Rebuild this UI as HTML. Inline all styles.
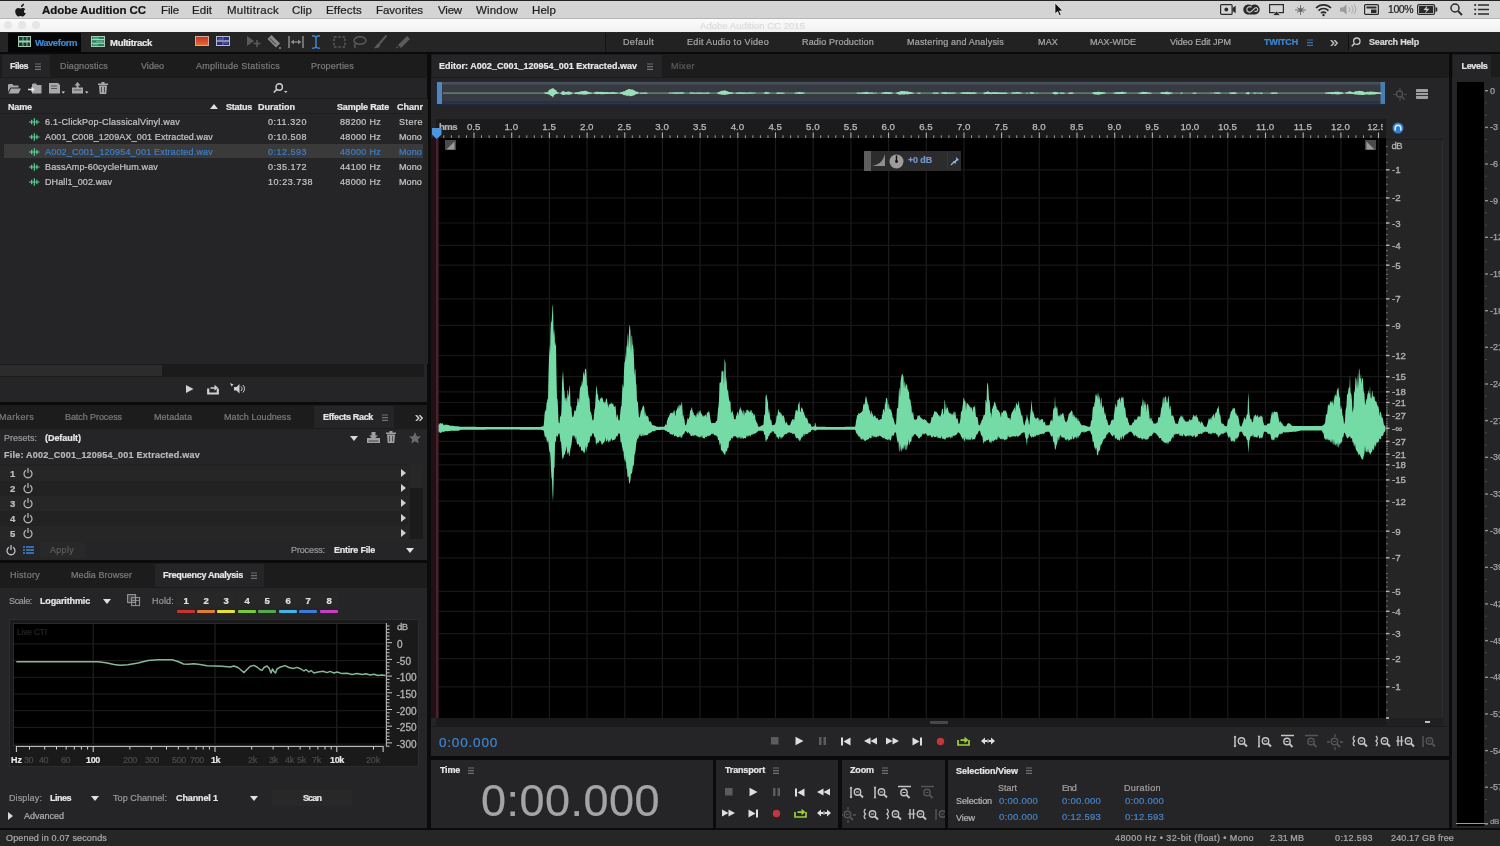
<!DOCTYPE html>
<html><head><meta charset="utf-8"><title>Adobe Audition CC</title>
<style>
html,body{margin:0;padding:0;background:#000;}
body{width:1500px;height:846px;position:relative;overflow:hidden;font-family:"Liberation Sans",sans-serif;}
#app{position:absolute;left:0;top:0;width:1500px;height:846px;overflow:hidden;background:#0b0b0b;filter:blur(.35px);}
#app div,#app span,#app svg{position:absolute;white-space:nowrap;}
#app svg{overflow:visible}
#app span{-webkit-text-stroke:.22px}
</style></head><body><div id="app">
<div style="left:0px;top:0px;width:1500px;height:19px;background:#d4d4d4;border-top:1px solid #222;box-sizing:border-box;"></div>
<div style="left:0px;top:18px;width:1500px;height:1px;background:#b5b5b5;"></div>
<svg style="left:15px;top:3px;" width="12" height="14" viewBox="0 0 12 14"><path d="M8.2 3.1c.6-.7.9-1.6.8-2.5-.8.1-1.7.6-2.2 1.2-.5.6-.9 1.5-.8 2.3.9.1 1.7-.4 2.2-1zM10.9 10c-.4 1-1 1.900-1.600 2.600-.5.6-1.100 1-1.800 1-.8 0-1-.5-2-.5s-1.300.5-2 .5c-.7 0-1.200-.5-1.700-1.100C.5 11 -.3 8.600.5 6.800c.5-1.100 1.600-1.900 2.700-1.900.9 0 1.500.5 2.300.5.700 0 1.200-.5 2.300-.5.900 0 1.900.5 2.500 1.300-2 1.200-1.700 4 .6 3.800z" fill="#1a1a1a"/></svg>
<span style="left:42px;top:1.5px;font-size:11.5px;line-height:16px;color:#141414;font-weight:bold;letter-spacing:-0.058px;">Adobe Audition CC</span>
<span style="left:161px;top:1.5px;font-size:11.5px;line-height:16px;color:#1e1e1e;letter-spacing:-0.133px;">File</span>
<span style="left:192px;top:1.5px;font-size:11.5px;line-height:16px;color:#1e1e1e;letter-spacing:0.046px;">Edit</span>
<span style="left:227px;top:1.5px;font-size:11.5px;line-height:16px;color:#1e1e1e;letter-spacing:0.280px;">Multitrack</span>
<span style="left:292px;top:1.5px;font-size:11.5px;line-height:16px;color:#1e1e1e;letter-spacing:0.047px;">Clip</span>
<span style="left:326px;top:1.5px;font-size:11.5px;line-height:16px;color:#1e1e1e;letter-spacing:0.151px;">Effects</span>
<span style="left:376px;top:1.5px;font-size:11.5px;line-height:16px;color:#1e1e1e;letter-spacing:-0.033px;">Favorites</span>
<span style="left:438px;top:1.5px;font-size:11.5px;line-height:16px;color:#1e1e1e;letter-spacing:-0.180px;">View</span>
<span style="left:476px;top:1.5px;font-size:11.5px;line-height:16px;color:#1e1e1e;letter-spacing:0.183px;">Window</span>
<span style="left:532px;top:1.5px;font-size:11.5px;line-height:16px;color:#1e1e1e;letter-spacing:0.087px;">Help</span>
<svg style="left:1220px;top:4px;" width="16" height="11" viewBox="0 0 16 11"><rect x=".6" y=".6" width="11.500" height="9.800" rx="1" fill="none" stroke="#2a2a2a" stroke-width="1.200"/><circle cx="6.300" cy="5.500" r="1.900" fill="#2a2a2a"/><path d="M12.500 4l3.200-2.300v7.600L12.500 7z" fill="#2a2a2a"/></svg>
<svg style="left:1243px;top:3px;" width="17" height="13" viewBox="0 0 17 13"><path d="M5.500 1.500C2.500 1.500 .3 3.800 .3 6.500s2.200 5 5.200 5h6c3 0 5.200-2.300 5.200-5s-2.200-5-5.200-5c-1.200 0-2.200.3-3 .9-.8-.6-1.800-.9-3-.9z" fill="#2a2a2a"/><path d="M8.500 4.300c-1.700-1.300-4.700-.4-4.700 2.200 0 2.700 3.200 3.400 4.700 1.800l3-3c1.300-1.200 3.200-.400 3.200 1.200 0 1.800-2 2.500-3.300 1.400" fill="none" stroke="#d2d2d2" stroke-width="1.100"/></svg>
<svg style="left:1269px;top:4px;" width="15" height="12" viewBox="0 0 15 12"><rect x=".6" y=".6" width="13.800" height="8" fill="none" stroke="#2a2a2a" stroke-width="1.200"/><path d="M3.500 11.500l4-4.500 4 4.500z" fill="#2a2a2a" stroke="#d4d4d4" stroke-width=".8"/></svg>
<svg style="left:1295px;top:5px;" width="11" height="10" viewBox="0 0 11 10"><path d="M5.500 0v10M0 5h11M2 2.500l7 5M9 2.500l-7 5" stroke="#777" stroke-width="1" fill="none"/><circle cx="5.500" cy="5" r="2" fill="#666"/></svg>
<svg style="left:1315px;top:3px;" width="17" height="13" viewBox="0 0 17 13"><path d="M1 5a10.500 10.500 0 0 1 15 0M3.500 7.600a7 7 0 0 1 10 0M6 10.100a3.500 3.500 0 0 1 5 0" fill="none" stroke="#2a2a2a" stroke-width="1.700"/><circle cx="8.500" cy="12" r="1.200" fill="#2a2a2a"/></svg>
<svg style="left:1340px;top:4px;" width="16" height="11" viewBox="0 0 16 11"><path d="M0 3.500h3l3.500-3v10l-3.500-3h-3z" fill="#9a9a9a"/><path d="M9 3a4 4 0 0 1 0 5M11.500 1.500a6.500 6.500 0 0 1 0 8M14 .5a8.500 8.500 0 0 1 0 10" fill="none" stroke="#aaa" stroke-width="1"/></svg>
<svg style="left:1364px;top:4px;" width="15" height="11" viewBox="0 0 15 11"><rect x=".6" y=".6" width="13.800" height="9.800" rx="1" fill="none" stroke="#2a2a2a" stroke-width="1.200"/><rect x="2.500" y="2.500" width="10" height="2" fill="#2a2a2a"/><rect x="7" y="5.500" width="5.500" height="3.500" fill="#2a2a2a"/></svg>
<span style="left:1388px;top:2.0px;font-size:10.5px;line-height:15px;color:#222;letter-spacing:-0.464px;">100%</span>
<svg style="left:1417px;top:4px;" width="21" height="11" viewBox="0 0 21 11"><rect x=".6" y=".6" width="17" height="9.800" rx="1.500" fill="none" stroke="#2a2a2a" stroke-width="1.200"/><rect x="2" y="2" width="14.200" height="7" fill="#2a2a2a"/><rect x="18.500" y="3.500" width="1.800" height="4" fill="#2a2a2a"/><path d="M10.500 1.500l-4 4.500h3l-1.500 3.500 4.500-4.800h-3z" fill="#d4d4d4"/></svg>
<svg style="left:1450px;top:3px;" width="13" height="13" viewBox="0 0 13 13"><circle cx="5" cy="5" r="4" fill="none" stroke="#2a2a2a" stroke-width="1.500"/><path d="M8 8l4 4" stroke="#2a2a2a" stroke-width="1.800"/></svg>
<svg style="left:1474px;top:4px;" width="15" height="11" viewBox="0 0 15 11"><path d="M4 1h11M4 5.500h11M4 10h11" stroke="#2a2a2a" stroke-width="1.600"/><circle cx="1.200" cy="1" r="1.100" fill="#2a2a2a"/><circle cx="1.200" cy="5.500" r="1.100" fill="#2a2a2a"/><circle cx="1.200" cy="10" r="1.100" fill="#2a2a2a"/></svg>
<svg style="left:1054px;top:3px;" width="9" height="14" viewBox="0 0 9 14"><path d="M1 0v11l2.600-2.400 1.800 4 1.800-.8-1.800-3.900h3.400z" fill="#111" stroke="#eee" stroke-width=".7"/></svg>
<div style="left:0px;top:19px;width:1500px;height:13px;background:linear-gradient(#fbfbfb,#f1f1f1);"></div>
<div style="left:4px;top:21px;width:8px;height:8px;background:#e6e6e6;border-radius:50%;"></div>
<div style="left:18px;top:21px;width:8px;height:8px;background:#e6e6e6;border-radius:50%;"></div>
<div style="left:32px;top:21px;width:8px;height:8px;background:#e6e6e6;border-radius:50%;"></div>
<span style="left:700px;top:19.0px;font-size:9.5px;line-height:13px;color:#dcdcdc;letter-spacing:0.043px;">Adobe Audition CC 2015</span>
<div style="left:0px;top:32px;width:1500px;height:20px;background:#252525;"></div>
<div style="left:0px;top:52px;width:1500px;height:2px;background:#0a0a0a;"></div>
<div style="left:0px;top:54px;width:427px;height:348px;background:#252426;"></div>
<div style="left:0px;top:54px;width:427px;height:23px;background:#1c1c1c;"></div>
<div style="left:2px;top:55px;width:48px;height:22px;background:#252426;"></div>
<div style="left:0px;top:405px;width:427px;height:155px;background:#252426;"></div>
<div style="left:0px;top:405px;width:427px;height:23px;background:#1c1c1c;"></div>
<div style="left:314px;top:406px;width:80px;height:22px;background:#252426;"></div>
<div style="left:0px;top:563px;width:427px;height:265px;background:#252426;"></div>
<div style="left:0px;top:563px;width:427px;height:24px;background:#1c1c1c;"></div>
<div style="left:155px;top:564px;width:109px;height:23px;background:#252426;"></div>
<div style="left:431px;top:54px;width:1017.5px;height:702px;background:#252426;"></div>
<div style="left:431px;top:54px;width:1017.5px;height:23px;background:#1c1c1c;"></div>
<div style="left:432px;top:55px;width:230px;height:22px;background:#252426;"></div>
<div style="left:431px;top:759.5px;width:281.5px;height:68.5px;background:#252426;"></div>
<div style="left:716px;top:759.5px;width:122px;height:68.5px;background:#252426;"></div>
<div style="left:841.5px;top:759.5px;width:103.5px;height:68.5px;background:#252426;"></div>
<div style="left:948px;top:759.5px;width:500.5px;height:68.5px;background:#252426;"></div>
<div style="left:1452px;top:54px;width:48px;height:774px;background:#252426;"></div>
<div style="left:1452px;top:54px;width:48px;height:23px;background:#1c1c1c;"></div>
<div style="left:1453px;top:55px;width:40px;height:22px;background:#252426;"></div>
<div style="left:0px;top:830px;width:1500px;height:16px;background:#262626;"></div>
<div style="left:8px;top:33px;width:73px;height:19px;background:#050505;"></div>
<svg style="left:18px;top:36px;" width="13" height="11" viewBox="0 0 13 11"><rect x=".5" y=".5" width="12" height="10" fill="#1d3a30" stroke="#a8c8b8" stroke-width="1"/><path d="M1 5.500h11" stroke="#7fe0b0" stroke-width="2"/><path d="M5 1v9M9 1v9" stroke="#a8c8b8" stroke-width=".8"/></svg>
<span style="left:35px;top:35.5px;font-size:9.5px;line-height:13px;color:#3b8ad8;font-weight:bold;letter-spacing:-0.447px;">Waveform</span>
<svg style="left:91px;top:36px;" width="14" height="11" viewBox="0 0 14 11"><rect x=".5" y=".5" width="13" height="10" fill="#2f7a5c" stroke="#a8c8b8" stroke-width="1"/><path d="M1 3.700h12M1 7.200h12" stroke="#bfe8d4" stroke-width="1"/><path d="M2 2.200h6M5 5.500h7M2 8.800h5" stroke="#46b586" stroke-width="1.400"/></svg>
<span style="left:110px;top:35.5px;font-size:9.5px;line-height:13px;color:#e8e8e8;font-weight:bold;letter-spacing:-0.287px;">Multitrack</span>
<svg style="left:195px;top:36px;" width="14" height="10" viewBox="0 0 14 10"><defs><linearGradient id="sg" x1="0" y1="0" x2="0" y2="1"><stop offset="0" stop-color="#c8302c"/><stop offset="1" stop-color="#e0702c"/></linearGradient></defs><rect x=".5" y=".5" width="13" height="9" fill="url(#sg)" stroke="#d8a8a0" stroke-width="1"/></svg>
<svg style="left:216px;top:36px;" width="14" height="10" viewBox="0 0 14 10"><rect x=".5" y=".5" width="13" height="9" fill="#2a2f78" stroke="#b8b8d8" stroke-width="1"/><path d="M1 5h12" stroke="#c8c8e8" stroke-width="1.200"/><path d="M7 1v8" stroke="#8888c0" stroke-width=".8"/><path d="M2 3h4M8 7h4" stroke="#6a6ab0" stroke-width="1"/></svg>
<svg style="left:246px;top:36px;" width="15" height="12" viewBox="0 0 15 12"><path d="M1 0l7 5-7 5z" fill="#5a5a5a"/><path d="M11 4v7M7.500 7.500h7" stroke="#5a5a5a" stroke-width="1.600"/></svg>
<svg style="left:267px;top:35px;" width="15" height="14" viewBox="0 0 15 14"><path d="M4.500 0l8.500 8.500-4 4L.5 4z" fill="#8a8a8a"/><path d="M3 3.500l6 6" stroke="#333" stroke-width="1"/><rect x="12" y="12" width="2" height="2" fill="#777"/></svg>
<svg style="left:288px;top:36px;" width="16" height="12" viewBox="0 0 16 12"><path d="M1 0v12M15 0v12" stroke="#8a8a8a" stroke-width="1.500"/><path d="M3 6h10" stroke="#8a8a8a" stroke-width="1.300"/><path d="M6 3.500L3 6l3 2.500zM10 3.500L13 6l-3 2.500z" fill="#8a8a8a"/></svg>
<svg style="left:312px;top:35px;" width="8" height="14" viewBox="0 0 8 14"><path d="M0 .7c2 0 4 .5 4 2.300v8c0 1.800-2 2.300-4 2.300M8 .7c-2 0-4 .5-4 2.300M8 13.300c-2 0-4-.5-4-2.300" fill="none" stroke="#3f86cf" stroke-width="1.500"/></svg>
<svg style="left:333px;top:36px;" width="13" height="12" viewBox="0 0 13 12"><rect x="1" y="1" width="11" height="10" fill="none" stroke="#5a5a5a" stroke-width="1.500" stroke-dasharray="2.500 1.700"/></svg>
<svg style="left:352px;top:36px;" width="15" height="13" viewBox="0 0 15 13"><ellipse cx="8" cy="4.500" rx="6" ry="3.700" fill="none" stroke="#5a5a5a" stroke-width="1.500"/><path d="M3.500 7.500q-2 2 0 4.500" fill="none" stroke="#5a5a5a" stroke-width="1.400"/></svg>
<svg style="left:373px;top:35px;" width="15" height="14" viewBox="0 0 15 14"><path d="M13.500 .5L6 9" stroke="#5a5a5a" stroke-width="2"/><path d="M6 8.500c-3 0-2.500 3.500-5.500 4.500 3 .8 7-.5 6.800-3.500z" fill="#5a5a5a"/></svg>
<svg style="left:395px;top:35px;" width="16" height="14" viewBox="0 0 16 14"><path d="M12 1l3 3-9 9-3-3z" fill="#5a5a5a"/><path d="M2 11l1.500 1.500L1 13.500z" fill="#5a5a5a"/></svg>
<div style="left:606px;top:33px;width:742px;height:19px;background:#222;"></div>
<div style="left:605px;top:33px;width:1px;height:19px;background:#141414;"></div>
<span style="left:623px;top:35.5px;font-size:9px;line-height:13px;color:#a6a6a6;letter-spacing:0.355px;">Default</span>
<span style="left:687px;top:35.5px;font-size:9px;line-height:13px;color:#a6a6a6;letter-spacing:0.321px;">Edit Audio to Video</span>
<span style="left:802px;top:35.5px;font-size:9px;line-height:13px;color:#a6a6a6;letter-spacing:0.184px;">Radio Production</span>
<span style="left:907px;top:35.5px;font-size:9px;line-height:13px;color:#a6a6a6;letter-spacing:0.202px;">Mastering and Analysis</span>
<span style="left:1038px;top:35.5px;font-size:9px;line-height:13px;color:#a6a6a6;letter-spacing:0.165px;">MAX</span>
<span style="left:1090px;top:35.5px;font-size:9px;line-height:13px;color:#a6a6a6;letter-spacing:-0.000px;">MAX-WIDE</span>
<span style="left:1170px;top:35.5px;font-size:9px;line-height:13px;color:#a6a6a6;letter-spacing:-0.027px;">Video Edit JPM</span>
<span style="left:1264px;top:35.5px;font-size:9px;line-height:13px;color:#3f86cf;font-weight:bold;letter-spacing:-0.165px;">TWITCH</span>
<svg style="left:1307px;top:38.5px;" width="6" height="8" viewBox="0 0 6 8"><path d="M0 1h6M0 3.700h6M0 6.400h6" stroke="#3f6ea8" stroke-width="1.200"/></svg>
<span style="left:1330px;top:30.5px;font-size:15px;line-height:21px;color:#c8c8c8;">»</span>
<div style="left:1348px;top:34px;width:1px;height:17px;background:#111;"></div>
<svg style="left:1351px;top:37px;" width="10" height="10" viewBox="0 0 10 10"><circle cx="5.800" cy="4.200" r="3.200" fill="none" stroke="#c8c8c8" stroke-width="1.300"/><path d="M3.500 6.500L.7 9.300" stroke="#c8c8c8" stroke-width="1.500"/></svg>
<span style="left:1369px;top:35.5px;font-size:9px;line-height:13px;color:#d8d8d8;font-weight:bold;letter-spacing:-0.184px;">Search Help</span>
<span style="left:10px;top:59.5px;font-size:9px;line-height:13px;color:#e6e6e6;font-weight:bold;letter-spacing:-0.502px;">Files</span>
<svg style="left:35px;top:62.5px;" width="6" height="8" viewBox="0 0 6 8"><path d="M0 1h6M0 3.700h6M0 6.400h6" stroke="#707070" stroke-width="1.200"/></svg>
<span style="left:60px;top:59.5px;font-size:9px;line-height:13px;color:#7a7a7a;letter-spacing:0.134px;">Diagnostics</span>
<span style="left:141px;top:59.5px;font-size:9px;line-height:13px;color:#7a7a7a;letter-spacing:0.028px;">Video</span>
<span style="left:196px;top:59.5px;font-size:9px;line-height:13px;color:#7a7a7a;letter-spacing:0.273px;">Amplitude Statistics</span>
<span style="left:311px;top:59.5px;font-size:9px;line-height:13px;color:#7a7a7a;letter-spacing:0.198px;">Properties</span>
<div style="left:0px;top:77px;width:428px;height:1px;background:#1a1a1a;"></div>
<svg style="left:8px;top:82.8px;" width="13" height="11" viewBox="0 0 13 11"><path d="M0 2.500c0-1 .5-1.500 1.500-1.500h3l1 1.500h5v2H2.500L0 9z" fill="#a8a8a8"/><path d="M3 5.500h10l-2.500 5H.5z" fill="#a8a8a8"/></svg>
<svg style="left:28px;top:82.8px;" width="14" height="11" viewBox="0 0 14 11"><path d="M4 2c0-1 .5-1.500 1.500-1.500h2.500l1 1.500h4.500v8.500H4z" fill="#a8a8a8"/><path d="M0 6.500h5M3.500 4.500l2.200 2-2.200 2" stroke="#e8e8e8" stroke-width="1.400" fill="none"/></svg>
<svg style="left:49px;top:82.8px;" width="16" height="11" viewBox="0 0 16 11"><path d="M0 0h9l2 2v8.500H0z" fill="#a8a8a8"/><path d="M2 3h6M2 5.500h6" stroke="#555" stroke-width="1"/><path d="M12.500 8.500h3.500l-1.750 2z" fill="#d8d8d8"/></svg>
<svg style="left:72px;top:81.8px;" width="18" height="12" viewBox="0 0 18 12"><path d="M0 5.500h11v6H0z" fill="#a8a8a8"/><path d="M5.500 0l3 3.500h-2v2.500h-2V3.500h-2z" fill="#a8a8a8"/><path d="M1.500 8h8" stroke="#555" stroke-width="1"/><path d="M13 9.500h3.500l-1.750 2z" fill="#d8d8d8"/></svg>
<svg style="left:98px;top:81.8px;" width="10" height="12" viewBox="0 0 10 12"><path d="M0 2.200h10M3.500 .700h3" stroke="#a8a8a8" stroke-width="1.400"/><path d="M1 3.500h8l-.7 8.500H1.700z" fill="#a8a8a8"/><path d="M3.500 5v5.500M6.500 5v5.500" stroke="#444" stroke-width=".9"/></svg>
<svg style="left:273px;top:82.8px;" width="16" height="11" viewBox="0 0 16 11"><circle cx="6.200" cy="4" r="3.200" fill="none" stroke="#d0d0d0" stroke-width="1.400"/><path d="M3.800 6.200L.8 9.500" stroke="#d0d0d0" stroke-width="1.600"/><path d="M11 8h3.500l-1.750 2z" fill="#d0d0d0"/></svg>
<div style="left:0px;top:98px;width:428px;height:1px;background:#1a1a1a;"></div>
<span style="left:8px;top:100.8px;font-size:9px;line-height:13px;color:#e6e6e6;font-weight:bold;letter-spacing:-0.128px;">Name</span>
<svg style="left:210px;top:104px;" width="8" height="5" viewBox="0 0 8 5"><path d="M0 5h8L4 0z" fill="#e0e0e0"/></svg>
<span style="left:226px;top:100.8px;font-size:9px;line-height:13px;color:#e6e6e6;font-weight:bold;letter-spacing:-0.252px;">Status</span>
<span style="left:258px;top:100.8px;font-size:9px;line-height:13px;color:#e6e6e6;font-weight:bold;letter-spacing:0.000px;">Duration</span>
<span style="left:337px;top:100.8px;font-size:9px;line-height:13px;color:#e6e6e6;font-weight:bold;letter-spacing:-0.184px;">Sample Rate</span>
<span style="left:397px;top:100.8px;font-size:9px;line-height:13px;color:#e6e6e6;font-weight:bold;letter-spacing:-0.001px;">Chanr</span>
<div style="left:0px;top:113px;width:428px;height:1px;background:#1d1d1d;"></div>
<svg style="left:28.5px;top:118px;" width="11" height="8" viewBox="0 0 11 8"><path d="M0 4h10.500" stroke="#4fc08a" stroke-width="1.100"/><path d="M2.700 1.800v4.400M5.300 .3v7.400M7.900 1.800v4.400" stroke="#62d49e" stroke-width="1.150"/></svg>
<span style="left:45px;top:115.5px;font-size:9px;line-height:13px;color:#c4c4c4;letter-spacing:0.229px;">6.1-ClickPop-ClassicalVinyl.wav</span>
<span style="left:268px;top:115.5px;font-size:9px;line-height:13px;color:#c4c4c4;letter-spacing:0.579px;">0:11.320</span>
<span style="left:340px;top:115.5px;font-size:9px;line-height:13px;color:#c4c4c4;letter-spacing:0.309px;">88200 Hz</span>
<span style="left:399px;top:115.5px;font-size:9px;line-height:13px;color:#c4c4c4;letter-spacing:0.497px;">Stere</span>
<svg style="left:28.5px;top:133px;" width="11" height="8" viewBox="0 0 11 8"><path d="M0 4h10.500" stroke="#4fc08a" stroke-width="1.100"/><path d="M2.700 1.800v4.400M5.300 .3v7.400M7.900 1.800v4.400" stroke="#62d49e" stroke-width="1.150"/></svg>
<span style="left:45px;top:130.5px;font-size:9px;line-height:13px;color:#c4c4c4;letter-spacing:0.129px;">A001_C008_1209AX_001 Extracted.wav</span>
<span style="left:268px;top:130.5px;font-size:9px;line-height:13px;color:#c4c4c4;letter-spacing:0.496px;">0:10.508</span>
<span style="left:340px;top:130.5px;font-size:9px;line-height:13px;color:#c4c4c4;letter-spacing:0.309px;">48000 Hz</span>
<span style="left:399px;top:130.5px;font-size:9px;line-height:13px;color:#c4c4c4;letter-spacing:0.121px;">Mono</span>
<div style="left:4px;top:144px;width:420px;height:14px;background:#3a3a3a;"></div>
<svg style="left:28.5px;top:148px;" width="11" height="8" viewBox="0 0 11 8"><path d="M0 4h10.500" stroke="#4fc08a" stroke-width="1.100"/><path d="M2.700 1.800v4.400M5.300 .3v7.400M7.900 1.800v4.400" stroke="#62d49e" stroke-width="1.150"/></svg>
<span style="left:45px;top:145.5px;font-size:9px;line-height:13px;color:#3d7ec6;letter-spacing:0.187px;">A002_C001_120954_001 Extracted.wav</span>
<span style="left:268px;top:145.5px;font-size:9px;line-height:13px;color:#3d7ec6;letter-spacing:0.496px;">0:12.593</span>
<span style="left:340px;top:145.5px;font-size:9px;line-height:13px;color:#3d7ec6;letter-spacing:0.309px;">48000 Hz</span>
<span style="left:399px;top:145.5px;font-size:9px;line-height:13px;color:#3d7ec6;letter-spacing:0.121px;">Mono</span>
<svg style="left:28.5px;top:163px;" width="11" height="8" viewBox="0 0 11 8"><path d="M0 4h10.500" stroke="#4fc08a" stroke-width="1.100"/><path d="M2.700 1.800v4.400M5.300 .3v7.400M7.900 1.800v4.400" stroke="#62d49e" stroke-width="1.150"/></svg>
<span style="left:45px;top:160.5px;font-size:9px;line-height:13px;color:#c4c4c4;letter-spacing:0.157px;">BassAmp-60cycleHum.wav</span>
<span style="left:268px;top:160.5px;font-size:9px;line-height:13px;color:#c4c4c4;letter-spacing:0.496px;">0:35.172</span>
<span style="left:340px;top:160.5px;font-size:9px;line-height:13px;color:#c4c4c4;letter-spacing:0.309px;">44100 Hz</span>
<span style="left:399px;top:160.5px;font-size:9px;line-height:13px;color:#c4c4c4;letter-spacing:0.121px;">Mono</span>
<svg style="left:28.5px;top:178px;" width="11" height="8" viewBox="0 0 11 8"><path d="M0 4h10.500" stroke="#4fc08a" stroke-width="1.100"/><path d="M2.700 1.800v4.400M5.300 .3v7.400M7.900 1.800v4.400" stroke="#62d49e" stroke-width="1.150"/></svg>
<span style="left:45px;top:175.5px;font-size:9px;line-height:13px;color:#c4c4c4;letter-spacing:0.104px;">DHall1_002.wav</span>
<span style="left:268px;top:175.5px;font-size:9px;line-height:13px;color:#c4c4c4;letter-spacing:0.551px;">10:23.738</span>
<span style="left:340px;top:175.5px;font-size:9px;line-height:13px;color:#c4c4c4;letter-spacing:0.309px;">48000 Hz</span>
<span style="left:399px;top:175.5px;font-size:9px;line-height:13px;color:#c4c4c4;letter-spacing:0.121px;">Mono</span>
<div style="left:423px;top:99px;width:5px;height:265px;background:#242424;"></div>
<div style="left:0px;top:364px;width:424px;height:13px;background:#1b1b1b;"></div>
<div style="left:0px;top:365px;width:162px;height:11px;background:#2c2c2c;"></div>
<svg style="left:186px;top:385px;" width="8" height="8" viewBox="0 0 8 8"><path d="M0 0l7.500 4-7.500 4z" fill="#d0d0d0"/></svg>
<svg style="left:207px;top:383.5px;" width="13" height="11" viewBox="0 0 13 11"><path d="M1.200 4.500v5h9.600v-5" fill="none" stroke="#d0d0d0" stroke-width="2.200"/><path d="M3.500 3.200h4V.8l3.500 3-3.500 3V4.800h-4z" fill="#d0d0d0"/></svg>
<svg style="left:230px;top:383px;" width="15" height="11" viewBox="0 0 15 11"><path d="M4 4h2.500l3-3v9.500l-3-3H4z" fill="#d0d0d0"/><path d="M11 3.500a3 3 0 0 1 0 4.500M12.800 2a5 5 0 0 1 0 7.500" stroke="#d0d0d0" fill="none" stroke-width="1"/><path d="M0 0l3.500 1.500L1.500 3.500z" fill="#d0d0d0"/></svg>
<span style="left:-1px;top:410.5px;font-size:9px;line-height:13px;color:#7a7a7a;letter-spacing:0.356px;">Markers</span>
<span style="left:65px;top:410.5px;font-size:9px;line-height:13px;color:#7a7a7a;letter-spacing:-0.079px;">Batch Process</span>
<span style="left:154px;top:410.5px;font-size:9px;line-height:13px;color:#7a7a7a;letter-spacing:0.059px;">Metadata</span>
<span style="left:224px;top:410.5px;font-size:9px;line-height:13px;color:#7a7a7a;letter-spacing:0.068px;">Match Loudness</span>
<span style="left:323px;top:410.5px;font-size:9px;line-height:13px;color:#e6e6e6;font-weight:bold;letter-spacing:-0.336px;">Effects Rack</span>
<svg style="left:382px;top:413.5px;" width="6" height="8" viewBox="0 0 6 8"><path d="M0 1h6M0 3.700h6M0 6.400h6" stroke="#707070" stroke-width="1.200"/></svg>
<span style="left:415px;top:405.5px;font-size:15px;line-height:21px;color:#d8d8d8;">»</span>
<div style="left:0px;top:428px;width:428px;height:1px;background:#1a1a1a;"></div>
<span style="left:4px;top:432.0px;font-size:9px;line-height:13px;color:#9a9a9a;letter-spacing:-0.002px;">Presets:</span>
<span style="left:45px;top:432.0px;font-size:9px;line-height:13px;color:#e6e6e6;font-weight:bold;letter-spacing:-0.056px;">(Default)</span>
<svg style="left:350px;top:435.5px;" width="8" height="5" viewBox="0 0 8 5"><path d="M0 0h8l-4.0 5z" fill="#d8d8d8"/></svg>
<svg style="left:367px;top:432px;" width="13" height="11" viewBox="0 0 13 11"><path d="M0 6h13v5H0z" fill="#a0a0a0"/><path d="M4.500 0h4v3.500h2.500l-4.500 4-4.500-4h2.500z" fill="#a0a0a0"/><path d="M1.500 9h10" stroke="#444" stroke-width="1"/></svg>
<svg style="left:386px;top:431px;" width="10" height="12" viewBox="0 0 10 12"><path d="M0 2.200h10M3.500 .700h3" stroke="#a0a0a0" stroke-width="1.400"/><path d="M1 3.500h8l-.7 8.500H1.700z" fill="#a0a0a0"/><path d="M3.500 5v5.500M6.500 5v5.500" stroke="#444" stroke-width=".9"/></svg>
<svg style="left:409px;top:432px;" width="12" height="12" viewBox="0 0 12 12"><path d="M6 0l1.800 4.200 4.200.3-3.200 2.800 1 4.300L6 9.200 2.200 11.600l1-4.300L0 4.500l4.200-.3z" fill="#6a6a6a"/></svg>
<span style="left:4px;top:449.0px;font-size:9px;line-height:13px;color:#b8b8b8;font-weight:bold;letter-spacing:0.230px;">File: A002_C001_120954_001 Extracted.wav</span>
<div style="left:0px;top:464px;width:408px;height:77px;background:#222;"></div>
<div style="left:0px;top:465.5px;width:408px;height:15px;background:#262626;"></div>
<span style="left:10px;top:466.5px;font-size:9.5px;line-height:13px;color:#c0c0c0;font-weight:bold;">1</span>
<svg style="left:23px;top:467.5px;" width="10" height="11" viewBox="0 0 10 11"><path d="M3 2.300a4 4 0 1 0 4 0" fill="none" stroke="#b0b0b0" stroke-width="1.300"/><path d="M5 0v5" stroke="#b0b0b0" stroke-width="1.300"/></svg>
<svg style="left:401px;top:469px;" width="5" height="8" viewBox="0 0 5 8"><path d="M0 0l5 4-5 4z" fill="#d0d0d0"/></svg>
<span style="left:10px;top:481.5px;font-size:9.5px;line-height:13px;color:#c0c0c0;font-weight:bold;">2</span>
<svg style="left:23px;top:482.5px;" width="10" height="11" viewBox="0 0 10 11"><path d="M3 2.300a4 4 0 1 0 4 0" fill="none" stroke="#b0b0b0" stroke-width="1.300"/><path d="M5 0v5" stroke="#b0b0b0" stroke-width="1.300"/></svg>
<svg style="left:401px;top:484px;" width="5" height="8" viewBox="0 0 5 8"><path d="M0 0l5 4-5 4z" fill="#d0d0d0"/></svg>
<div style="left:0px;top:495.5px;width:408px;height:15px;background:#262626;"></div>
<span style="left:10px;top:496.5px;font-size:9.5px;line-height:13px;color:#c0c0c0;font-weight:bold;">3</span>
<svg style="left:23px;top:497.5px;" width="10" height="11" viewBox="0 0 10 11"><path d="M3 2.300a4 4 0 1 0 4 0" fill="none" stroke="#b0b0b0" stroke-width="1.300"/><path d="M5 0v5" stroke="#b0b0b0" stroke-width="1.300"/></svg>
<svg style="left:401px;top:499px;" width="5" height="8" viewBox="0 0 5 8"><path d="M0 0l5 4-5 4z" fill="#d0d0d0"/></svg>
<span style="left:10px;top:511.5px;font-size:9.5px;line-height:13px;color:#c0c0c0;font-weight:bold;">4</span>
<svg style="left:23px;top:512.5px;" width="10" height="11" viewBox="0 0 10 11"><path d="M3 2.300a4 4 0 1 0 4 0" fill="none" stroke="#b0b0b0" stroke-width="1.300"/><path d="M5 0v5" stroke="#b0b0b0" stroke-width="1.300"/></svg>
<svg style="left:401px;top:514px;" width="5" height="8" viewBox="0 0 5 8"><path d="M0 0l5 4-5 4z" fill="#d0d0d0"/></svg>
<div style="left:0px;top:525.5px;width:408px;height:15px;background:#262626;"></div>
<span style="left:10px;top:526.5px;font-size:9.5px;line-height:13px;color:#c0c0c0;font-weight:bold;">5</span>
<svg style="left:23px;top:527.5px;" width="10" height="11" viewBox="0 0 10 11"><path d="M3 2.300a4 4 0 1 0 4 0" fill="none" stroke="#b0b0b0" stroke-width="1.300"/><path d="M5 0v5" stroke="#b0b0b0" stroke-width="1.300"/></svg>
<svg style="left:401px;top:529px;" width="5" height="8" viewBox="0 0 5 8"><path d="M0 0l5 4-5 4z" fill="#d0d0d0"/></svg>
<div style="left:410px;top:465px;width:13px;height:74px;background:#1b1b1b;"></div>
<div style="left:410px;top:465px;width:13px;height:23px;background:#272727;"></div>
<svg style="left:6px;top:544.5px;" width="10" height="11" viewBox="0 0 10 11"><path d="M3 2.300a4 4 0 1 0 4 0" fill="none" stroke="#c0c0c0" stroke-width="1.300"/><path d="M5 0v5" stroke="#c0c0c0" stroke-width="1.300"/></svg>
<svg style="left:23px;top:546px;" width="11" height="8" viewBox="0 0 11 8"><path d="M3 1h8M3 4h8M3 7h8" stroke="#3f86cf" stroke-width="1.500"/><path d="M0 1h2M0 4h2M0 7h2" stroke="#3f86cf" stroke-width="1.500"/></svg>
<div style="left:40px;top:542px;width:46px;height:16px;background:#282828;"></div>
<span style="left:50px;top:543.5px;font-size:9px;line-height:13px;color:#5c5c5c;letter-spacing:0.297px;">Apply</span>
<span style="left:291px;top:543.5px;font-size:9px;line-height:13px;color:#9a9a9a;letter-spacing:-0.127px;">Process:</span>
<span style="left:334px;top:543.5px;font-size:9px;line-height:13px;color:#e6e6e6;font-weight:bold;letter-spacing:-0.228px;">Entire File</span>
<svg style="left:406px;top:547.5px;" width="8" height="5" viewBox="0 0 8 5"><path d="M0 0h8l-4.0 5z" fill="#e0e0e0"/></svg>
<span style="left:10px;top:569.0px;font-size:9px;line-height:13px;color:#7a7a7a;letter-spacing:0.285px;">History</span>
<span style="left:71px;top:569.0px;font-size:9px;line-height:13px;color:#7a7a7a;letter-spacing:0.075px;">Media Browser</span>
<span style="left:163px;top:569.0px;font-size:9px;line-height:13px;color:#e6e6e6;font-weight:bold;letter-spacing:-0.261px;">Frequency Analysis</span>
<svg style="left:251px;top:572.0px;" width="6" height="8" viewBox="0 0 6 8"><path d="M0 1h6M0 3.700h6M0 6.400h6" stroke="#707070" stroke-width="1.200"/></svg>
<div style="left:0px;top:587px;width:428px;height:1px;background:#1a1a1a;"></div>
<span style="left:9px;top:594.8px;font-size:9px;line-height:13px;color:#9a9a9a;letter-spacing:-0.336px;">Scale:</span>
<span style="left:40px;top:594.8px;font-size:9px;line-height:13px;color:#e6e6e6;font-weight:bold;letter-spacing:-0.137px;">Logarithmic</span>
<svg style="left:103px;top:598.5px;" width="8" height="5" viewBox="0 0 8 5"><path d="M0 0h8l-4.0 5z" fill="#e0e0e0"/></svg>
<svg style="left:127px;top:594px;" width="13" height="12" viewBox="0 0 13 12"><rect x=".6" y=".6" width="8" height="8" fill="#444" stroke="#9a9a9a" stroke-width="1"/><rect x="4.600" y="3.600" width="8" height="8" fill="none" stroke="#9a9a9a" stroke-width="1"/><path d="M4.600 6.500h8M8.600 3.600v8" stroke="#9a9a9a" stroke-width=".8"/></svg>
<span style="left:152px;top:594.8px;font-size:9px;line-height:13px;color:#9a9a9a;letter-spacing:0.198px;">Hold:</span>
<div style="left:176px;top:592px;width:20px;height:15px;background:#272727;"></div>
<span style="left:183.5px;top:594.3px;font-size:9.5px;line-height:13px;color:#e0e0e0;font-weight:bold;">1</span>
<div style="left:177px;top:609.7px;width:18px;height:3px;background:#c8342c;border-radius:1px;"></div>
<div style="left:196px;top:592px;width:20px;height:15px;background:#272727;"></div>
<span style="left:203.5px;top:594.3px;font-size:9.5px;line-height:13px;color:#e0e0e0;font-weight:bold;">2</span>
<div style="left:197px;top:609.7px;width:18px;height:3px;background:#e07c34;border-radius:1px;"></div>
<div style="left:216px;top:592px;width:20px;height:15px;background:#272727;"></div>
<span style="left:223.5px;top:594.3px;font-size:9.5px;line-height:13px;color:#e0e0e0;font-weight:bold;">3</span>
<div style="left:217px;top:609.7px;width:18px;height:3px;background:#e6e03c;border-radius:1px;"></div>
<div style="left:237px;top:592px;width:20px;height:15px;background:#272727;"></div>
<span style="left:244.5px;top:594.3px;font-size:9.5px;line-height:13px;color:#e0e0e0;font-weight:bold;">4</span>
<div style="left:238px;top:609.7px;width:18px;height:3px;background:#7cc83c;border-radius:1px;"></div>
<div style="left:257px;top:592px;width:20px;height:15px;background:#272727;"></div>
<span style="left:264.5px;top:594.3px;font-size:9.5px;line-height:13px;color:#e0e0e0;font-weight:bold;">5</span>
<div style="left:258px;top:609.7px;width:18px;height:3px;background:#52a84c;border-radius:1px;"></div>
<div style="left:278px;top:592px;width:20px;height:15px;background:#272727;"></div>
<span style="left:285.5px;top:594.3px;font-size:9.5px;line-height:13px;color:#e0e0e0;font-weight:bold;">6</span>
<div style="left:279px;top:609.7px;width:18px;height:3px;background:#44b4e0;border-radius:1px;"></div>
<div style="left:298px;top:592px;width:20px;height:15px;background:#272727;"></div>
<span style="left:305.5px;top:594.3px;font-size:9.5px;line-height:13px;color:#e0e0e0;font-weight:bold;">7</span>
<div style="left:299px;top:609.7px;width:18px;height:3px;background:#3c7cd8;border-radius:1px;"></div>
<div style="left:319px;top:592px;width:20px;height:15px;background:#272727;"></div>
<span style="left:326.5px;top:594.3px;font-size:9.5px;line-height:13px;color:#e0e0e0;font-weight:bold;">8</span>
<div style="left:320px;top:609.7px;width:18px;height:3px;background:#c83cc8;border-radius:1px;"></div>
<div style="left:9px;top:619px;width:410px;height:148px;background:#1a1a1a;border:1px solid #2c2c2c;box-sizing:border-box;"></div>
<svg style="left:13px;top:623px;" width="373" height="123" viewBox="0 0 373 123"><rect x="0" y="0" width="373" height="123" fill="#000"/><path d="M80.2 0V123" stroke="#272727" stroke-width="1"/><path d="M202.0 0V123" stroke="#272727" stroke-width="1"/><path d="M323.8 0V123" stroke="#272727" stroke-width="1"/><path d="M0 20.9H373" stroke="#1f1f1f" stroke-width="1"/><path d="M0 37.6H373" stroke="#1f1f1f" stroke-width="1"/><path d="M0 54.3H373" stroke="#1f1f1f" stroke-width="1"/><path d="M0 71.0H373" stroke="#1f1f1f" stroke-width="1"/><path d="M0 87.7H373" stroke="#1f1f1f" stroke-width="1"/><path d="M0 104.4H373" stroke="#1f1f1f" stroke-width="1"/><path d="M0 121.1H373" stroke="#1f1f1f" stroke-width="1"/><rect x=".5" y=".5" width="372" height="122" fill="none" stroke="#2a2a2a"/><path d="M3.3 38.7 L47.0 38.7 L85.0 38.7 L93.0 39.8 L101.0 41.5 L107.0 42.2 L115.0 41.8 L125.0 40.0 L135.0 37.6 L145.0 36.7 L159.0 36.8 L165.0 38.5 L170.5 41.0 L175.0 41.2 L181.0 40.8 L187.0 41.6 L194.0 42.8 L202.0 43.0 L209.0 43.2 L217.0 44.0 L221.0 43.0 L225.0 44.5 L228.0 47.0 L231.0 49.6 L234.0 46.5 L237.0 43.5 L240.7 42.4 L244.0 44.0 L247.0 46.5 L249.0 47.4 L251.0 44.5 L254.0 43.0 L256.0 45.0 L258.0 50.0 L259.5 46.0 L261.0 48.5 L262.5 50.0 L264.0 46.0 L267.0 44.2 L272.0 42.6 L276.0 44.5 L280.0 45.5 L284.0 44.4 L288.0 46.0 L291.0 48.0 L293.0 46.5 L296.0 49.0 L298.0 47.5 L301.0 50.0 L305.0 49.0 L310.0 48.3 L314.0 49.6 L317.0 48.4 L321.0 50.0 L324.0 49.0 L329.0 50.6 L334.0 50.2 L339.0 51.4 L344.0 50.5 L349.0 51.6 L353.0 50.8 L357.0 52.0 L361.0 51.2 L365.0 52.5 L369.0 52.0 L372.5 52.6" fill="none" stroke="#86b898" stroke-width="1.500" stroke-linejoin="round"/></svg>
<span style="left:17px;top:625.5px;font-size:8.5px;line-height:12px;color:#262626;letter-spacing:-0.206px;">Live CTI</span>
<svg style="left:0px;top:746px;" width="420" height="8" viewBox="0 0 420 8"><path d="M16.4 0v6" stroke="#d8d8d8" stroke-width="1"/><path d="M29.5 0v3.5" stroke="#d8d8d8" stroke-width="1"/><path d="M44.7 0v3.5" stroke="#d8d8d8" stroke-width="1"/><path d="M56.5 0v3.5" stroke="#d8d8d8" stroke-width="1"/><path d="M66.2 0v3.5" stroke="#d8d8d8" stroke-width="1"/><path d="M74.3 0v3.5" stroke="#d8d8d8" stroke-width="1"/><path d="M81.4 0v3.5" stroke="#d8d8d8" stroke-width="1"/><path d="M87.6 0v3.5" stroke="#d8d8d8" stroke-width="1"/><path d="M93.2 0v6" stroke="#d8d8d8" stroke-width="1"/><path d="M129.9 0v3.5" stroke="#d8d8d8" stroke-width="1"/><path d="M151.3 0v3.5" stroke="#d8d8d8" stroke-width="1"/><path d="M166.5 0v3.5" stroke="#d8d8d8" stroke-width="1"/><path d="M178.3 0v3.5" stroke="#d8d8d8" stroke-width="1"/><path d="M188.0 0v3.5" stroke="#d8d8d8" stroke-width="1"/><path d="M196.1 0v3.5" stroke="#d8d8d8" stroke-width="1"/><path d="M203.2 0v3.5" stroke="#d8d8d8" stroke-width="1"/><path d="M209.4 0v3.5" stroke="#d8d8d8" stroke-width="1"/><path d="M215.0 0v6" stroke="#d8d8d8" stroke-width="1"/><path d="M251.7 0v3.5" stroke="#d8d8d8" stroke-width="1"/><path d="M273.1 0v3.5" stroke="#d8d8d8" stroke-width="1"/><path d="M288.3 0v3.5" stroke="#d8d8d8" stroke-width="1"/><path d="M300.1 0v3.5" stroke="#d8d8d8" stroke-width="1"/><path d="M309.8 0v3.5" stroke="#d8d8d8" stroke-width="1"/><path d="M317.9 0v3.5" stroke="#d8d8d8" stroke-width="1"/><path d="M325.0 0v3.5" stroke="#d8d8d8" stroke-width="1"/><path d="M331.2 0v3.5" stroke="#d8d8d8" stroke-width="1"/><path d="M336.8 0v6" stroke="#d8d8d8" stroke-width="1"/><path d="M373.5 0v3.5" stroke="#d8d8d8" stroke-width="1"/><path d="M383.1 0v6" stroke="#d8d8d8" stroke-width="1"/><path d="M16.4 .5H383.1" stroke="#bbb" stroke-width="1"/></svg>
<span style="left:11px;top:753.5px;font-size:9px;line-height:13px;color:#e6e6e6;font-weight:bold;letter-spacing:0.000px;">Hz</span>
<span style="left:24px;top:753.5px;font-size:9px;line-height:13px;color:#4a4a4a;letter-spacing:-0.506px;">30</span>
<span style="left:39px;top:753.5px;font-size:9px;line-height:13px;color:#4a4a4a;letter-spacing:-0.506px;">40</span>
<span style="left:61px;top:753.5px;font-size:9px;line-height:13px;color:#4a4a4a;letter-spacing:-0.506px;">60</span>
<span style="left:86px;top:753.5px;font-size:9px;line-height:13px;color:#e6e6e6;font-weight:bold;letter-spacing:-0.339px;">100</span>
<span style="left:123px;top:753.5px;font-size:9px;line-height:13px;color:#4a4a4a;letter-spacing:-0.339px;">200</span>
<span style="left:145px;top:753.5px;font-size:9px;line-height:13px;color:#4a4a4a;letter-spacing:-0.339px;">300</span>
<span style="left:172px;top:753.5px;font-size:9px;line-height:13px;color:#4a4a4a;letter-spacing:-0.339px;">500</span>
<span style="left:190px;top:753.5px;font-size:9px;line-height:13px;color:#4a4a4a;letter-spacing:-0.339px;">700</span>
<span style="left:211px;top:753.5px;font-size:9px;line-height:13px;color:#e6e6e6;font-weight:bold;letter-spacing:-0.506px;">1k</span>
<span style="left:248px;top:753.5px;font-size:9px;line-height:13px;color:#4a4a4a;letter-spacing:-0.253px;">2k</span>
<span style="left:269px;top:753.5px;font-size:9px;line-height:13px;color:#4a4a4a;letter-spacing:-0.253px;">3k</span>
<span style="left:285px;top:753.5px;font-size:9px;line-height:13px;color:#4a4a4a;letter-spacing:-0.253px;">4k</span>
<span style="left:297px;top:753.5px;font-size:9px;line-height:13px;color:#4a4a4a;letter-spacing:-0.253px;">5k</span>
<span style="left:312px;top:753.5px;font-size:9px;line-height:13px;color:#4a4a4a;letter-spacing:-0.253px;">7k</span>
<span style="left:330px;top:753.5px;font-size:9px;line-height:13px;color:#e6e6e6;font-weight:bold;letter-spacing:-0.339px;">10k</span>
<span style="left:366px;top:753.5px;font-size:9px;line-height:13px;color:#4a4a4a;letter-spacing:-0.171px;">20k</span>
<svg style="left:386px;top:623px;" width="8" height="126" viewBox="0 0 8 126"><path d="M0 3.0h3.5" stroke="#c8c8c8" stroke-width="1"/><path d="M0 6.3h3.5" stroke="#c8c8c8" stroke-width="1"/><path d="M0 9.7h3.5" stroke="#c8c8c8" stroke-width="1"/><path d="M0 13.0h3.5" stroke="#c8c8c8" stroke-width="1"/><path d="M0 16.4h3.5" stroke="#c8c8c8" stroke-width="1"/><path d="M0 19.7h6" stroke="#c8c8c8" stroke-width="1"/><path d="M0 23.0h3.5" stroke="#c8c8c8" stroke-width="1"/><path d="M0 26.4h3.5" stroke="#c8c8c8" stroke-width="1"/><path d="M0 29.7h3.5" stroke="#c8c8c8" stroke-width="1"/><path d="M0 33.1h3.5" stroke="#c8c8c8" stroke-width="1"/><path d="M0 36.4h6" stroke="#c8c8c8" stroke-width="1"/><path d="M0 39.7h3.5" stroke="#c8c8c8" stroke-width="1"/><path d="M0 43.1h3.5" stroke="#c8c8c8" stroke-width="1"/><path d="M0 46.4h3.5" stroke="#c8c8c8" stroke-width="1"/><path d="M0 49.8h3.5" stroke="#c8c8c8" stroke-width="1"/><path d="M0 53.1h6" stroke="#c8c8c8" stroke-width="1"/><path d="M0 56.4h3.5" stroke="#c8c8c8" stroke-width="1"/><path d="M0 59.8h3.5" stroke="#c8c8c8" stroke-width="1"/><path d="M0 63.1h3.5" stroke="#c8c8c8" stroke-width="1"/><path d="M0 66.5h3.5" stroke="#c8c8c8" stroke-width="1"/><path d="M0 69.8h6" stroke="#c8c8c8" stroke-width="1"/><path d="M0 73.1h3.5" stroke="#c8c8c8" stroke-width="1"/><path d="M0 76.5h3.5" stroke="#c8c8c8" stroke-width="1"/><path d="M0 79.8h3.5" stroke="#c8c8c8" stroke-width="1"/><path d="M0 83.2h3.5" stroke="#c8c8c8" stroke-width="1"/><path d="M0 86.5h6" stroke="#c8c8c8" stroke-width="1"/><path d="M0 89.8h3.5" stroke="#c8c8c8" stroke-width="1"/><path d="M0 93.2h3.5" stroke="#c8c8c8" stroke-width="1"/><path d="M0 96.5h3.5" stroke="#c8c8c8" stroke-width="1"/><path d="M0 99.9h3.5" stroke="#c8c8c8" stroke-width="1"/><path d="M0 103.2h6" stroke="#c8c8c8" stroke-width="1"/><path d="M0 106.5h3.5" stroke="#c8c8c8" stroke-width="1"/><path d="M0 109.9h3.5" stroke="#c8c8c8" stroke-width="1"/><path d="M0 113.2h3.5" stroke="#c8c8c8" stroke-width="1"/><path d="M0 116.6h3.5" stroke="#c8c8c8" stroke-width="1"/><path d="M0 119.9h6" stroke="#c8c8c8" stroke-width="1"/><path d="M0 123.2h3.5" stroke="#c8c8c8" stroke-width="1"/><path d="M.5 0V123" stroke="#aaa" stroke-width="1"/></svg>
<span style="left:397px;top:620.0px;font-size:9.5px;line-height:13px;color:#b4b4b4;letter-spacing:-0.560px;-webkit-text-stroke:.3px #b4b4b4;">dB</span>
<span style="left:397px;top:637.8px;font-size:10px;line-height:14px;color:#b4b4b4;-webkit-text-stroke:.3px #b4b4b4;">0</span>
<span style="left:396.5px;top:654.5px;font-size:10px;line-height:14px;color:#b4b4b4;-webkit-text-stroke:.3px #b4b4b4;">-50</span>
<span style="left:396.5px;top:671.2px;font-size:10px;line-height:14px;color:#b4b4b4;-webkit-text-stroke:.3px #b4b4b4;">-100</span>
<span style="left:396.5px;top:687.8px;font-size:10px;line-height:14px;color:#b4b4b4;-webkit-text-stroke:.3px #b4b4b4;">-150</span>
<span style="left:396.5px;top:704.5px;font-size:10px;line-height:14px;color:#b4b4b4;-webkit-text-stroke:.3px #b4b4b4;">-200</span>
<span style="left:396.5px;top:721.2px;font-size:10px;line-height:14px;color:#b4b4b4;-webkit-text-stroke:.3px #b4b4b4;">-250</span>
<span style="left:396.5px;top:737.9px;font-size:10px;line-height:14px;color:#b4b4b4;-webkit-text-stroke:.3px #b4b4b4;">-300</span>
<span style="left:9px;top:791.5px;font-size:9px;line-height:13px;color:#9a9a9a;letter-spacing:0.124px;">Display:</span>
<span style="left:50px;top:791.5px;font-size:9px;line-height:13px;color:#e6e6e6;font-weight:bold;letter-spacing:-0.502px;">Lines</span>
<svg style="left:91px;top:795.5px;" width="8" height="5" viewBox="0 0 8 5"><path d="M0 0h8l-4.0 5z" fill="#e0e0e0"/></svg>
<span style="left:113px;top:791.5px;font-size:9px;line-height:13px;color:#9a9a9a;letter-spacing:0.080px;">Top Channel:</span>
<span style="left:176px;top:791.5px;font-size:9px;line-height:13px;color:#e6e6e6;font-weight:bold;letter-spacing:-0.112px;">Channel 1</span>
<svg style="left:250px;top:795.5px;" width="8" height="5" viewBox="0 0 8 5"><path d="M0 0h8l-4.0 5z" fill="#e0e0e0"/></svg>
<div style="left:272px;top:790px;width:80px;height:16px;background:#282828;"></div>
<span style="left:303px;top:791.5px;font-size:9px;line-height:13px;color:#e6e6e6;font-weight:bold;letter-spacing:-0.878px;">Scan</span>
<svg style="left:8px;top:812px;" width="5" height="8" viewBox="0 0 5 8"><path d="M0 0l5 4-5 4z" fill="#d8d8d8"/></svg>
<span style="left:24px;top:809.5px;font-size:9px;line-height:13px;color:#b0b0b0;letter-spacing:-0.004px;">Advanced</span>
<span style="left:6px;top:831.5px;font-size:9px;line-height:13px;color:#a8a8a8;letter-spacing:0.156px;">Opened in 0.07 seconds</span>
<span style="left:439px;top:59.5px;font-size:9px;line-height:13px;color:#e6e6e6;font-weight:bold;letter-spacing:0.017px;">Editor: A002_C001_120954_001 Extracted.wav</span>
<svg style="left:647px;top:62.5px;" width="6" height="8" viewBox="0 0 6 8"><path d="M0 1h6M0 3.700h6M0 6.400h6" stroke="#707070" stroke-width="1.200"/></svg>
<span style="left:671px;top:59.5px;font-size:9px;line-height:13px;color:#5c5c5c;letter-spacing:0.400px;">Mixer</span>
<div style="left:431px;top:77px;width:1016px;height:1px;background:#1a1a1a;"></div>
<svg style="left:436px;top:81px;" width="950" height="24" viewBox="0 0 950 24"><rect x=".5" y=".5" width="949" height="23" fill="#373a41" stroke="#1b2a44" stroke-width="1"/><rect x="1" y="1" width="948" height="2.500" fill="#46505c"/><rect x="1" y="20" width="948" height="2.500" fill="#2c3140"/><rect x="1" y="1" width="5" height="22" fill="#5286ba"/><rect x="944.5" y="1" width="4.500" height="22" fill="#4a7cae"/><rect x="7" y="11.400" width="936" height="1.400" fill="#64897a"/><path d="M0.0 12.10 L1.0 12.10 L2.0 12.10 L3.0 12.10 L4.0 12.10 L5.0 12.10 L6.0 12.10 L7.0 12.10 L8.0 12.10 L9.0 12.10 L10.0 12.10 L11.0 12.10 L12.0 12.10 L13.0 12.10 L14.0 12.10 L15.0 12.10 L16.0 12.10 L17.0 12.10 L18.0 12.10 L19.0 12.10 L20.0 12.10 L21.0 12.10 L22.0 12.10 L23.0 12.10 L24.0 12.10 L25.0 12.10 L26.0 12.10 L27.0 12.10 L28.0 12.10 L29.0 12.10 L30.0 12.10 L31.0 12.10 L32.0 12.10 L33.0 12.10 L34.0 12.10 L35.0 12.10 L36.0 12.10 L37.0 12.10 L38.0 12.10 L39.0 12.10 L40.0 12.10 L41.0 12.10 L42.0 12.10 L43.0 12.10 L44.0 12.10 L45.0 12.10 L46.0 12.10 L47.0 12.10 L48.0 12.10 L49.0 12.10 L50.0 12.10 L51.0 12.10 L52.0 12.10 L53.0 12.10 L54.0 12.10 L55.0 12.10 L56.0 12.10 L57.0 12.10 L58.0 12.10 L59.0 12.10 L60.0 12.10 L61.0 12.10 L62.0 12.10 L63.0 12.10 L64.0 12.10 L65.0 12.10 L66.0 12.10 L67.0 12.10 L68.0 12.10 L69.0 12.10 L70.0 12.10 L71.0 12.10 L72.0 12.10 L73.0 12.10 L74.0 12.10 L75.0 12.10 L76.0 12.10 L77.0 12.10 L78.0 12.10 L79.0 12.10 L80.0 12.10 L81.0 12.10 L82.0 12.10 L83.0 12.10 L84.0 12.10 L85.0 12.10 L86.0 12.10 L87.0 12.10 L88.0 12.10 L89.0 12.10 L90.0 12.10 L91.0 12.10 L92.0 12.10 L93.0 12.10 L94.0 12.10 L95.0 12.10 L96.0 12.10 L97.0 12.10 L98.0 12.10 L99.0 12.10 L100.0 12.10 L101.0 12.10 L102.0 12.10 L103.0 12.10 L104.0 12.10 L105.0 12.10 L106.0 12.10 L107.0 12.10 L108.0 12.10 L109.0 11.34 L110.0 11.50 L111.0 10.94 L112.0 11.06 L113.0 8.71 L114.0 8.81 L115.0 7.82 L116.0 7.66 L117.0 7.05 L118.0 7.83 L119.0 9.07 L120.0 8.85 L121.0 10.94 L122.0 11.20 L123.0 12.10 L124.0 12.10 L125.0 11.68 L126.0 10.43 L127.0 9.76 L128.0 10.51 L129.0 10.69 L130.0 10.92 L131.0 10.72 L132.0 10.59 L133.0 10.41 L134.0 10.71 L135.0 11.25 L136.0 11.58 L137.0 12.10 L138.0 12.10 L139.0 11.41 L140.0 11.44 L141.0 11.18 L142.0 10.92 L143.0 10.92 L144.0 10.50 L145.0 10.27 L146.0 10.13 L147.0 10.06 L148.0 9.88 L149.0 9.85 L150.0 9.68 L151.0 10.35 L152.0 10.65 L153.0 10.92 L154.0 11.38 L155.0 11.49 L156.0 11.64 L157.0 12.10 L158.0 11.51 L159.0 11.33 L160.0 10.66 L161.0 10.70 L162.0 10.75 L163.0 10.88 L164.0 10.92 L165.0 10.83 L166.0 10.88 L167.0 10.99 L168.0 11.04 L169.0 11.01 L170.0 11.18 L171.0 11.01 L172.0 11.02 L173.0 11.38 L174.0 11.16 L175.0 11.15 L176.0 11.12 L177.0 11.11 L178.0 11.20 L179.0 11.25 L180.0 11.39 L181.0 11.58 L182.0 11.68 L183.0 12.10 L184.0 11.61 L185.0 11.25 L186.0 10.88 L187.0 10.38 L188.0 10.14 L189.0 10.18 L190.0 9.05 L191.0 9.07 L192.0 8.19 L193.0 8.07 L194.0 7.90 L195.0 8.74 L196.0 8.33 L197.0 8.83 L198.0 9.17 L199.0 9.68 L200.0 10.78 L201.0 10.45 L202.0 11.12 L203.0 12.10 L204.0 11.65 L205.0 11.41 L206.0 11.67 L207.0 11.38 L208.0 11.40 L209.0 11.43 L210.0 11.49 L211.0 11.68 L212.0 12.10 L213.0 12.10 L214.0 12.10 L215.0 12.10 L216.0 12.10 L217.0 12.10 L218.0 12.10 L219.0 12.10 L220.0 12.10 L221.0 12.10 L222.0 12.10 L223.0 12.10 L224.0 12.10 L225.0 12.10 L226.0 12.10 L227.0 12.10 L228.0 12.10 L229.0 12.10 L230.0 12.10 L231.0 12.10 L232.0 12.10 L233.0 11.68 L234.0 11.55 L235.0 11.54 L236.0 11.52 L237.0 11.50 L238.0 11.35 L239.0 11.46 L240.0 11.30 L241.0 11.32 L242.0 11.25 L243.0 11.42 L244.0 11.29 L245.0 11.14 L246.0 11.05 L247.0 11.56 L248.0 11.55 L249.0 12.10 L250.0 12.10 L251.0 12.10 L252.0 12.10 L253.0 12.10 L254.0 11.45 L255.0 11.41 L256.0 11.35 L257.0 11.37 L258.0 11.59 L259.0 11.63 L260.0 11.64 L261.0 11.58 L262.0 11.44 L263.0 11.41 L264.0 11.39 L265.0 11.47 L266.0 11.58 L267.0 11.64 L268.0 11.65 L269.0 11.65 L270.0 11.56 L271.0 11.45 L272.0 11.56 L273.0 11.43 L274.0 12.10 L275.0 12.10 L276.0 12.10 L277.0 12.10 L278.0 12.10 L279.0 12.10 L280.0 12.10 L281.0 12.10 L282.0 11.22 L283.0 11.01 L284.0 10.61 L285.0 9.88 L286.0 9.76 L287.0 9.66 L288.0 9.45 L289.0 9.37 L290.0 9.90 L291.0 10.10 L292.0 10.54 L293.0 10.96 L294.0 11.04 L295.0 11.23 L296.0 11.41 L297.0 11.51 L298.0 12.10 L299.0 12.10 L300.0 11.65 L301.0 11.52 L302.0 11.48 L303.0 11.36 L304.0 11.29 L305.0 11.59 L306.0 11.30 L307.0 11.47 L308.0 11.46 L309.0 11.41 L310.0 11.50 L311.0 11.66 L312.0 11.41 L313.0 11.51 L314.0 11.37 L315.0 11.47 L316.0 11.44 L317.0 11.60 L318.0 11.67 L319.0 11.56 L320.0 12.10 L321.0 12.10 L322.0 12.10 L323.0 12.10 L324.0 12.10 L325.0 12.10 L326.0 12.10 L327.0 12.10 L328.0 11.66 L329.0 11.43 L330.0 10.77 L331.0 10.90 L332.0 11.48 L333.0 11.33 L334.0 12.10 L335.0 12.10 L336.0 12.10 L337.0 12.10 L338.0 12.10 L339.0 12.10 L340.0 12.10 L341.0 11.62 L342.0 11.40 L343.0 11.38 L344.0 11.60 L345.0 11.61 L346.0 11.60 L347.0 11.63 L348.0 11.69 L349.0 12.10 L350.0 12.10 L351.0 12.10 L352.0 12.10 L353.0 12.10 L354.0 12.10 L355.0 12.10 L356.0 12.10 L357.0 12.10 L358.0 12.10 L359.0 11.63 L360.0 11.43 L361.0 11.44 L362.0 11.27 L363.0 11.09 L364.0 10.96 L365.0 11.32 L366.0 11.31 L367.0 11.47 L368.0 11.48 L369.0 12.10 L370.0 12.10 L371.0 12.10 L372.0 12.10 L373.0 12.10 L374.0 12.10 L375.0 12.10 L376.0 12.10 L377.0 12.10 L378.0 12.10 L379.0 12.10 L380.0 12.10 L381.0 12.10 L382.0 12.10 L383.0 12.10 L384.0 12.10 L385.0 12.10 L386.0 12.10 L387.0 12.10 L388.0 12.10 L389.0 12.10 L390.0 12.10 L391.0 12.10 L392.0 12.10 L393.0 12.10 L394.0 12.10 L395.0 12.10 L396.0 12.10 L397.0 12.10 L398.0 12.10 L399.0 12.10 L400.0 12.10 L401.0 12.10 L402.0 12.10 L403.0 12.10 L404.0 12.10 L405.0 12.10 L406.0 12.10 L407.0 12.10 L408.0 12.10 L409.0 12.10 L410.0 12.10 L411.0 12.10 L412.0 12.10 L413.0 12.10 L414.0 12.10 L415.0 12.10 L416.0 12.10 L417.0 12.10 L418.0 12.10 L419.0 12.10 L420.0 12.10 L421.0 11.63 L422.0 11.55 L423.0 11.54 L424.0 11.64 L425.0 11.47 L426.0 11.57 L427.0 11.28 L428.0 11.16 L429.0 11.23 L430.0 10.81 L431.0 10.89 L432.0 11.16 L433.0 11.44 L434.0 11.41 L435.0 11.41 L436.0 11.57 L437.0 11.67 L438.0 11.69 L439.0 12.10 L440.0 11.61 L441.0 12.10 L442.0 12.10 L443.0 12.10 L444.0 12.10 L445.0 12.10 L446.0 11.55 L447.0 11.39 L448.0 11.34 L449.0 10.99 L450.0 10.89 L451.0 11.11 L452.0 11.07 L453.0 11.26 L454.0 11.32 L455.0 11.33 L456.0 11.59 L457.0 12.10 L458.0 12.10 L459.0 12.10 L460.0 12.10 L461.0 11.29 L462.0 11.31 L463.0 10.73 L464.0 10.60 L465.0 10.09 L466.0 10.09 L467.0 10.35 L468.0 10.11 L469.0 10.21 L470.0 10.38 L471.0 10.31 L472.0 10.58 L473.0 10.67 L474.0 11.00 L475.0 11.07 L476.0 11.57 L477.0 11.54 L478.0 12.10 L479.0 12.10 L480.0 12.10 L481.0 12.10 L482.0 11.64 L483.0 11.63 L484.0 11.62 L485.0 12.10 L486.0 12.10 L487.0 12.10 L488.0 12.10 L489.0 12.10 L490.0 12.10 L491.0 12.10 L492.0 12.10 L493.0 12.10 L494.0 12.10 L495.0 12.10 L496.0 12.10 L497.0 11.69 L498.0 11.42 L499.0 11.57 L500.0 11.51 L501.0 11.50 L502.0 11.56 L503.0 12.10 L504.0 12.10 L505.0 12.10 L506.0 11.35 L507.0 11.33 L508.0 11.26 L509.0 11.01 L510.0 11.05 L511.0 11.41 L512.0 11.56 L513.0 11.41 L514.0 11.49 L515.0 11.47 L516.0 11.50 L517.0 11.43 L518.0 11.45 L519.0 11.59 L520.0 12.10 L521.0 12.10 L522.0 12.10 L523.0 12.10 L524.0 12.10 L525.0 11.46 L526.0 11.55 L527.0 11.21 L528.0 10.89 L529.0 11.13 L530.0 11.45 L531.0 11.12 L532.0 11.17 L533.0 11.27 L534.0 11.36 L535.0 11.21 L536.0 11.42 L537.0 11.31 L538.0 11.28 L539.0 11.40 L540.0 11.62 L541.0 12.10 L542.0 12.10 L543.0 12.10 L544.0 12.10 L545.0 12.10 L546.0 12.10 L547.0 12.10 L548.0 11.63 L549.0 11.31 L550.0 11.00 L551.0 10.65 L552.0 10.24 L553.0 10.96 L554.0 11.24 L555.0 11.48 L556.0 11.31 L557.0 11.25 L558.0 11.21 L559.0 11.08 L560.0 11.13 L561.0 11.37 L562.0 11.37 L563.0 11.60 L564.0 11.51 L565.0 11.56 L566.0 11.46 L567.0 11.60 L568.0 11.41 L569.0 11.42 L570.0 11.49 L571.0 11.64 L572.0 12.10 L573.0 12.10 L574.0 12.10 L575.0 12.10 L576.0 11.47 L577.0 11.35 L578.0 11.33 L579.0 11.40 L580.0 11.12 L581.0 11.05 L582.0 11.04 L583.0 11.20 L584.0 11.33 L585.0 11.61 L586.0 11.63 L587.0 12.10 L588.0 12.10 L589.0 12.10 L590.0 12.10 L591.0 11.56 L592.0 12.10 L593.0 12.10 L594.0 11.61 L595.0 11.19 L596.0 11.02 L597.0 11.41 L598.0 11.62 L599.0 12.10 L600.0 12.10 L601.0 11.69 L602.0 12.10 L603.0 12.10 L604.0 12.10 L605.0 12.10 L606.0 12.10 L607.0 12.10 L608.0 12.10 L609.0 12.10 L610.0 12.10 L611.0 12.10 L612.0 12.10 L613.0 12.10 L614.0 12.10 L615.0 12.10 L616.0 12.10 L617.0 11.52 L618.0 11.36 L619.0 10.77 L620.0 11.07 L621.0 11.25 L622.0 11.58 L623.0 12.10 L624.0 11.58 L625.0 11.62 L626.0 11.58 L627.0 11.62 L628.0 11.65 L629.0 12.10 L630.0 12.10 L631.0 12.10 L632.0 12.10 L633.0 11.63 L634.0 11.50 L635.0 11.44 L636.0 11.54 L637.0 11.51 L638.0 12.10 L639.0 12.10 L640.0 12.10 L641.0 12.10 L642.0 12.10 L643.0 12.10 L644.0 12.10 L645.0 12.10 L646.0 12.10 L647.0 12.10 L648.0 12.10 L649.0 12.10 L650.0 12.10 L651.0 12.10 L652.0 12.10 L653.0 12.10 L654.0 12.10 L655.0 12.10 L656.0 12.10 L657.0 11.25 L658.0 11.15 L659.0 10.97 L660.0 10.92 L661.0 10.91 L662.0 10.66 L663.0 10.81 L664.0 11.04 L665.0 10.93 L666.0 11.08 L667.0 11.21 L668.0 11.35 L669.0 11.48 L670.0 12.10 L671.0 12.10 L672.0 12.10 L673.0 12.10 L674.0 12.10 L675.0 12.10 L676.0 12.10 L677.0 12.10 L678.0 11.67 L679.0 11.42 L680.0 11.16 L681.0 11.12 L682.0 11.00 L683.0 11.13 L684.0 10.89 L685.0 11.08 L686.0 10.82 L687.0 10.85 L688.0 11.21 L689.0 11.29 L690.0 11.62 L691.0 12.10 L692.0 12.10 L693.0 12.10 L694.0 12.10 L695.0 12.10 L696.0 12.10 L697.0 12.10 L698.0 12.10 L699.0 12.10 L700.0 12.10 L701.0 12.10 L702.0 12.10 L703.0 11.64 L704.0 11.63 L705.0 11.33 L706.0 11.08 L707.0 10.82 L708.0 11.09 L709.0 11.00 L710.0 11.09 L711.0 11.15 L712.0 11.13 L713.0 11.54 L714.0 11.70 L715.0 11.70 L716.0 12.10 L717.0 12.10 L718.0 12.10 L719.0 12.10 L720.0 12.10 L721.0 12.10 L722.0 12.10 L723.0 12.10 L724.0 12.10 L725.0 11.34 L726.0 11.34 L727.0 11.03 L728.0 11.26 L729.0 10.89 L730.0 10.85 L731.0 10.85 L732.0 10.85 L733.0 11.22 L734.0 11.25 L735.0 11.45 L736.0 11.63 L737.0 12.10 L738.0 12.10 L739.0 12.10 L740.0 12.10 L741.0 12.10 L742.0 12.10 L743.0 12.10 L744.0 12.10 L745.0 11.68 L746.0 11.62 L747.0 12.10 L748.0 12.10 L749.0 12.10 L750.0 12.10 L751.0 12.10 L752.0 12.10 L753.0 12.10 L754.0 12.10 L755.0 12.10 L756.0 12.10 L757.0 11.66 L758.0 11.64 L759.0 11.59 L760.0 11.68 L761.0 12.10 L762.0 12.10 L763.0 12.10 L764.0 12.10 L765.0 12.10 L766.0 12.10 L767.0 12.10 L768.0 12.10 L769.0 12.10 L770.0 12.10 L771.0 12.10 L772.0 12.10 L773.0 12.10 L774.0 12.10 L775.0 11.70 L776.0 12.10 L777.0 12.10 L778.0 11.58 L779.0 11.56 L780.0 11.46 L781.0 11.37 L782.0 11.21 L783.0 11.59 L784.0 11.58 L785.0 12.10 L786.0 12.10 L787.0 12.10 L788.0 12.10 L789.0 12.10 L790.0 12.10 L791.0 12.10 L792.0 12.10 L793.0 12.10 L794.0 11.61 L795.0 11.44 L796.0 11.58 L797.0 11.37 L798.0 11.33 L799.0 11.41 L800.0 11.58 L801.0 12.10 L802.0 12.10 L803.0 12.10 L804.0 12.10 L805.0 12.10 L806.0 12.10 L807.0 12.10 L808.0 12.10 L809.0 12.10 L810.0 11.70 L811.0 11.55 L812.0 10.96 L813.0 11.27 L814.0 12.10 L815.0 12.10 L816.0 12.10 L817.0 12.10 L818.0 11.62 L819.0 11.63 L820.0 11.60 L821.0 12.10 L822.0 11.59 L823.0 12.10 L824.0 11.68 L825.0 11.62 L826.0 11.64 L827.0 12.10 L828.0 12.10 L829.0 12.10 L830.0 12.10 L831.0 12.10 L832.0 12.10 L833.0 12.10 L834.0 12.10 L835.0 11.67 L836.0 11.54 L837.0 11.47 L838.0 11.49 L839.0 11.45 L840.0 11.49 L841.0 11.53 L842.0 12.10 L843.0 12.10 L844.0 12.10 L845.0 12.10 L846.0 12.10 L847.0 12.10 L848.0 12.10 L849.0 12.10 L850.0 12.10 L851.0 12.10 L852.0 12.10 L853.0 12.10 L854.0 12.10 L855.0 12.10 L856.0 12.10 L857.0 12.10 L858.0 12.10 L859.0 12.10 L860.0 12.10 L861.0 12.10 L862.0 12.10 L863.0 12.10 L864.0 12.10 L865.0 12.10 L866.0 12.10 L867.0 12.10 L868.0 12.10 L869.0 12.10 L870.0 12.10 L871.0 12.10 L872.0 12.10 L873.0 12.10 L874.0 12.10 L875.0 12.10 L876.0 12.10 L877.0 12.10 L878.0 12.10 L879.0 12.10 L880.0 12.10 L881.0 12.10 L882.0 12.10 L883.0 12.10 L884.0 12.10 L885.0 12.10 L886.0 12.10 L887.0 12.10 L888.0 12.10 L889.0 12.10 L890.0 11.61 L891.0 11.54 L892.0 11.25 L893.0 11.23 L894.0 11.05 L895.0 11.18 L896.0 11.06 L897.0 10.93 L898.0 10.90 L899.0 10.76 L900.0 10.85 L901.0 10.63 L902.0 10.63 L903.0 10.70 L904.0 10.92 L905.0 11.16 L906.0 11.36 L907.0 11.66 L908.0 12.10 L909.0 12.10 L910.0 11.33 L911.0 11.17 L912.0 10.76 L913.0 10.44 L914.0 9.93 L915.0 10.71 L916.0 10.97 L917.0 11.41 L918.0 10.97 L919.0 10.55 L920.0 10.07 L921.0 10.27 L922.0 9.98 L923.0 9.68 L924.0 10.08 L925.0 9.88 L926.0 10.07 L927.0 10.47 L928.0 10.67 L929.0 11.23 L930.0 11.14 L931.0 10.66 L932.0 10.77 L933.0 10.93 L934.0 10.38 L935.0 10.51 L936.0 10.63 L937.0 10.83 L938.0 10.85 L939.0 10.99 L940.0 11.04 L941.0 11.12 L942.0 11.40 L943.0 11.20 L944.0 11.59 L945.0 11.61 L946.0 12.10 L947.0 12.10 L948.0 12.10 L949.0 12.10 L949.0 12.10 L948.0 12.10 L947.0 12.10 L946.0 12.10 L945.0 12.86 L944.0 12.91 L943.0 13.12 L942.0 13.09 L941.0 13.08 L940.0 13.35 L939.0 13.40 L938.0 13.55 L937.0 13.42 L936.0 13.71 L935.0 13.61 L934.0 13.83 L933.0 13.64 L932.0 13.42 L931.0 13.53 L930.0 13.39 L929.0 13.62 L928.0 13.89 L927.0 14.01 L926.0 14.05 L925.0 14.01 L924.0 13.64 L923.0 13.89 L922.0 13.63 L921.0 13.59 L920.0 13.55 L919.0 13.44 L918.0 13.31 L917.0 13.09 L916.0 12.99 L915.0 12.92 L914.0 12.74 L913.0 12.79 L912.0 12.86 L911.0 12.85 L910.0 12.74 L909.0 12.10 L908.0 12.10 L907.0 12.80 L906.0 13.05 L905.0 13.12 L904.0 13.29 L903.0 13.20 L902.0 13.45 L901.0 13.38 L900.0 13.22 L899.0 13.16 L898.0 13.09 L897.0 13.26 L896.0 13.14 L895.0 13.08 L894.0 13.04 L893.0 12.88 L892.0 12.85 L891.0 12.86 L890.0 12.94 L889.0 12.10 L888.0 12.10 L887.0 12.10 L886.0 12.10 L885.0 12.10 L884.0 12.10 L883.0 12.10 L882.0 12.10 L881.0 12.10 L880.0 12.10 L879.0 12.10 L878.0 12.10 L877.0 12.10 L876.0 12.10 L875.0 12.10 L874.0 12.10 L873.0 12.10 L872.0 12.10 L871.0 12.10 L870.0 12.10 L869.0 12.10 L868.0 12.10 L867.0 12.10 L866.0 12.10 L865.0 12.10 L864.0 12.10 L863.0 12.10 L862.0 12.10 L861.0 12.10 L860.0 12.10 L859.0 12.10 L858.0 12.10 L857.0 12.10 L856.0 12.10 L855.0 12.10 L854.0 12.10 L853.0 12.10 L852.0 12.10 L851.0 12.10 L850.0 12.10 L849.0 12.10 L848.0 12.10 L847.0 12.10 L846.0 12.10 L845.0 12.10 L844.0 12.10 L843.0 12.10 L842.0 12.10 L841.0 12.89 L840.0 12.84 L839.0 12.79 L838.0 12.96 L837.0 12.99 L836.0 12.98 L835.0 12.82 L834.0 12.10 L833.0 12.10 L832.0 12.10 L831.0 12.10 L830.0 12.10 L829.0 12.10 L828.0 12.10 L827.0 12.10 L826.0 12.89 L825.0 12.77 L824.0 12.79 L823.0 12.10 L822.0 12.84 L821.0 12.10 L820.0 12.62 L819.0 12.78 L818.0 12.75 L817.0 12.10 L816.0 12.10 L815.0 12.10 L814.0 12.10 L813.0 13.11 L812.0 13.43 L811.0 12.94 L810.0 12.80 L809.0 12.10 L808.0 12.10 L807.0 12.10 L806.0 12.10 L805.0 12.10 L804.0 12.10 L803.0 12.10 L802.0 12.10 L801.0 12.10 L800.0 12.91 L799.0 13.05 L798.0 13.09 L797.0 13.05 L796.0 13.03 L795.0 13.04 L794.0 12.83 L793.0 12.10 L792.0 12.10 L791.0 12.10 L790.0 12.10 L789.0 12.10 L788.0 12.10 L787.0 12.10 L786.0 12.10 L785.0 12.10 L784.0 12.68 L783.0 12.75 L782.0 12.72 L781.0 12.68 L780.0 12.63 L779.0 12.56 L778.0 12.57 L777.0 12.10 L776.0 12.10 L775.0 12.58 L774.0 12.10 L773.0 12.10 L772.0 12.10 L771.0 12.10 L770.0 12.10 L769.0 12.10 L768.0 12.10 L767.0 12.10 L766.0 12.10 L765.0 12.10 L764.0 12.10 L763.0 12.10 L762.0 12.10 L761.0 12.10 L760.0 12.81 L759.0 12.80 L758.0 12.82 L757.0 12.73 L756.0 12.10 L755.0 12.10 L754.0 12.10 L753.0 12.10 L752.0 12.10 L751.0 12.10 L750.0 12.10 L749.0 12.10 L748.0 12.10 L747.0 12.10 L746.0 12.72 L745.0 12.71 L744.0 12.10 L743.0 12.10 L742.0 12.10 L741.0 12.10 L740.0 12.10 L739.0 12.10 L738.0 12.10 L737.0 12.10 L736.0 12.86 L735.0 12.68 L734.0 13.04 L733.0 13.17 L732.0 13.26 L731.0 13.21 L730.0 13.17 L729.0 13.05 L728.0 13.05 L727.0 13.10 L726.0 12.99 L725.0 12.72 L724.0 12.10 L723.0 12.10 L722.0 12.10 L721.0 12.10 L720.0 12.10 L719.0 12.10 L718.0 12.10 L717.0 12.10 L716.0 12.10 L715.0 12.65 L714.0 12.67 L713.0 12.81 L712.0 12.81 L711.0 12.86 L710.0 12.94 L709.0 12.95 L708.0 12.94 L707.0 12.95 L706.0 12.97 L705.0 12.74 L704.0 12.86 L703.0 12.83 L702.0 12.10 L701.0 12.10 L700.0 12.10 L699.0 12.10 L698.0 12.10 L697.0 12.10 L696.0 12.10 L695.0 12.10 L694.0 12.10 L693.0 12.10 L692.0 12.10 L691.0 12.10 L690.0 12.59 L689.0 12.74 L688.0 12.80 L687.0 12.92 L686.0 12.91 L685.0 12.99 L684.0 12.98 L683.0 12.96 L682.0 12.95 L681.0 12.83 L680.0 12.92 L679.0 12.87 L678.0 12.80 L677.0 12.10 L676.0 12.10 L675.0 12.10 L674.0 12.10 L673.0 12.10 L672.0 12.10 L671.0 12.10 L670.0 12.10 L669.0 12.86 L668.0 12.86 L667.0 13.04 L666.0 13.03 L665.0 13.32 L664.0 13.51 L663.0 13.38 L662.0 13.89 L661.0 13.60 L660.0 13.52 L659.0 13.54 L658.0 13.24 L657.0 13.09 L656.0 12.10 L655.0 12.10 L654.0 12.10 L653.0 12.10 L652.0 12.10 L651.0 12.10 L650.0 12.10 L649.0 12.10 L648.0 12.10 L647.0 12.10 L646.0 12.10 L645.0 12.10 L644.0 12.10 L643.0 12.10 L642.0 12.10 L641.0 12.10 L640.0 12.10 L639.0 12.10 L638.0 12.10 L637.0 12.85 L636.0 13.00 L635.0 12.98 L634.0 12.89 L633.0 12.95 L632.0 12.10 L631.0 12.10 L630.0 12.10 L629.0 12.10 L628.0 12.91 L627.0 12.75 L626.0 12.77 L625.0 12.79 L624.0 12.79 L623.0 12.10 L622.0 13.02 L621.0 13.23 L620.0 13.25 L619.0 13.55 L618.0 13.08 L617.0 13.00 L616.0 12.10 L615.0 12.10 L614.0 12.10 L613.0 12.10 L612.0 12.10 L611.0 12.10 L610.0 12.10 L609.0 12.10 L608.0 12.10 L607.0 12.10 L606.0 12.10 L605.0 12.10 L604.0 12.10 L603.0 12.10 L602.0 12.10 L601.0 12.72 L600.0 12.10 L599.0 12.10 L598.0 12.75 L597.0 12.80 L596.0 12.83 L595.0 12.79 L594.0 12.69 L593.0 12.10 L592.0 12.10 L591.0 13.32 L590.0 12.10 L589.0 12.10 L588.0 12.10 L587.0 12.10 L586.0 12.56 L585.0 12.58 L584.0 12.68 L583.0 12.71 L582.0 12.83 L581.0 12.73 L580.0 12.77 L579.0 12.77 L578.0 12.74 L577.0 12.74 L576.0 12.75 L575.0 12.10 L574.0 12.10 L573.0 12.10 L572.0 12.10 L571.0 12.87 L570.0 12.87 L569.0 12.90 L568.0 12.91 L567.0 12.96 L566.0 12.93 L565.0 12.93 L564.0 12.92 L563.0 12.93 L562.0 12.95 L561.0 12.95 L560.0 12.89 L559.0 12.98 L558.0 13.01 L557.0 13.04 L556.0 13.07 L555.0 13.21 L554.0 13.12 L553.0 13.11 L552.0 12.95 L551.0 12.91 L550.0 13.04 L549.0 13.10 L548.0 13.15 L547.0 12.10 L546.0 12.10 L545.0 12.10 L544.0 12.10 L543.0 12.10 L542.0 12.10 L541.0 12.10 L540.0 12.68 L539.0 12.74 L538.0 12.92 L537.0 12.88 L536.0 12.94 L535.0 13.00 L534.0 12.97 L533.0 12.94 L532.0 13.00 L531.0 12.98 L530.0 13.03 L529.0 13.08 L528.0 13.09 L527.0 12.83 L526.0 12.82 L525.0 12.82 L524.0 12.10 L523.0 12.10 L522.0 12.10 L521.0 12.10 L520.0 12.10 L519.0 12.73 L518.0 12.55 L517.0 12.68 L516.0 12.81 L515.0 12.86 L514.0 12.86 L513.0 12.88 L512.0 12.74 L511.0 12.84 L510.0 12.88 L509.0 12.92 L508.0 12.81 L507.0 12.86 L506.0 12.85 L505.0 12.10 L504.0 12.10 L503.0 12.10 L502.0 12.85 L501.0 12.84 L500.0 12.77 L499.0 12.82 L498.0 12.77 L497.0 12.83 L496.0 12.10 L495.0 12.10 L494.0 12.10 L493.0 12.10 L492.0 12.10 L491.0 12.10 L490.0 12.10 L489.0 12.10 L488.0 12.10 L487.0 12.10 L486.0 12.10 L485.0 12.10 L484.0 12.74 L483.0 12.86 L482.0 12.83 L481.0 12.10 L480.0 12.10 L479.0 12.10 L478.0 12.10 L477.0 12.78 L476.0 12.82 L475.0 13.11 L474.0 13.08 L473.0 13.29 L472.0 13.32 L471.0 13.53 L470.0 13.12 L469.0 13.59 L468.0 13.52 L467.0 13.62 L466.0 13.15 L465.0 13.65 L464.0 13.40 L463.0 13.71 L462.0 13.07 L461.0 13.08 L460.0 12.10 L459.0 12.10 L458.0 12.10 L457.0 12.10 L456.0 12.87 L455.0 12.98 L454.0 12.90 L453.0 12.98 L452.0 12.98 L451.0 12.82 L450.0 12.92 L449.0 12.91 L448.0 12.86 L447.0 12.74 L446.0 12.82 L445.0 12.10 L444.0 12.10 L443.0 12.10 L442.0 12.10 L441.0 12.10 L440.0 12.78 L439.0 12.10 L438.0 12.78 L437.0 12.79 L436.0 12.86 L435.0 12.82 L434.0 12.86 L433.0 12.81 L432.0 12.92 L431.0 12.99 L430.0 12.98 L429.0 12.92 L428.0 12.98 L427.0 12.86 L426.0 12.86 L425.0 12.78 L424.0 12.83 L423.0 12.80 L422.0 12.70 L421.0 12.62 L420.0 12.10 L419.0 12.10 L418.0 12.10 L417.0 12.10 L416.0 12.10 L415.0 12.10 L414.0 12.10 L413.0 12.10 L412.0 12.10 L411.0 12.10 L410.0 12.10 L409.0 12.10 L408.0 12.10 L407.0 12.10 L406.0 12.10 L405.0 12.10 L404.0 12.10 L403.0 12.10 L402.0 12.10 L401.0 12.10 L400.0 12.10 L399.0 12.10 L398.0 12.10 L397.0 12.10 L396.0 12.10 L395.0 12.10 L394.0 12.10 L393.0 12.10 L392.0 12.10 L391.0 12.10 L390.0 12.10 L389.0 12.10 L388.0 12.10 L387.0 12.10 L386.0 12.10 L385.0 12.10 L384.0 12.10 L383.0 12.10 L382.0 12.10 L381.0 12.10 L380.0 12.10 L379.0 12.10 L378.0 12.10 L377.0 12.10 L376.0 12.10 L375.0 12.10 L374.0 12.10 L373.0 12.10 L372.0 12.10 L371.0 12.10 L370.0 12.10 L369.0 12.10 L368.0 12.74 L367.0 12.70 L366.0 12.86 L365.0 12.87 L364.0 12.95 L363.0 13.05 L362.0 12.75 L361.0 12.77 L360.0 12.75 L359.0 12.76 L358.0 12.10 L357.0 12.10 L356.0 12.10 L355.0 12.10 L354.0 12.10 L353.0 12.10 L352.0 12.10 L351.0 12.10 L350.0 12.10 L349.0 12.10 L348.0 12.79 L347.0 12.80 L346.0 12.80 L345.0 12.87 L344.0 12.86 L343.0 12.91 L342.0 12.94 L341.0 12.80 L340.0 12.10 L339.0 12.10 L338.0 12.10 L337.0 12.10 L336.0 12.10 L335.0 12.10 L334.0 12.10 L333.0 12.74 L332.0 12.76 L331.0 12.92 L330.0 13.09 L329.0 12.66 L328.0 12.58 L327.0 12.10 L326.0 12.10 L325.0 12.10 L324.0 12.10 L323.0 12.10 L322.0 12.10 L321.0 12.10 L320.0 12.10 L319.0 12.55 L318.0 12.61 L317.0 12.59 L316.0 12.68 L315.0 12.55 L314.0 12.74 L313.0 12.56 L312.0 12.69 L311.0 12.81 L310.0 12.85 L309.0 12.86 L308.0 12.85 L307.0 12.88 L306.0 12.92 L305.0 12.84 L304.0 12.79 L303.0 12.89 L302.0 12.85 L301.0 12.87 L300.0 12.75 L299.0 12.10 L298.0 12.10 L297.0 12.84 L296.0 12.86 L295.0 12.99 L294.0 13.04 L293.0 12.97 L292.0 13.44 L291.0 13.61 L290.0 13.38 L289.0 13.89 L288.0 13.87 L287.0 13.77 L286.0 13.65 L285.0 13.51 L284.0 13.27 L283.0 13.16 L282.0 12.96 L281.0 12.10 L280.0 12.10 L279.0 12.10 L278.0 12.10 L277.0 12.10 L276.0 12.10 L275.0 12.10 L274.0 12.10 L273.0 12.74 L272.0 12.64 L271.0 12.75 L270.0 12.75 L269.0 12.83 L268.0 12.87 L267.0 12.87 L266.0 12.83 L265.0 12.78 L264.0 12.75 L263.0 12.80 L262.0 12.80 L261.0 12.74 L260.0 12.72 L259.0 12.74 L258.0 12.69 L257.0 12.59 L256.0 12.67 L255.0 12.72 L254.0 12.64 L253.0 12.10 L252.0 12.10 L251.0 12.10 L250.0 12.10 L249.0 12.10 L248.0 12.61 L247.0 12.62 L246.0 12.84 L245.0 12.84 L244.0 12.77 L243.0 12.80 L242.0 12.80 L241.0 12.78 L240.0 12.71 L239.0 12.66 L238.0 12.66 L237.0 12.69 L236.0 12.61 L235.0 12.62 L234.0 12.60 L233.0 12.51 L232.0 12.10 L231.0 12.10 L230.0 12.10 L229.0 12.10 L228.0 12.10 L227.0 12.10 L226.0 12.10 L225.0 12.10 L224.0 12.10 L223.0 12.10 L222.0 12.10 L221.0 12.10 L220.0 12.10 L219.0 12.10 L218.0 12.10 L217.0 12.10 L216.0 12.10 L215.0 12.10 L214.0 12.10 L213.0 12.10 L212.0 12.10 L211.0 12.70 L210.0 12.68 L209.0 12.68 L208.0 12.70 L207.0 12.73 L206.0 12.72 L205.0 12.69 L204.0 12.75 L203.0 12.10 L202.0 12.86 L201.0 13.11 L200.0 13.31 L199.0 13.77 L198.0 14.40 L197.0 14.60 L196.0 14.99 L195.0 15.05 L194.0 15.53 L193.0 14.27 L192.0 15.16 L191.0 14.57 L190.0 14.70 L189.0 13.95 L188.0 14.18 L187.0 13.71 L186.0 12.98 L185.0 13.11 L184.0 12.83 L183.0 12.10 L182.0 12.52 L181.0 12.74 L180.0 12.80 L179.0 12.92 L178.0 12.88 L177.0 12.85 L176.0 12.98 L175.0 12.96 L174.0 13.05 L173.0 12.97 L172.0 13.08 L171.0 13.06 L170.0 13.03 L169.0 13.00 L168.0 13.17 L167.0 13.23 L166.0 13.23 L165.0 13.21 L164.0 13.11 L163.0 12.99 L162.0 13.17 L161.0 13.08 L160.0 13.20 L159.0 12.80 L158.0 12.70 L157.0 12.10 L156.0 12.59 L155.0 12.74 L154.0 12.90 L153.0 13.11 L152.0 13.33 L151.0 13.37 L150.0 13.71 L149.0 13.49 L148.0 13.71 L147.0 13.46 L146.0 13.59 L145.0 13.29 L144.0 13.41 L143.0 13.27 L142.0 13.23 L141.0 13.07 L140.0 12.96 L139.0 12.92 L138.0 12.10 L137.0 12.10 L136.0 12.94 L135.0 13.35 L134.0 13.46 L133.0 13.84 L132.0 13.77 L131.0 13.46 L130.0 13.59 L129.0 13.79 L128.0 13.89 L127.0 14.07 L126.0 13.76 L125.0 12.95 L124.0 12.10 L123.0 12.10 L122.0 12.64 L121.0 12.83 L120.0 13.01 L119.0 13.61 L118.0 14.19 L117.0 16.67 L116.0 14.89 L115.0 15.16 L114.0 13.78 L113.0 13.74 L112.0 13.14 L111.0 13.10 L110.0 12.83 L109.0 12.81 L108.0 12.10 L107.0 12.10 L106.0 12.10 L105.0 12.10 L104.0 12.10 L103.0 12.10 L102.0 12.10 L101.0 12.10 L100.0 12.10 L99.0 12.10 L98.0 12.10 L97.0 12.10 L96.0 12.10 L95.0 12.10 L94.0 12.10 L93.0 12.10 L92.0 12.10 L91.0 12.10 L90.0 12.10 L89.0 12.10 L88.0 12.10 L87.0 12.10 L86.0 12.10 L85.0 12.10 L84.0 12.10 L83.0 12.10 L82.0 12.10 L81.0 12.10 L80.0 12.10 L79.0 12.10 L78.0 12.10 L77.0 12.10 L76.0 12.10 L75.0 12.10 L74.0 12.10 L73.0 12.10 L72.0 12.10 L71.0 12.10 L70.0 12.10 L69.0 12.10 L68.0 12.10 L67.0 12.10 L66.0 12.10 L65.0 12.10 L64.0 12.10 L63.0 12.10 L62.0 12.10 L61.0 12.10 L60.0 12.10 L59.0 12.10 L58.0 12.10 L57.0 12.10 L56.0 12.10 L55.0 12.10 L54.0 12.10 L53.0 12.10 L52.0 12.10 L51.0 12.10 L50.0 12.10 L49.0 12.10 L48.0 12.10 L47.0 12.10 L46.0 12.10 L45.0 12.10 L44.0 12.10 L43.0 12.10 L42.0 12.10 L41.0 12.10 L40.0 12.10 L39.0 12.10 L38.0 12.10 L37.0 12.10 L36.0 12.10 L35.0 12.10 L34.0 12.10 L33.0 12.10 L32.0 12.10 L31.0 12.10 L30.0 12.10 L29.0 12.10 L28.0 12.10 L27.0 12.10 L26.0 12.10 L25.0 12.10 L24.0 12.10 L23.0 12.10 L22.0 12.10 L21.0 12.10 L20.0 12.10 L19.0 12.10 L18.0 12.10 L17.0 12.10 L16.0 12.10 L15.0 12.10 L14.0 12.10 L13.0 12.10 L12.0 12.10 L11.0 12.10 L10.0 12.10 L9.0 12.10 L8.0 12.10 L7.0 12.10 L6.0 12.10 L5.0 12.10 L4.0 12.10 L3.0 12.10 L2.0 12.10 L1.0 12.10 L0.0 12.10Z" fill="#9adfba"/></svg>
<svg style="left:1393px;top:88px;" width="14" height="13" viewBox="0 0 14 13"><path d="M7 0v3M7 10v3M0 6.500h3M11 6.500h3" stroke="#4a4a4a" stroke-width="1.200"/><circle cx="6.500" cy="6" r="3" fill="none" stroke="#505050" stroke-width="1.300"/><path d="M8.500 8.500l3 3" stroke="#505050" stroke-width="1.600"/></svg>
<svg style="left:1416px;top:89px;" width="12" height="10" viewBox="0 0 12 10"><rect width="12" height="10" rx="1" fill="#a0a0a0"/><path d="M0 3.500h12M0 6.500h12" stroke="#333" stroke-width="1"/></svg>
<div style="left:436px;top:119px;width:950px;height:20px;background:#1b1b1b;"></div>
<span style="left:439px;top:120.3px;font-size:9.5px;line-height:13px;color:#b0b0b0;font-weight:bold;letter-spacing:-0.511px;">hms</span>
<span style="left:466.9px;top:119.8px;font-size:9.7px;line-height:14px;color:#bcbcbc;-webkit-text-stroke:.25px #bcbcbc;">0.5</span>
<span style="left:504.6px;top:119.8px;font-size:9.7px;line-height:14px;color:#bcbcbc;-webkit-text-stroke:.25px #bcbcbc;">1.0</span>
<span style="left:542.3px;top:119.8px;font-size:9.7px;line-height:14px;color:#bcbcbc;-webkit-text-stroke:.25px #bcbcbc;">1.5</span>
<span style="left:580.0px;top:119.8px;font-size:9.7px;line-height:14px;color:#bcbcbc;-webkit-text-stroke:.25px #bcbcbc;">2.0</span>
<span style="left:617.6px;top:119.8px;font-size:9.7px;line-height:14px;color:#bcbcbc;-webkit-text-stroke:.25px #bcbcbc;">2.5</span>
<span style="left:655.3px;top:119.8px;font-size:9.7px;line-height:14px;color:#bcbcbc;-webkit-text-stroke:.25px #bcbcbc;">3.0</span>
<span style="left:693.0px;top:119.8px;font-size:9.7px;line-height:14px;color:#bcbcbc;-webkit-text-stroke:.25px #bcbcbc;">3.5</span>
<span style="left:730.7px;top:119.8px;font-size:9.7px;line-height:14px;color:#bcbcbc;-webkit-text-stroke:.25px #bcbcbc;">4.0</span>
<span style="left:768.4px;top:119.8px;font-size:9.7px;line-height:14px;color:#bcbcbc;-webkit-text-stroke:.25px #bcbcbc;">4.5</span>
<span style="left:806.1px;top:119.8px;font-size:9.7px;line-height:14px;color:#bcbcbc;-webkit-text-stroke:.25px #bcbcbc;">5.0</span>
<span style="left:843.8px;top:119.8px;font-size:9.7px;line-height:14px;color:#bcbcbc;-webkit-text-stroke:.25px #bcbcbc;">5.5</span>
<span style="left:881.5px;top:119.8px;font-size:9.7px;line-height:14px;color:#bcbcbc;-webkit-text-stroke:.25px #bcbcbc;">6.0</span>
<span style="left:919.2px;top:119.8px;font-size:9.7px;line-height:14px;color:#bcbcbc;-webkit-text-stroke:.25px #bcbcbc;">6.5</span>
<span style="left:956.9px;top:119.8px;font-size:9.7px;line-height:14px;color:#bcbcbc;-webkit-text-stroke:.25px #bcbcbc;">7.0</span>
<span style="left:994.5px;top:119.8px;font-size:9.7px;line-height:14px;color:#bcbcbc;-webkit-text-stroke:.25px #bcbcbc;">7.5</span>
<span style="left:1032.2px;top:119.8px;font-size:9.7px;line-height:14px;color:#bcbcbc;-webkit-text-stroke:.25px #bcbcbc;">8.0</span>
<span style="left:1069.9px;top:119.8px;font-size:9.7px;line-height:14px;color:#bcbcbc;-webkit-text-stroke:.25px #bcbcbc;">8.5</span>
<span style="left:1107.6px;top:119.8px;font-size:9.7px;line-height:14px;color:#bcbcbc;-webkit-text-stroke:.25px #bcbcbc;">9.0</span>
<span style="left:1145.3px;top:119.8px;font-size:9.7px;line-height:14px;color:#bcbcbc;-webkit-text-stroke:.25px #bcbcbc;">9.5</span>
<span style="left:1180.4px;top:119.8px;font-size:9.7px;line-height:14px;color:#bcbcbc;-webkit-text-stroke:.25px #bcbcbc;">10.0</span>
<span style="left:1218.0px;top:119.8px;font-size:9.7px;line-height:14px;color:#bcbcbc;-webkit-text-stroke:.25px #bcbcbc;">10.5</span>
<span style="left:1256.1px;top:119.8px;font-size:9.7px;line-height:14px;color:#bcbcbc;-webkit-text-stroke:.25px #bcbcbc;">11.0</span>
<span style="left:1293.8px;top:119.8px;font-size:9.7px;line-height:14px;color:#bcbcbc;-webkit-text-stroke:.25px #bcbcbc;">11.5</span>
<span style="left:1331.1px;top:119.8px;font-size:9.7px;line-height:14px;color:#bcbcbc;-webkit-text-stroke:.25px #bcbcbc;">12.0</span>
<div style="left:1367.3px;top:119.300px;width:16.2px;height:14px;overflow:hidden"><span style="left:0;top:0.5px;-webkit-text-stroke:.25px #bcbcbc;font-size:9.500px;line-height:13px;color:#b4b4b4">12.5</span></div>
<svg style="left:436px;top:131px;" width="950" height="8" viewBox="0 0 950 8"><path d="M0.3 1.500v6.500" stroke="#b0b0b0" stroke-width="1.100"/><path d="M7.8 4.300v3.700" stroke="#9a9a9a" stroke-width="1"/><path d="M15.4 4.300v3.700" stroke="#9a9a9a" stroke-width="1"/><path d="M22.9 4.300v3.700" stroke="#9a9a9a" stroke-width="1"/><path d="M30.5 4.300v3.700" stroke="#9a9a9a" stroke-width="1"/><path d="M38.0 1.500v6.500" stroke="#b0b0b0" stroke-width="1.100"/><path d="M45.5 4.300v3.700" stroke="#9a9a9a" stroke-width="1"/><path d="M53.1 4.300v3.700" stroke="#9a9a9a" stroke-width="1"/><path d="M60.6 4.300v3.700" stroke="#9a9a9a" stroke-width="1"/><path d="M68.1 4.300v3.700" stroke="#9a9a9a" stroke-width="1"/><path d="M75.7 1.500v6.500" stroke="#b0b0b0" stroke-width="1.100"/><path d="M83.2 4.300v3.700" stroke="#9a9a9a" stroke-width="1"/><path d="M90.8 4.300v3.700" stroke="#9a9a9a" stroke-width="1"/><path d="M98.3 4.300v3.700" stroke="#9a9a9a" stroke-width="1"/><path d="M105.8 4.300v3.700" stroke="#9a9a9a" stroke-width="1"/><path d="M113.4 1.500v6.500" stroke="#b0b0b0" stroke-width="1.100"/><path d="M120.9 4.300v3.700" stroke="#9a9a9a" stroke-width="1"/><path d="M128.4 4.300v3.700" stroke="#9a9a9a" stroke-width="1"/><path d="M136.0 4.300v3.700" stroke="#9a9a9a" stroke-width="1"/><path d="M143.5 4.300v3.700" stroke="#9a9a9a" stroke-width="1"/><path d="M151.1 1.500v6.500" stroke="#b0b0b0" stroke-width="1.100"/><path d="M158.6 4.300v3.700" stroke="#9a9a9a" stroke-width="1"/><path d="M166.1 4.300v3.700" stroke="#9a9a9a" stroke-width="1"/><path d="M173.7 4.300v3.700" stroke="#9a9a9a" stroke-width="1"/><path d="M181.2 4.300v3.700" stroke="#9a9a9a" stroke-width="1"/><path d="M188.8 1.500v6.500" stroke="#b0b0b0" stroke-width="1.100"/><path d="M196.3 4.300v3.700" stroke="#9a9a9a" stroke-width="1"/><path d="M203.8 4.300v3.700" stroke="#9a9a9a" stroke-width="1"/><path d="M211.4 4.300v3.700" stroke="#9a9a9a" stroke-width="1"/><path d="M218.9 4.300v3.700" stroke="#9a9a9a" stroke-width="1"/><path d="M226.4 1.500v6.500" stroke="#b0b0b0" stroke-width="1.100"/><path d="M234.0 4.300v3.700" stroke="#9a9a9a" stroke-width="1"/><path d="M241.5 4.300v3.700" stroke="#9a9a9a" stroke-width="1"/><path d="M249.1 4.300v3.700" stroke="#9a9a9a" stroke-width="1"/><path d="M256.6 4.300v3.700" stroke="#9a9a9a" stroke-width="1"/><path d="M264.1 1.500v6.500" stroke="#b0b0b0" stroke-width="1.100"/><path d="M271.7 4.300v3.700" stroke="#9a9a9a" stroke-width="1"/><path d="M279.2 4.300v3.700" stroke="#9a9a9a" stroke-width="1"/><path d="M286.7 4.300v3.700" stroke="#9a9a9a" stroke-width="1"/><path d="M294.3 4.300v3.700" stroke="#9a9a9a" stroke-width="1"/><path d="M301.8 1.500v6.500" stroke="#b0b0b0" stroke-width="1.100"/><path d="M309.4 4.300v3.700" stroke="#9a9a9a" stroke-width="1"/><path d="M316.9 4.300v3.700" stroke="#9a9a9a" stroke-width="1"/><path d="M324.4 4.300v3.700" stroke="#9a9a9a" stroke-width="1"/><path d="M332.0 4.300v3.700" stroke="#9a9a9a" stroke-width="1"/><path d="M339.5 1.500v6.500" stroke="#b0b0b0" stroke-width="1.100"/><path d="M347.0 4.300v3.700" stroke="#9a9a9a" stroke-width="1"/><path d="M354.6 4.300v3.700" stroke="#9a9a9a" stroke-width="1"/><path d="M362.1 4.300v3.700" stroke="#9a9a9a" stroke-width="1"/><path d="M369.7 4.300v3.700" stroke="#9a9a9a" stroke-width="1"/><path d="M377.2 1.500v6.500" stroke="#b0b0b0" stroke-width="1.100"/><path d="M384.7 4.300v3.700" stroke="#9a9a9a" stroke-width="1"/><path d="M392.3 4.300v3.700" stroke="#9a9a9a" stroke-width="1"/><path d="M399.8 4.300v3.700" stroke="#9a9a9a" stroke-width="1"/><path d="M407.4 4.300v3.700" stroke="#9a9a9a" stroke-width="1"/><path d="M414.9 1.500v6.500" stroke="#b0b0b0" stroke-width="1.100"/><path d="M422.4 4.300v3.700" stroke="#9a9a9a" stroke-width="1"/><path d="M430.0 4.300v3.700" stroke="#9a9a9a" stroke-width="1"/><path d="M437.5 4.300v3.700" stroke="#9a9a9a" stroke-width="1"/><path d="M445.0 4.300v3.700" stroke="#9a9a9a" stroke-width="1"/><path d="M452.6 1.500v6.500" stroke="#b0b0b0" stroke-width="1.100"/><path d="M460.1 4.300v3.700" stroke="#9a9a9a" stroke-width="1"/><path d="M467.7 4.300v3.700" stroke="#9a9a9a" stroke-width="1"/><path d="M475.2 4.300v3.700" stroke="#9a9a9a" stroke-width="1"/><path d="M482.7 4.300v3.700" stroke="#9a9a9a" stroke-width="1"/><path d="M490.3 1.500v6.500" stroke="#b0b0b0" stroke-width="1.100"/><path d="M497.8 4.300v3.700" stroke="#9a9a9a" stroke-width="1"/><path d="M505.3 4.300v3.700" stroke="#9a9a9a" stroke-width="1"/><path d="M512.9 4.300v3.700" stroke="#9a9a9a" stroke-width="1"/><path d="M520.4 4.300v3.700" stroke="#9a9a9a" stroke-width="1"/><path d="M528.0 1.500v6.500" stroke="#b0b0b0" stroke-width="1.100"/><path d="M535.5 4.300v3.700" stroke="#9a9a9a" stroke-width="1"/><path d="M543.0 4.300v3.700" stroke="#9a9a9a" stroke-width="1"/><path d="M550.6 4.300v3.700" stroke="#9a9a9a" stroke-width="1"/><path d="M558.1 4.300v3.700" stroke="#9a9a9a" stroke-width="1"/><path d="M565.6 1.500v6.500" stroke="#b0b0b0" stroke-width="1.100"/><path d="M573.2 4.300v3.700" stroke="#9a9a9a" stroke-width="1"/><path d="M580.7 4.300v3.700" stroke="#9a9a9a" stroke-width="1"/><path d="M588.3 4.300v3.700" stroke="#9a9a9a" stroke-width="1"/><path d="M595.8 4.300v3.700" stroke="#9a9a9a" stroke-width="1"/><path d="M603.3 1.500v6.500" stroke="#b0b0b0" stroke-width="1.100"/><path d="M610.9 4.300v3.700" stroke="#9a9a9a" stroke-width="1"/><path d="M618.4 4.300v3.700" stroke="#9a9a9a" stroke-width="1"/><path d="M626.0 4.300v3.700" stroke="#9a9a9a" stroke-width="1"/><path d="M633.5 4.300v3.700" stroke="#9a9a9a" stroke-width="1"/><path d="M641.0 1.500v6.500" stroke="#b0b0b0" stroke-width="1.100"/><path d="M648.6 4.300v3.700" stroke="#9a9a9a" stroke-width="1"/><path d="M656.1 4.300v3.700" stroke="#9a9a9a" stroke-width="1"/><path d="M663.6 4.300v3.700" stroke="#9a9a9a" stroke-width="1"/><path d="M671.2 4.300v3.700" stroke="#9a9a9a" stroke-width="1"/><path d="M678.7 1.500v6.500" stroke="#b0b0b0" stroke-width="1.100"/><path d="M686.3 4.300v3.700" stroke="#9a9a9a" stroke-width="1"/><path d="M693.8 4.300v3.700" stroke="#9a9a9a" stroke-width="1"/><path d="M701.3 4.300v3.700" stroke="#9a9a9a" stroke-width="1"/><path d="M708.9 4.300v3.700" stroke="#9a9a9a" stroke-width="1"/><path d="M716.4 1.500v6.500" stroke="#b0b0b0" stroke-width="1.100"/><path d="M723.9 4.300v3.700" stroke="#9a9a9a" stroke-width="1"/><path d="M731.5 4.300v3.700" stroke="#9a9a9a" stroke-width="1"/><path d="M739.0 4.300v3.700" stroke="#9a9a9a" stroke-width="1"/><path d="M746.6 4.300v3.700" stroke="#9a9a9a" stroke-width="1"/><path d="M754.1 1.500v6.500" stroke="#b0b0b0" stroke-width="1.100"/><path d="M761.6 4.300v3.700" stroke="#9a9a9a" stroke-width="1"/><path d="M769.2 4.300v3.700" stroke="#9a9a9a" stroke-width="1"/><path d="M776.7 4.300v3.700" stroke="#9a9a9a" stroke-width="1"/><path d="M784.3 4.300v3.700" stroke="#9a9a9a" stroke-width="1"/><path d="M791.8 1.500v6.500" stroke="#b0b0b0" stroke-width="1.100"/><path d="M799.3 4.300v3.700" stroke="#9a9a9a" stroke-width="1"/><path d="M806.9 4.300v3.700" stroke="#9a9a9a" stroke-width="1"/><path d="M814.4 4.300v3.700" stroke="#9a9a9a" stroke-width="1"/><path d="M821.9 4.300v3.700" stroke="#9a9a9a" stroke-width="1"/><path d="M829.5 1.500v6.500" stroke="#b0b0b0" stroke-width="1.100"/><path d="M837.0 4.300v3.700" stroke="#9a9a9a" stroke-width="1"/><path d="M844.6 4.300v3.700" stroke="#9a9a9a" stroke-width="1"/><path d="M852.1 4.300v3.700" stroke="#9a9a9a" stroke-width="1"/><path d="M859.6 4.300v3.700" stroke="#9a9a9a" stroke-width="1"/><path d="M867.2 1.500v6.500" stroke="#b0b0b0" stroke-width="1.100"/><path d="M874.7 4.300v3.700" stroke="#9a9a9a" stroke-width="1"/><path d="M882.2 4.300v3.700" stroke="#9a9a9a" stroke-width="1"/><path d="M889.8 4.300v3.700" stroke="#9a9a9a" stroke-width="1"/><path d="M897.3 4.300v3.700" stroke="#9a9a9a" stroke-width="1"/><path d="M904.9 1.500v6.500" stroke="#b0b0b0" stroke-width="1.100"/><path d="M912.4 4.300v3.700" stroke="#9a9a9a" stroke-width="1"/><path d="M919.9 4.300v3.700" stroke="#9a9a9a" stroke-width="1"/><path d="M927.5 4.300v3.700" stroke="#9a9a9a" stroke-width="1"/><path d="M935.0 4.300v3.700" stroke="#9a9a9a" stroke-width="1"/><path d="M942.5 1.500v6.500" stroke="#b0b0b0" stroke-width="1.100"/></svg>
<svg style="left:1392px;top:122px;" width="12" height="12" viewBox="0 0 12 12"><circle cx="6" cy="6" r="5.500" fill="#2f7fd0"/><path d="M3.200 8.500V6a2.800 2.800 0 0 1 5.600 0v2.500" fill="none" stroke="#e8f0ff" stroke-width="1.500"/></svg>
<div style="left:431px;top:138px;width:5px;height:580px;background:#1f1015;"></div>
<svg style="left:436px;top:138px;" width="950" height="580" viewBox="0 0 950 580"><rect width="950" height="580" fill="#000"/><path d="M38.0 0V580" stroke="#1b1b1b" stroke-width="1.200"/><path d="M75.7 0V580" stroke="#1b1b1b" stroke-width="1.200"/><path d="M113.4 0V580" stroke="#1b1b1b" stroke-width="1.200"/><path d="M151.1 0V580" stroke="#1b1b1b" stroke-width="1.200"/><path d="M188.8 0V580" stroke="#1b1b1b" stroke-width="1.200"/><path d="M226.4 0V580" stroke="#1b1b1b" stroke-width="1.200"/><path d="M264.1 0V580" stroke="#1b1b1b" stroke-width="1.200"/><path d="M301.8 0V580" stroke="#1b1b1b" stroke-width="1.200"/><path d="M339.5 0V580" stroke="#1b1b1b" stroke-width="1.200"/><path d="M377.2 0V580" stroke="#1b1b1b" stroke-width="1.200"/><path d="M414.9 0V580" stroke="#1b1b1b" stroke-width="1.200"/><path d="M452.6 0V580" stroke="#1b1b1b" stroke-width="1.200"/><path d="M490.3 0V580" stroke="#1b1b1b" stroke-width="1.200"/><path d="M528.0 0V580" stroke="#1b1b1b" stroke-width="1.200"/><path d="M565.6 0V580" stroke="#1b1b1b" stroke-width="1.200"/><path d="M603.3 0V580" stroke="#1b1b1b" stroke-width="1.200"/><path d="M641.0 0V580" stroke="#1b1b1b" stroke-width="1.200"/><path d="M678.7 0V580" stroke="#1b1b1b" stroke-width="1.200"/><path d="M716.4 0V580" stroke="#1b1b1b" stroke-width="1.200"/><path d="M754.1 0V580" stroke="#1b1b1b" stroke-width="1.200"/><path d="M791.8 0V580" stroke="#1b1b1b" stroke-width="1.200"/><path d="M829.5 0V580" stroke="#1b1b1b" stroke-width="1.200"/><path d="M867.2 0V580" stroke="#1b1b1b" stroke-width="1.200"/><path d="M904.9 0V580" stroke="#1b1b1b" stroke-width="1.200"/><path d="M942.5 0V580" stroke="#1b1b1b" stroke-width="1.200"/><path d="M0 31.8H950" stroke="#171717" stroke-width="1.200"/><path d="M0 548.8H950" stroke="#171717" stroke-width="1.200"/><path d="M0 59.9H950" stroke="#171717" stroke-width="1.200"/><path d="M0 520.7H950" stroke="#171717" stroke-width="1.200"/><path d="M0 85.0H950" stroke="#171717" stroke-width="1.200"/><path d="M0 495.6H950" stroke="#171717" stroke-width="1.200"/><path d="M0 107.3H950" stroke="#171717" stroke-width="1.200"/><path d="M0 473.3H950" stroke="#171717" stroke-width="1.200"/><path d="M0 127.2H950" stroke="#171717" stroke-width="1.200"/><path d="M0 453.4H950" stroke="#171717" stroke-width="1.200"/><path d="M0 160.8H950" stroke="#171717" stroke-width="1.200"/><path d="M0 419.8H950" stroke="#171717" stroke-width="1.200"/><path d="M0 187.4H950" stroke="#171717" stroke-width="1.200"/><path d="M0 393.2H950" stroke="#171717" stroke-width="1.200"/><path d="M0 217.5H950" stroke="#171717" stroke-width="1.200"/><path d="M0 363.1H950" stroke="#171717" stroke-width="1.200"/><path d="M0 238.7H950" stroke="#171717" stroke-width="1.200"/><path d="M0 341.9H950" stroke="#171717" stroke-width="1.200"/><path d="M0 253.8H950" stroke="#171717" stroke-width="1.200"/><path d="M0 326.8H950" stroke="#171717" stroke-width="1.200"/><path d="M0 264.5H950" stroke="#171717" stroke-width="1.200"/><path d="M0 316.1H950" stroke="#171717" stroke-width="1.200"/><path d="M0 277.3H950" stroke="#171717" stroke-width="1.200"/><path d="M0 303.3H950" stroke="#171717" stroke-width="1.200"/><path d="M0 290.3H950" stroke="#171717" stroke-width="1.200"/><path d="M0.0 286.3 L0.5 286.3 L1.0 286.2 L1.5 286.6 L2.0 286.1 L2.5 287.1 L3.0 286.7 L3.5 285.5 L4.0 285.3 L4.5 285.1 L5.0 285.3 L5.5 286.1 L6.0 285.3 L6.5 285.3 L7.0 285.8 L7.5 287.1 L8.0 287.6 L8.5 286.6 L9.0 286.8 L9.5 286.8 L10.0 286.8 L10.5 286.8 L11.0 286.8 L11.5 286.8 L12.0 287.0 L12.5 287.1 L13.0 287.3 L13.5 287.5 L14.0 287.6 L14.5 287.8 L15.0 287.8 L15.5 287.8 L16.0 287.8 L16.5 287.8 L17.0 287.8 L17.5 287.9 L18.0 287.9 L18.5 288.1 L19.0 288.2 L19.5 288.2 L20.0 288.3 L20.5 288.3 L21.0 288.3 L21.5 288.3 L22.0 288.3 L22.5 288.4 L23.0 288.4 L23.5 288.6 L24.0 288.7 L24.5 288.8 L25.0 288.8 L25.5 288.8 L26.0 288.8 L26.5 288.8 L27.0 288.8 L27.5 288.8 L28.0 288.8 L28.5 288.8 L29.0 288.8 L29.5 288.8 L30.0 288.8 L30.5 288.8 L31.0 288.8 L31.5 288.8 L32.0 288.8 L32.5 288.8 L33.0 288.8 L33.5 288.8 L34.0 288.8 L34.5 288.8 L35.0 288.8 L35.5 288.8 L36.0 288.8 L36.5 288.8 L37.0 288.8 L37.5 288.8 L38.0 288.8 L38.5 288.8 L39.0 288.8 L39.5 288.8 L40.0 288.8 L40.5 288.9 L41.0 288.9 L41.5 288.9 L42.0 288.9 L42.5 288.9 L43.0 288.9 L43.5 288.9 L44.0 288.9 L44.5 288.9 L45.0 288.9 L45.5 288.9 L46.0 288.9 L46.5 288.9 L47.0 288.9 L47.5 288.9 L48.0 288.9 L48.5 288.9 L49.0 288.9 L49.5 288.9 L50.0 289.0 L50.5 289.0 L51.0 289.0 L51.5 289.0 L52.0 289.0 L52.5 289.0 L53.0 289.0 L53.5 289.0 L54.0 289.0 L54.5 289.0 L55.0 289.0 L55.5 289.0 L56.0 289.0 L56.5 289.0 L57.0 289.0 L57.5 289.0 L58.0 289.0 L58.5 289.0 L59.0 289.0 L59.5 289.0 L60.0 289.0 L60.5 289.0 L61.0 289.0 L61.5 289.0 L62.0 289.0 L62.5 289.0 L63.0 289.0 L63.5 289.0 L64.0 289.0 L64.5 289.0 L65.0 289.0 L65.5 289.0 L66.0 289.0 L66.5 289.0 L67.0 289.0 L67.5 289.0 L68.0 289.0 L68.5 289.0 L69.0 289.0 L69.5 289.0 L70.0 289.0 L70.5 289.0 L71.0 289.0 L71.5 289.0 L72.0 289.0 L72.5 289.0 L73.0 289.0 L73.5 289.0 L74.0 289.0 L74.5 289.0 L75.0 289.0 L75.5 289.0 L76.0 289.0 L76.5 289.0 L77.0 289.0 L77.5 289.0 L78.0 289.0 L78.5 289.0 L79.0 289.0 L79.5 289.0 L80.0 289.0 L80.5 289.0 L81.0 289.0 L81.5 289.0 L82.0 289.0 L82.5 289.0 L83.0 289.0 L83.5 289.0 L84.0 288.9 L84.5 288.9 L85.0 288.9 L85.5 288.9 L86.0 288.9 L86.5 288.9 L87.0 288.9 L87.5 288.9 L88.0 288.9 L88.5 288.9 L89.0 288.9 L89.5 288.9 L90.0 288.9 L90.5 288.9 L91.0 288.9 L91.5 288.9 L92.0 288.9 L92.5 288.9 L93.0 288.9 L93.5 288.9 L94.0 288.9 L94.5 288.9 L95.0 288.9 L95.5 288.9 L96.0 288.9 L96.5 288.9 L97.0 288.9 L97.5 288.9 L98.0 288.9 L98.5 288.9 L99.0 288.9 L99.5 288.9 L100.0 288.9 L100.5 288.9 L101.0 288.9 L101.5 288.9 L102.0 288.9 L102.5 288.9 L103.0 288.9 L103.5 288.9 L104.0 288.9 L104.5 288.9 L105.0 288.8 L105.5 288.6 L106.0 288.4 L106.5 288.3 L107.0 288.3 L107.5 288.3 L108.0 284.4 L108.5 276.8 L109.0 273.0 L109.5 271.3 L110.0 273.9 L110.5 265.1 L111.0 264.5 L111.5 260.3 L112.0 261.8 L112.5 236.8 L113.0 219.2 L113.5 206.3 L114.0 217.4 L114.5 193.5 L115.0 182.5 L115.5 185.3 L116.0 177.4 L116.5 168.5 L117.0 166.6 L117.5 191.7 L118.0 197.9 L118.5 190.3 L119.0 207.9 L119.5 206.3 L120.0 203.3 L120.5 238.1 L121.0 261.6 L121.5 260.3 L122.0 269.2 L122.5 283.0 L123.0 285.3 L123.5 285.3 L124.0 279.0 L124.5 278.3 L125.0 278.0 L125.5 271.3 L126.0 245.2 L126.5 237.9 L127.0 232.3 L127.5 240.4 L128.0 251.1 L128.5 254.3 L129.0 263.7 L129.5 259.6 L130.0 260.3 L130.5 259.3 L131.0 264.8 L131.5 252.3 L132.0 252.3 L132.5 259.2 L133.0 255.5 L133.5 247.3 L134.0 249.3 L134.5 268.3 L135.0 268.3 L135.5 269.5 L136.0 277.6 L136.5 279.3 L137.0 278.8 L137.5 278.2 L138.0 274.9 L138.5 272.4 L139.0 272.3 L139.5 273.1 L140.0 271.9 L140.5 267.4 L141.0 267.7 L141.5 259.8 L142.0 260.3 L142.5 261.2 L143.0 265.2 L143.5 256.2 L144.0 250.3 L144.5 249.3 L145.0 247.6 L145.5 247.8 L146.0 241.3 L146.5 246.9 L147.0 238.5 L147.5 233.5 L148.0 235.3 L148.5 238.6 L149.0 230.6 L149.5 231.2 L150.0 230.3 L150.5 234.9 L151.0 248.2 L151.5 246.3 L152.0 253.1 L152.5 257.8 L153.0 260.3 L153.5 260.3 L154.0 270.1 L154.5 274.3 L155.0 274.3 L155.5 276.6 L156.0 279.2 L156.5 282.5 L157.0 282.3 L157.5 282.0 L158.0 276.2 L158.5 271.2 L159.0 270.3 L159.5 260.5 L160.0 253.1 L160.5 247.3 L161.0 250.3 L161.5 256.5 L162.0 256.3 L162.5 261.9 L163.0 261.7 L163.5 264.0 L164.0 260.3 L164.5 260.5 L165.0 260.8 L165.5 259.2 L166.0 259.3 L166.5 260.1 L167.0 261.8 L167.5 264.7 L168.0 263.3 L168.5 265.8 L169.0 262.9 L169.5 264.7 L170.0 260.1 L170.5 261.3 L171.0 260.6 L171.5 267.6 L172.0 263.9 L172.5 269.9 L173.0 267.3 L173.5 266.3 L174.0 265.7 L174.5 266.1 L175.0 264.7 L175.5 265.5 L176.0 265.3 L176.5 266.5 L177.0 264.9 L177.5 266.8 L178.0 269.2 L178.5 268.5 L179.0 268.3 L179.5 267.7 L180.0 273.1 L180.5 280.7 L181.0 276.3 L181.5 277.1 L182.0 279.2 L182.5 282.2 L183.0 282.3 L183.5 282.7 L184.0 277.4 L184.5 272.4 L185.0 268.3 L185.5 268.3 L186.0 257.4 L186.5 246.2 L187.0 247.3 L187.5 250.4 L188.0 232.7 L188.5 224.3 L189.0 223.7 L189.5 213.8 L190.0 222.9 L190.5 206.3 L191.0 210.0 L191.5 199.6 L192.0 194.3 L192.5 210.6 L193.0 192.6 L193.5 187.6 L194.0 187.3 L194.5 194.7 L195.0 215.2 L195.5 198.3 L196.0 197.1 L196.5 206.2 L197.0 207.7 L197.5 211.3 L198.0 221.0 L198.5 237.9 L199.0 230.3 L199.5 231.7 L200.0 245.6 L200.5 247.3 L201.0 264.6 L201.5 262.6 L202.0 265.3 L202.5 273.4 L203.0 279.8 L203.5 279.3 L204.0 278.2 L204.5 274.9 L205.0 272.7 L205.5 272.3 L206.0 270.9 L206.5 268.4 L207.0 268.9 L207.5 267.3 L208.0 267.8 L208.5 271.4 L209.0 278.8 L209.5 273.3 L210.0 276.3 L210.5 278.4 L211.0 277.8 L211.5 278.3 L212.0 278.5 L212.5 279.4 L213.0 283.0 L213.5 284.1 L214.0 283.3 L214.5 283.3 L215.0 284.1 L215.5 285.3 L216.0 286.8 L216.5 287.3 L217.0 287.3 L217.5 287.3 L218.0 287.3 L218.5 287.4 L219.0 287.7 L219.5 288.0 L220.0 288.3 L220.5 288.6 L221.0 288.7 L221.5 288.7 L222.0 288.7 L222.5 288.7 L223.0 288.7 L223.5 288.7 L224.0 288.7 L224.5 288.7 L225.0 288.8 L225.5 288.8 L226.0 288.8 L226.5 288.8 L227.0 288.8 L227.5 288.8 L228.0 288.8 L228.5 288.5 L229.0 287.3 L229.5 286.2 L230.0 286.3 L230.5 287.8 L231.0 282.5 L231.5 282.0 L232.0 279.3 L232.5 279.6 L233.0 278.3 L233.5 277.1 L234.0 275.7 L234.5 275.0 L235.0 275.3 L235.5 274.7 L236.0 274.8 L236.5 274.6 L237.0 276.0 L237.5 272.9 L238.0 273.3 L238.5 271.3 L239.0 276.7 L239.5 278.4 L240.0 272.3 L240.5 272.8 L241.0 271.2 L241.5 269.8 L242.0 268.3 L242.5 267.3 L243.0 271.6 L243.5 266.8 L244.0 266.4 L244.5 266.7 L245.0 268.9 L245.5 264.3 L246.0 264.3 L246.5 272.7 L247.0 279.0 L247.5 276.3 L248.0 281.0 L248.5 281.3 L249.0 286.6 L249.5 287.3 L250.0 287.3 L250.5 285.6 L251.0 282.9 L251.5 280.3 L252.0 280.3 L252.5 281.8 L253.0 279.6 L253.5 278.8 L254.0 273.7 L254.5 271.4 L255.0 272.5 L255.5 269.3 L256.0 269.7 L256.5 272.4 L257.0 274.9 L257.5 274.1 L258.0 277.3 L258.5 277.3 L259.0 277.6 L259.5 277.5 L260.0 279.9 L260.5 276.4 L261.0 274.5 L261.5 276.9 L262.0 271.8 L262.5 278.0 L263.0 272.3 L263.5 274.9 L264.0 272.1 L264.5 273.0 L265.0 275.8 L265.5 274.9 L266.0 277.0 L266.5 277.3 L267.0 279.3 L267.5 277.6 L268.0 278.4 L268.5 277.9 L269.0 277.1 L269.5 277.2 L270.0 275.7 L270.5 280.0 L271.0 273.6 L271.5 274.8 L272.0 275.2 L272.5 272.9 L273.0 273.5 L273.5 274.5 L274.0 278.2 L274.5 281.2 L275.0 284.5 L275.5 285.1 L276.0 285.3 L276.5 285.1 L277.0 285.1 L277.5 284.9 L278.0 284.8 L278.5 285.1 L279.0 285.3 L279.5 284.4 L280.0 283.0 L280.5 283.1 L281.0 283.3 L281.5 277.4 L282.0 270.9 L282.5 268.3 L283.0 262.1 L283.5 245.5 L284.0 244.1 L284.5 245.1 L285.0 243.8 L285.5 234.0 L286.0 232.3 L286.5 234.1 L287.0 232.2 L287.5 233.5 L288.0 248.4 L288.5 220.3 L289.0 222.8 L289.5 225.1 L290.0 245.1 L290.5 238.3 L291.0 248.7 L291.5 253.3 L292.0 251.3 L292.5 257.3 L293.0 260.7 L293.5 263.2 L294.0 263.3 L294.5 263.9 L295.0 275.2 L295.5 274.4 L296.0 272.3 L296.5 273.1 L297.0 275.2 L297.5 277.3 L298.0 280.6 L298.5 281.3 L299.0 281.3 L299.5 281.5 L300.0 278.3 L300.5 277.8 L301.0 275.0 L301.5 274.3 L302.0 273.7 L302.5 278.1 L303.0 273.3 L303.5 270.0 L304.0 272.5 L304.5 269.3 L305.0 269.2 L305.5 273.4 L306.0 271.8 L306.5 276.4 L307.0 272.0 L307.5 272.5 L308.0 278.4 L308.5 275.1 L309.0 272.3 L309.5 275.0 L310.0 275.2 L310.5 271.4 L311.0 271.8 L311.5 272.6 L312.0 271.4 L312.5 272.8 L313.0 274.1 L313.5 274.5 L314.0 271.3 L314.5 273.8 L315.0 271.9 L315.5 272.2 L316.0 275.7 L316.5 274.2 L317.0 275.0 L317.5 276.4 L318.0 278.4 L318.5 275.8 L319.0 276.4 L319.5 282.1 L320.0 282.4 L320.5 284.4 L321.0 284.3 L321.5 285.9 L322.0 288.1 L322.5 288.8 L323.0 288.8 L323.5 288.8 L324.0 288.6 L324.5 288.2 L325.0 287.9 L325.5 287.6 L326.0 287.3 L326.5 287.3 L327.0 287.3 L327.5 286.2 L328.0 278.5 L328.5 276.3 L329.0 276.4 L329.5 259.1 L330.0 256.8 L330.5 256.4 L331.0 260.1 L331.5 262.3 L332.0 265.1 L332.5 276.0 L333.0 270.3 L333.5 275.0 L334.0 278.8 L334.5 282.5 L335.0 281.3 L335.5 282.9 L336.0 286.9 L336.5 287.3 L337.0 287.3 L337.5 287.1 L338.0 286.4 L338.5 287.1 L339.0 285.8 L339.5 285.3 L340.0 283.7 L340.5 278.3 L341.0 277.3 L341.5 277.7 L342.0 271.5 L342.5 271.3 L343.0 274.0 L343.5 273.7 L344.0 274.7 L344.5 274.3 L345.0 276.9 L345.5 275.1 L346.0 276.8 L346.5 278.8 L347.0 277.6 L347.5 277.2 L348.0 278.5 L348.5 280.4 L349.0 283.7 L349.5 286.0 L350.0 283.3 L350.5 284.2 L351.0 284.7 L351.5 286.3 L352.0 287.2 L352.5 287.3 L353.0 287.3 L353.5 287.3 L354.0 287.0 L354.5 285.7 L355.0 284.3 L355.5 283.3 L356.0 281.5 L356.5 281.4 L357.0 280.9 L357.5 281.3 L358.0 283.0 L358.5 279.8 L359.0 276.5 L359.5 273.0 L360.0 271.8 L360.5 272.3 L361.0 272.2 L361.5 274.3 L362.0 268.3 L362.5 265.1 L363.0 266.0 L363.5 262.5 L364.0 273.2 L364.5 274.5 L365.0 270.8 L365.5 269.3 L366.0 269.5 L366.5 270.8 L367.0 272.1 L367.5 274.4 L368.0 273.9 L368.5 277.1 L369.0 278.1 L369.5 279.3 L370.0 280.1 L370.5 280.3 L371.0 280.0 L371.5 281.2 L372.0 283.2 L372.5 285.3 L373.0 285.8 L373.5 285.3 L374.0 285.4 L374.5 286.1 L375.0 287.2 L375.5 288.4 L376.0 288.8 L376.5 288.8 L377.0 288.8 L377.5 288.5 L378.0 288.3 L378.5 288.3 L379.0 284.6 L379.5 284.9 L380.0 288.3 L380.5 288.4 L381.0 288.8 L381.5 288.8 L382.0 288.8 L382.5 288.8 L383.0 288.8 L383.5 288.8 L384.0 288.8 L384.5 288.8 L385.0 288.8 L385.5 288.8 L386.0 288.8 L386.5 288.8 L387.0 288.8 L387.5 288.8 L388.0 288.8 L388.5 288.8 L389.0 288.8 L389.5 288.8 L390.0 288.9 L390.5 288.9 L391.0 288.9 L391.5 288.9 L392.0 288.9 L392.5 288.9 L393.0 288.9 L393.5 288.9 L394.0 288.9 L394.5 288.9 L395.0 288.9 L395.5 288.9 L396.0 288.9 L396.5 288.9 L397.0 288.9 L397.5 288.9 L398.0 288.9 L398.5 288.9 L399.0 288.9 L399.5 288.9 L400.0 288.9 L400.5 288.9 L401.0 288.9 L401.5 288.9 L402.0 288.9 L402.5 288.9 L403.0 288.9 L403.5 288.9 L404.0 288.9 L404.5 288.9 L405.0 288.9 L405.5 288.9 L406.0 288.9 L406.5 288.9 L407.0 288.9 L407.5 288.9 L408.0 288.9 L408.5 288.9 L409.0 288.8 L409.5 288.8 L410.0 288.8 L410.5 288.8 L411.0 288.8 L411.5 288.8 L412.0 288.8 L412.5 288.8 L413.0 288.8 L413.5 288.8 L414.0 288.8 L414.5 288.8 L415.0 288.8 L415.5 288.8 L416.0 288.8 L416.5 288.8 L417.0 288.8 L417.5 288.8 L418.0 288.8 L418.5 288.8 L419.0 288.8 L419.5 287.3 L420.0 283.0 L420.5 281.1 L421.0 277.6 L421.5 276.7 L422.0 277.5 L422.5 274.6 L423.0 275.3 L423.5 275.8 L424.0 275.2 L424.5 274.9 L425.0 274.4 L425.5 273.9 L426.0 273.7 L426.5 273.0 L427.0 268.8 L427.5 266.1 L428.0 266.3 L428.5 266.4 L429.0 263.8 L429.5 259.5 L430.0 257.8 L430.5 260.1 L431.0 261.9 L431.5 265.0 L432.0 266.3 L432.5 267.3 L433.0 271.0 L433.5 272.8 L434.0 272.3 L434.5 277.0 L435.0 273.7 L435.5 272.3 L436.0 277.1 L436.5 274.8 L437.0 277.4 L437.5 279.5 L438.0 277.3 L438.5 277.6 L439.0 278.2 L439.5 277.9 L440.0 279.9 L440.5 280.3 L441.0 280.7 L441.5 279.5 L442.0 281.1 L442.5 281.9 L443.0 282.2 L443.5 281.9 L444.0 281.3 L444.5 281.3 L445.0 281.2 L445.5 281.0 L446.0 277.3 L446.5 275.9 L447.0 271.6 L447.5 271.3 L448.0 271.2 L448.5 274.8 L449.0 263.6 L449.5 267.1 L450.0 259.7 L450.5 260.3 L451.0 260.0 L451.5 263.2 L452.0 272.4 L452.5 265.3 L453.0 266.6 L453.5 270.4 L454.0 271.5 L454.5 271.9 L455.0 270.3 L455.5 274.0 L456.0 275.0 L456.5 279.3 L457.0 279.3 L457.5 280.7 L458.0 283.1 L458.5 284.4 L459.0 286.8 L459.5 286.3 L460.0 286.5 L460.5 278.3 L461.0 269.4 L461.5 270.3 L462.0 270.8 L462.5 261.4 L463.0 251.6 L463.5 249.3 L464.0 259.4 L464.5 244.2 L465.0 240.3 L465.5 238.0 L466.0 235.5 L466.5 236.3 L467.0 237.6 L467.5 238.9 L468.0 250.8 L468.5 243.8 L469.0 243.3 L469.5 250.8 L470.0 244.8 L470.5 247.7 L471.0 245.5 L471.5 251.5 L472.0 250.9 L472.5 253.4 L473.0 254.3 L473.5 261.7 L474.0 260.8 L474.5 262.5 L475.0 266.8 L475.5 268.4 L476.0 276.4 L476.5 274.3 L477.0 273.6 L477.5 277.1 L478.0 281.2 L478.5 281.3 L479.0 281.7 L479.5 281.4 L480.0 282.2 L480.5 280.8 L481.0 281.2 L481.5 277.9 L482.0 277.2 L482.5 278.2 L483.0 277.6 L483.5 277.1 L484.0 278.7 L484.5 279.2 L485.0 280.3 L485.5 280.6 L486.0 280.2 L486.5 281.2 L487.0 281.5 L487.5 282.1 L488.0 281.3 L488.5 280.9 L489.0 281.5 L489.5 282.2 L490.0 282.2 L490.5 282.8 L491.0 283.8 L491.5 284.6 L492.0 284.8 L492.5 285.2 L493.0 285.4 L493.5 285.3 L494.0 285.4 L494.5 284.6 L495.0 282.4 L495.5 278.9 L496.0 279.3 L496.5 279.3 L497.0 278.1 L497.5 276.6 L498.0 274.6 L498.5 272.9 L499.0 273.2 L499.5 273.9 L500.0 273.6 L500.5 273.8 L501.0 275.0 L501.5 274.9 L502.0 276.6 L502.5 277.0 L503.0 277.7 L503.5 277.5 L504.0 279.6 L504.5 277.6 L505.0 277.0 L505.5 273.9 L506.0 271.2 L506.5 271.1 L507.0 270.3 L507.5 277.1 L508.0 275.3 L508.5 262.3 L509.0 262.5 L509.5 273.1 L510.0 264.8 L510.5 272.0 L511.0 269.6 L511.5 269.3 L512.0 270.7 L512.5 273.4 L513.0 274.8 L513.5 275.4 L514.0 274.3 L514.5 276.7 L515.0 274.2 L515.5 276.8 L516.0 276.3 L516.5 276.7 L517.0 274.9 L517.5 272.9 L518.0 278.0 L518.5 273.3 L519.0 273.9 L519.5 274.4 L520.0 279.1 L520.5 281.3 L521.0 280.3 L521.5 280.3 L522.0 282.6 L522.5 285.5 L523.0 285.9 L523.5 285.3 L524.0 283.6 L524.5 280.5 L525.0 273.3 L525.5 273.3 L526.0 273.6 L526.5 269.0 L527.0 265.3 L527.5 260.0 L528.0 259.7 L528.5 262.4 L529.0 263.0 L529.5 263.4 L530.0 273.1 L530.5 265.0 L531.0 265.3 L531.5 265.1 L532.0 266.4 L532.5 266.3 L533.0 267.2 L533.5 268.3 L534.0 268.9 L534.5 268.8 L535.0 270.9 L535.5 268.6 L536.0 270.8 L536.5 274.4 L537.0 268.8 L537.5 268.9 L538.0 269.7 L538.5 268.3 L539.0 267.3 L539.5 273.5 L540.0 278.7 L540.5 278.8 L541.0 279.3 L541.5 279.0 L542.0 281.9 L542.5 286.4 L543.0 287.3 L543.5 287.3 L544.0 287.3 L544.5 285.3 L545.0 284.9 L545.5 282.5 L546.0 282.3 L546.5 281.1 L547.0 279.8 L547.5 277.1 L548.0 277.6 L548.5 276.5 L549.0 276.8 L549.5 261.5 L550.0 262.3 L550.5 265.4 L551.0 248.5 L551.5 244.5 L552.0 245.5 L552.5 252.4 L553.0 262.3 L553.5 262.3 L554.0 266.7 L554.5 275.8 L555.0 273.9 L555.5 280.0 L556.0 270.6 L556.5 271.1 L557.0 268.3 L557.5 267.9 L558.0 265.6 L558.5 263.6 L559.0 264.3 L559.5 265.5 L560.0 267.9 L560.5 268.4 L561.0 272.0 L561.5 271.3 L562.0 272.1 L562.5 272.5 L563.0 273.3 L563.5 274.6 L564.0 274.8 L564.5 277.8 L565.0 279.5 L565.5 273.9 L566.0 274.8 L566.5 274.6 L567.0 274.0 L567.5 272.4 L568.0 272.6 L568.5 272.3 L569.0 273.8 L569.5 272.4 L570.0 272.2 L570.5 274.5 L571.0 275.5 L571.5 278.4 L572.0 279.9 L572.5 279.8 L573.0 280.1 L573.5 279.5 L574.0 282.2 L574.5 280.7 L575.0 277.6 L575.5 275.6 L576.0 274.0 L576.5 273.8 L577.0 272.4 L577.5 271.9 L578.0 270.3 L578.5 270.4 L579.0 267.3 L579.5 273.9 L580.0 265.3 L580.5 265.6 L581.0 265.8 L581.5 267.4 L582.0 267.3 L582.5 262.5 L583.0 264.4 L583.5 270.6 L584.0 270.3 L584.5 272.8 L585.0 275.7 L585.5 277.6 L586.0 277.2 L586.5 278.6 L587.0 282.2 L587.5 285.1 L588.0 287.3 L588.5 287.3 L589.0 285.4 L589.5 282.3 L590.0 282.5 L590.5 279.1 L591.0 275.8 L591.5 279.4 L592.0 281.3 L592.5 282.8 L593.0 287.2 L593.5 285.3 L594.0 278.9 L594.5 274.3 L595.0 269.8 L595.5 261.6 L596.0 267.3 L596.5 274.4 L597.0 272.3 L597.5 275.6 L598.0 276.2 L598.5 279.3 L599.0 279.5 L599.5 281.0 L600.0 279.5 L600.5 281.6 L601.0 279.6 L601.5 279.6 L602.0 280.3 L602.5 280.0 L603.0 284.0 L603.5 281.2 L604.0 281.7 L604.5 282.6 L605.0 280.9 L605.5 281.3 L606.0 281.2 L606.5 281.1 L607.0 281.4 L607.5 284.7 L608.0 284.3 L608.5 283.8 L609.0 284.4 L609.5 286.4 L610.0 287.7 L610.5 287.2 L611.0 287.3 L611.5 287.3 L612.0 287.3 L612.5 287.3 L613.0 287.3 L613.5 286.9 L614.0 284.6 L614.5 283.1 L615.0 281.7 L615.5 282.7 L616.0 281.3 L616.5 283.9 L617.0 273.5 L617.5 270.3 L618.0 270.5 L618.5 270.3 L619.0 256.8 L619.5 270.0 L620.0 267.5 L620.5 271.0 L621.0 268.3 L621.5 271.4 L622.0 278.7 L622.5 277.6 L623.0 277.2 L623.5 277.3 L624.0 279.3 L624.5 276.4 L625.0 275.3 L625.5 277.2 L626.0 276.4 L626.5 274.8 L627.0 275.0 L627.5 275.9 L628.0 278.5 L628.5 280.4 L629.0 283.1 L629.5 284.0 L630.0 283.3 L630.5 284.4 L631.0 283.0 L631.5 281.9 L632.0 279.6 L632.5 277.4 L633.0 275.3 L633.5 276.0 L634.0 273.7 L634.5 274.8 L635.0 272.9 L635.5 272.1 L636.0 273.4 L636.5 273.6 L637.0 279.6 L637.5 276.4 L638.0 276.6 L638.5 278.3 L639.0 279.3 L639.5 279.0 L640.0 281.6 L640.5 279.5 L641.0 279.4 L641.5 283.6 L642.0 279.3 L642.5 282.2 L643.0 283.3 L643.5 283.1 L644.0 285.1 L644.5 285.2 L645.0 286.2 L645.5 287.3 L646.0 287.3 L646.5 287.3 L647.0 287.3 L647.5 287.3 L648.0 287.3 L648.5 287.3 L649.0 287.4 L649.5 287.7 L650.0 287.9 L650.5 288.1 L651.0 288.3 L651.5 288.5 L652.0 288.8 L652.5 288.8 L653.0 288.8 L653.5 288.8 L654.0 288.8 L654.5 286.9 L655.0 283.0 L655.5 282.3 L656.0 281.9 L656.5 273.3 L657.0 268.3 L657.5 268.8 L658.0 269.3 L658.5 264.6 L659.0 263.9 L659.5 255.9 L660.0 257.4 L660.5 258.1 L661.0 254.5 L661.5 261.0 L662.0 254.0 L662.5 257.0 L663.0 262.5 L663.5 257.3 L664.0 260.8 L664.5 268.3 L665.0 260.6 L665.5 259.5 L666.0 268.6 L666.5 270.5 L667.0 267.3 L667.5 268.3 L668.0 271.0 L668.5 276.7 L669.0 273.9 L669.5 276.3 L670.0 278.6 L670.5 282.2 L671.0 281.3 L671.5 283.5 L672.0 285.7 L672.5 287.3 L673.0 287.3 L673.5 287.3 L674.0 286.5 L674.5 285.7 L675.0 283.3 L675.5 282.1 L676.0 282.7 L676.5 281.3 L677.0 281.7 L677.5 282.3 L678.0 276.5 L678.5 272.9 L679.0 269.7 L679.5 266.1 L680.0 266.3 L680.5 269.1 L681.0 269.3 L681.5 261.3 L682.0 262.3 L682.5 261.5 L683.0 261.3 L683.5 259.5 L684.0 259.7 L684.5 265.2 L685.0 260.1 L685.5 259.9 L686.0 257.9 L686.5 260.8 L687.0 258.7 L687.5 259.8 L688.0 266.4 L688.5 270.1 L689.0 269.3 L689.5 272.0 L690.0 278.0 L690.5 279.5 L691.0 279.8 L691.5 279.8 L692.0 281.9 L692.5 284.4 L693.0 285.3 L693.5 287.3 L694.0 287.3 L694.5 287.3 L695.0 287.3 L695.5 287.3 L696.0 286.0 L696.5 284.6 L697.0 285.2 L697.5 284.1 L698.0 283.6 L698.5 281.6 L699.0 280.5 L699.5 282.3 L700.0 281.4 L700.5 281.7 L701.0 281.0 L701.5 279.3 L702.0 277.9 L702.5 278.2 L703.0 279.3 L703.5 278.4 L704.0 277.6 L704.5 279.5 L705.0 268.1 L705.5 268.3 L706.0 265.9 L706.5 258.7 L707.0 270.9 L707.5 263.0 L708.0 261.5 L708.5 267.7 L709.0 262.3 L709.5 267.8 L710.0 264.0 L710.5 274.7 L711.0 266.7 L711.5 266.3 L712.0 265.5 L712.5 269.8 L713.0 273.8 L713.5 278.7 L714.0 282.5 L714.5 279.5 L715.0 280.7 L715.5 279.3 L716.0 284.1 L716.5 282.2 L717.0 283.6 L717.5 286.1 L718.0 285.1 L718.5 285.8 L719.0 285.3 L719.5 285.9 L720.0 285.1 L720.5 285.4 L721.0 283.4 L721.5 285.2 L722.0 281.2 L722.5 279.1 L723.0 279.0 L723.5 279.5 L724.0 279.2 L724.5 275.8 L725.0 271.7 L725.5 269.3 L726.0 268.4 L726.5 264.2 L727.0 258.9 L727.5 259.7 L728.0 266.4 L728.5 259.6 L729.0 259.5 L729.5 258.1 L730.0 258.8 L730.5 263.0 L731.0 265.0 L731.5 264.0 L732.0 258.7 L732.5 258.1 L733.0 261.8 L733.5 272.0 L734.0 268.3 L734.5 267.4 L735.0 272.2 L735.5 278.2 L736.0 277.6 L736.5 277.5 L737.0 277.4 L737.5 278.3 L738.0 280.4 L738.5 282.4 L739.0 283.9 L739.5 285.8 L740.0 285.6 L740.5 285.3 L741.0 286.3 L741.5 285.9 L742.0 285.2 L742.5 283.2 L743.0 281.6 L743.5 279.8 L744.0 279.9 L744.5 278.3 L745.0 277.7 L745.5 277.6 L746.0 279.7 L746.5 278.9 L747.0 277.3 L747.5 281.8 L748.0 280.3 L748.5 282.9 L749.0 282.0 L749.5 283.4 L750.0 283.6 L750.5 283.9 L751.0 283.3 L751.5 283.5 L752.0 283.6 L752.5 283.6 L753.0 282.0 L753.5 281.2 L754.0 281.3 L754.5 282.8 L755.0 281.4 L755.5 281.6 L756.0 282.5 L756.5 279.3 L757.0 278.4 L757.5 276.6 L758.0 277.6 L758.5 279.1 L759.0 276.7 L759.5 279.0 L760.0 277.2 L760.5 276.4 L761.0 279.7 L761.5 279.0 L762.0 280.5 L762.5 282.4 L763.0 284.0 L763.5 283.0 L764.0 283.9 L764.5 285.9 L765.0 283.3 L765.5 283.3 L766.0 284.6 L766.5 284.3 L767.0 286.3 L767.5 286.9 L768.0 288.0 L768.5 288.8 L769.0 288.8 L769.5 288.8 L770.0 288.8 L770.5 288.8 L771.0 287.6 L771.5 285.8 L772.0 283.8 L772.5 281.5 L773.0 279.4 L773.5 282.0 L774.0 280.7 L774.5 279.5 L775.0 282.7 L775.5 279.5 L776.0 278.6 L776.5 278.4 L777.0 277.6 L777.5 276.2 L778.0 275.7 L778.5 280.9 L779.0 275.8 L779.5 275.4 L780.0 273.2 L780.5 275.1 L781.0 271.3 L781.5 270.5 L782.0 269.8 L782.5 267.3 L783.0 271.8 L783.5 276.2 L784.0 276.3 L784.5 278.2 L785.0 283.2 L785.5 285.3 L786.0 285.4 L786.5 285.7 L787.0 285.4 L787.5 286.0 L788.0 286.9 L788.5 287.5 L789.0 288.1 L789.5 288.3 L790.0 288.3 L790.5 288.3 L791.0 287.8 L791.5 284.6 L792.0 281.4 L792.5 281.6 L793.0 280.3 L793.5 280.5 L794.0 277.1 L794.5 275.8 L795.0 272.9 L795.5 273.5 L796.0 272.4 L796.5 271.2 L797.0 269.7 L797.5 270.7 L798.0 270.3 L798.5 269.9 L799.0 270.9 L799.5 276.1 L800.0 274.5 L800.5 276.5 L801.0 277.5 L801.5 277.6 L802.0 277.7 L802.5 279.8 L803.0 282.4 L803.5 285.8 L804.0 288.3 L804.5 288.3 L805.0 288.3 L805.5 288.3 L806.0 287.1 L806.5 285.2 L807.0 284.4 L807.5 282.5 L808.0 279.5 L808.5 279.7 L809.0 279.5 L809.5 282.1 L810.0 280.7 L810.5 277.6 L811.0 275.9 L811.5 276.3 L812.0 261.2 L812.5 254.0 L813.0 269.2 L813.5 276.3 L814.0 278.7 L814.5 281.1 L815.0 281.3 L815.5 281.1 L816.0 284.8 L816.5 284.0 L817.0 283.4 L817.5 280.0 L818.0 277.4 L818.5 278.7 L819.0 276.7 L819.5 276.7 L820.0 277.0 L820.5 279.0 L821.0 278.0 L821.5 277.1 L822.0 277.4 L822.5 279.7 L823.0 279.4 L823.5 278.7 L824.0 277.6 L824.5 277.9 L825.0 279.2 L825.5 277.6 L826.0 278.3 L826.5 279.1 L827.0 283.2 L827.5 284.4 L828.0 286.9 L828.5 287.3 L829.0 287.3 L829.5 287.3 L830.0 287.3 L830.5 287.8 L831.0 286.3 L831.5 285.8 L832.0 285.3 L832.5 286.1 L833.0 285.3 L833.5 285.5 L834.0 285.3 L834.5 281.3 L835.0 278.6 L835.5 276.3 L836.0 273.4 L836.5 273.9 L837.0 277.0 L837.5 274.0 L838.0 274.0 L838.5 273.1 L839.0 273.8 L839.5 274.3 L840.0 274.0 L840.5 273.9 L841.0 273.3 L841.5 274.8 L842.0 276.7 L842.5 279.6 L843.0 282.1 L843.5 284.7 L844.0 283.3 L844.5 283.6 L845.0 283.5 L845.5 285.7 L846.0 284.4 L846.5 286.3 L847.0 287.0 L847.5 287.7 L848.0 288.3 L848.5 288.3 L849.0 288.3 L849.5 288.3 L850.0 288.2 L850.5 287.4 L851.0 286.4 L851.5 285.8 L852.0 285.1 L852.5 285.3 L853.0 285.3 L853.5 286.1 L854.0 285.3 L854.5 286.0 L855.0 286.9 L855.5 287.2 L856.0 287.7 L856.5 288.0 L857.0 288.0 L857.5 288.0 L858.0 288.0 L858.5 288.0 L859.0 288.0 L859.5 288.0 L860.0 288.0 L860.5 288.0 L861.0 288.0 L861.5 288.0 L862.0 288.0 L862.5 288.0 L863.0 288.0 L863.5 288.0 L864.0 288.0 L864.5 288.0 L865.0 288.0 L865.5 288.0 L866.0 288.0 L866.5 288.0 L867.0 288.0 L867.5 288.0 L868.0 288.0 L868.5 288.0 L869.0 288.0 L869.5 288.0 L870.0 288.0 L870.5 288.0 L871.0 288.0 L871.5 288.0 L872.0 288.0 L872.5 288.0 L873.0 288.0 L873.5 288.0 L874.0 288.0 L874.5 288.0 L875.0 288.0 L875.5 288.0 L876.0 288.0 L876.5 288.0 L877.0 288.0 L877.5 288.0 L878.0 288.0 L878.5 288.0 L879.0 288.0 L879.5 288.0 L880.0 288.0 L880.5 288.0 L881.0 288.0 L881.5 288.0 L882.0 288.0 L882.5 288.0 L883.0 288.0 L883.5 288.0 L884.0 288.0 L884.5 288.0 L885.0 288.0 L885.5 288.0 L886.0 288.0 L886.5 287.5 L887.0 287.3 L887.5 287.0 L888.0 286.5 L888.5 285.3 L889.0 285.7 L889.5 280.8 L890.0 276.0 L890.5 276.3 L891.0 276.7 L891.5 271.7 L892.0 266.3 L892.5 266.3 L893.0 268.6 L893.5 266.4 L894.0 265.1 L894.5 263.3 L895.0 262.8 L895.5 265.3 L896.0 262.8 L896.5 265.7 L897.0 260.6 L897.5 268.6 L898.0 262.4 L898.5 258.6 L899.0 256.8 L899.5 256.3 L900.0 258.9 L900.5 256.9 L901.0 251.7 L901.5 251.4 L902.0 249.6 L902.5 250.3 L903.0 256.0 L903.5 259.0 L904.0 260.3 L904.5 272.4 L905.0 267.0 L905.5 270.3 L906.0 271.1 L906.5 277.6 L907.0 278.3 L907.5 280.8 L908.0 286.2 L908.5 285.3 L909.0 282.4 L909.5 272.0 L910.0 270.3 L910.5 267.8 L911.0 256.0 L911.5 256.8 L912.0 255.1 L912.5 250.3 L913.0 250.3 L913.5 248.6 L914.0 236.3 L914.5 254.4 L915.0 255.3 L915.5 257.3 L916.0 262.9 L916.5 275.0 L917.0 272.3 L917.5 269.7 L918.0 255.1 L918.5 254.3 L919.0 249.9 L919.5 239.3 L920.0 239.8 L920.5 242.2 L921.0 251.9 L921.5 234.3 L922.0 250.7 L922.5 242.6 L923.0 230.3 L923.5 232.1 L924.0 241.1 L924.5 240.0 L925.0 235.3 L925.5 246.2 L926.0 241.2 L926.5 239.8 L927.0 241.0 L927.5 252.1 L928.0 254.3 L928.5 256.1 L929.0 266.7 L929.5 266.3 L930.0 263.6 L930.5 260.8 L931.0 260.9 L931.5 255.3 L932.0 255.9 L932.5 251.6 L933.0 255.0 L933.5 255.8 L934.0 247.3 L934.5 258.0 L935.0 260.7 L935.5 259.8 L936.0 253.3 L936.5 253.0 L937.0 259.6 L937.5 257.8 L938.0 258.7 L938.5 258.4 L939.0 262.5 L939.5 263.6 L940.0 263.3 L940.5 263.7 L941.0 266.6 L941.5 267.1 L942.0 269.2 L942.5 268.3 L943.0 272.1 L943.5 278.5 L944.0 273.6 L944.5 274.3 L945.0 274.6 L945.5 277.9 L946.0 279.7 L946.5 279.5 L947.0 280.7 L947.5 284.5 L948.0 287.1 L948.5 287.3 L949.0 288.1 L949.5 288.8 L949.5 291.8 L949.0 293.2 L948.5 294.6 L948.0 293.9 L947.5 296.2 L947.0 297.4 L946.5 298.3 L946.0 297.9 L945.5 297.7 L945.0 301.3 L944.5 301.3 L944.0 300.9 L943.5 300.2 L943.0 302.7 L942.5 304.1 L942.0 304.3 L941.5 305.3 L941.0 303.7 L940.5 304.8 L940.0 308.3 L939.5 308.9 L939.0 306.1 L938.5 307.9 L938.0 311.7 L937.5 312.6 L937.0 310.2 L936.5 311.6 L936.0 314.3 L935.5 314.0 L935.0 314.8 L934.5 316.4 L934.0 316.3 L933.5 315.1 L933.0 314.0 L932.5 314.5 L932.0 310.2 L931.5 315.3 L931.0 313.1 L930.5 314.3 L930.0 314.1 L929.5 313.3 L929.0 307.6 L928.5 314.5 L928.0 317.3 L927.5 318.7 L927.0 321.9 L926.5 321.1 L926.0 321.3 L925.5 320.8 L925.0 319.3 L924.5 318.5 L924.0 316.8 L923.5 316.0 L923.0 317.3 L922.5 317.2 L922.0 314.9 L921.5 314.3 L921.0 313.1 L920.5 312.8 L920.0 311.7 L919.5 309.8 L919.0 305.3 L918.5 308.3 L918.0 308.4 L917.5 304.9 L917.0 304.1 L916.5 304.2 L916.0 300.3 L915.5 299.9 L915.0 301.3 L914.5 299.4 L914.0 298.3 L913.5 298.6 L913.0 299.2 L912.5 299.3 L912.0 300.2 L911.5 300.3 L911.0 300.3 L910.5 298.6 L910.0 298.3 L909.5 296.6 L909.0 295.3 L908.5 294.6 L908.0 295.2 L907.5 298.5 L907.0 299.3 L906.5 299.5 L906.0 304.3 L905.5 304.1 L905.0 305.2 L904.5 304.4 L904.0 307.3 L903.5 305.2 L903.0 308.8 L902.5 309.8 L902.0 303.4 L901.5 307.6 L901.0 309.4 L900.5 305.4 L900.0 305.9 L899.5 308.3 L899.0 304.8 L898.5 307.8 L898.0 301.1 L897.5 306.3 L897.0 306.9 L896.5 303.9 L896.0 300.4 L895.5 305.1 L895.0 303.7 L894.5 304.3 L894.0 301.8 L893.5 302.9 L893.0 301.0 L892.5 302.3 L892.0 302.5 L891.5 301.6 L891.0 300.1 L890.5 301.8 L890.0 301.7 L889.5 301.8 L889.0 300.3 L888.5 301.3 L888.0 298.5 L887.5 295.2 L887.0 295.3 L886.5 294.3 L886.0 292.6 L885.5 292.6 L885.0 292.6 L884.5 292.6 L884.0 292.6 L883.5 292.6 L883.0 292.6 L882.5 292.6 L882.0 292.6 L881.5 292.6 L881.0 292.6 L880.5 292.6 L880.0 292.6 L879.5 292.6 L879.0 292.6 L878.5 292.6 L878.0 292.6 L877.5 292.6 L877.0 292.6 L876.5 292.6 L876.0 292.6 L875.5 292.6 L875.0 292.6 L874.5 292.6 L874.0 292.6 L873.5 292.6 L873.0 292.6 L872.5 292.6 L872.0 292.6 L871.5 292.6 L871.0 292.6 L870.5 292.6 L870.0 292.6 L869.5 292.6 L869.0 292.6 L868.5 292.6 L868.0 292.6 L867.5 292.6 L867.0 292.6 L866.5 292.6 L866.0 292.6 L865.5 292.6 L865.0 292.6 L864.5 292.6 L864.0 292.7 L863.5 292.8 L863.0 293.0 L862.5 293.1 L862.0 293.2 L861.5 293.3 L861.0 293.4 L860.5 293.5 L860.0 293.6 L859.5 293.7 L859.0 293.7 L858.5 293.7 L858.0 293.7 L857.5 293.7 L857.0 293.7 L856.5 293.7 L856.0 293.8 L855.5 293.9 L855.0 293.9 L854.5 294.1 L854.0 294.3 L853.5 293.8 L853.0 294.1 L852.5 294.6 L852.0 294.5 L851.5 294.2 L851.0 294.4 L850.5 294.1 L850.0 294.5 L849.5 294.6 L849.0 294.6 L848.5 294.3 L848.0 294.7 L847.5 293.7 L847.0 294.4 L846.5 295.7 L846.0 295.2 L845.5 296.3 L845.0 295.2 L844.5 296.6 L844.0 296.3 L843.5 295.5 L843.0 296.8 L842.5 297.7 L842.0 299.3 L841.5 300.2 L841.0 298.8 L840.5 300.3 L840.0 298.8 L839.5 300.3 L839.0 298.8 L838.5 301.6 L838.0 301.9 L837.5 302.4 L837.0 300.8 L836.5 302.3 L836.0 302.3 L835.5 301.4 L835.0 299.7 L834.5 296.7 L834.0 295.7 L833.5 296.1 L833.0 296.3 L832.5 296.3 L832.0 295.5 L831.5 295.7 L831.0 294.3 L830.5 294.3 L830.0 293.7 L829.5 293.7 L829.0 293.7 L828.5 293.7 L828.0 293.7 L827.5 295.7 L827.0 297.8 L826.5 299.3 L826.0 300.6 L825.5 300.3 L825.0 299.1 L824.5 299.9 L824.0 300.6 L823.5 300.3 L823.0 299.9 L822.5 297.3 L822.0 297.4 L821.5 299.4 L821.0 299.5 L820.5 299.5 L820.0 298.9 L819.5 299.3 L819.0 298.2 L818.5 298.9 L818.0 299.3 L817.5 299.0 L817.0 295.4 L816.5 298.8 L816.0 298.1 L815.5 297.9 L815.0 298.3 L814.5 298.5 L814.0 301.0 L813.5 302.3 L813.0 305.1 L812.5 315.3 L812.0 309.4 L811.5 302.3 L811.0 301.7 L810.5 301.0 L810.0 299.1 L809.5 298.1 L809.0 298.3 L808.5 298.6 L808.0 297.8 L807.5 297.3 L807.0 296.5 L806.5 295.3 L806.0 293.7 L805.5 293.7 L805.0 293.7 L804.5 293.7 L804.0 293.7 L803.5 294.2 L803.0 297.2 L802.5 298.2 L802.0 300.3 L801.5 300.3 L801.0 299.3 L800.5 300.9 L800.0 301.7 L799.5 299.6 L799.0 304.0 L798.5 303.3 L798.0 304.1 L797.5 302.2 L797.0 304.1 L796.5 302.5 L796.0 303.1 L795.5 303.3 L795.0 303.2 L794.5 300.8 L794.0 297.7 L793.5 299.8 L793.0 299.3 L792.5 299.7 L792.0 298.4 L791.5 296.8 L791.0 295.0 L790.5 294.6 L790.0 293.3 L789.5 294.5 L789.0 294.9 L788.5 294.9 L788.0 294.7 L787.5 295.8 L787.0 296.4 L786.5 295.4 L786.0 295.8 L785.5 296.3 L785.0 295.3 L784.5 297.0 L784.0 297.3 L783.5 297.8 L783.0 298.1 L782.5 299.3 L782.0 299.5 L781.5 296.1 L781.0 297.3 L780.5 295.9 L780.0 296.3 L779.5 294.4 L779.0 295.3 L778.5 295.5 L778.0 295.4 L777.5 294.6 L777.0 295.7 L776.5 294.8 L776.0 295.0 L775.5 296.0 L775.0 296.4 L774.5 296.3 L774.0 294.6 L773.5 296.3 L773.0 295.6 L772.5 295.8 L772.0 295.0 L771.5 293.7 L771.0 294.1 L770.5 293.7 L770.0 293.7 L769.5 293.7 L769.0 293.7 L768.5 293.7 L768.0 294.2 L767.5 294.7 L767.0 294.3 L766.5 294.9 L766.0 296.4 L765.5 295.7 L765.0 296.3 L764.5 295.1 L764.0 296.1 L763.5 296.0 L763.0 296.3 L762.5 295.6 L762.0 296.8 L761.5 298.6 L761.0 298.3 L760.5 298.6 L760.0 298.9 L759.5 299.4 L759.0 299.3 L758.5 297.6 L758.0 296.4 L757.5 298.8 L757.0 298.5 L756.5 299.1 L756.0 298.2 L755.5 298.1 L755.0 297.8 L754.5 296.7 L754.0 298.3 L753.5 298.1 L753.0 296.8 L752.5 298.7 L752.0 296.9 L751.5 297.8 L751.0 298.3 L750.5 298.2 L750.0 298.5 L749.5 298.6 L749.0 297.9 L748.5 296.9 L748.0 298.3 L747.5 295.3 L747.0 297.7 L746.5 298.7 L746.0 297.4 L745.5 298.3 L745.0 296.4 L744.5 298.1 L744.0 298.1 L743.5 297.8 L743.0 294.7 L742.5 296.9 L742.0 295.4 L741.5 296.2 L741.0 295.9 L740.5 296.3 L740.0 295.6 L739.5 296.5 L739.0 296.2 L738.5 296.8 L738.0 296.2 L737.5 299.7 L737.0 300.4 L736.5 298.3 L736.0 300.3 L735.5 300.4 L735.0 302.4 L734.5 303.4 L734.0 303.3 L733.5 302.9 L733.0 305.3 L732.5 303.9 L732.0 306.9 L731.5 305.1 L731.0 303.4 L730.5 305.4 L730.0 305.3 L729.5 305.2 L729.0 304.3 L728.5 304.7 L728.0 304.6 L727.5 304.1 L727.0 303.4 L726.5 302.6 L726.0 302.7 L725.5 302.3 L725.0 300.1 L724.5 299.9 L724.0 300.1 L723.5 300.3 L723.0 300.3 L722.5 298.4 L722.0 297.7 L721.5 297.4 L721.0 296.9 L720.5 296.1 L720.0 295.5 L719.5 295.3 L719.0 295.3 L718.5 294.6 L718.0 294.6 L717.5 294.7 L717.0 296.4 L716.5 295.5 L716.0 297.9 L715.5 297.7 L715.0 297.6 L714.5 298.3 L714.0 297.8 L713.5 298.8 L713.0 299.1 L712.5 300.6 L712.0 301.5 L711.5 301.3 L711.0 301.3 L710.5 301.5 L710.0 301.7 L709.5 301.2 L709.0 301.8 L708.5 300.0 L708.0 301.8 L707.5 299.9 L707.0 300.9 L706.5 302.3 L706.0 299.9 L705.5 301.3 L705.0 300.8 L704.5 299.2 L704.0 300.3 L703.5 300.3 L703.0 300.5 L702.5 299.8 L702.0 299.4 L701.5 299.7 L701.0 297.8 L700.5 298.7 L700.0 298.0 L699.5 296.6 L699.0 298.3 L698.5 298.2 L698.0 297.1 L697.5 297.8 L697.0 295.4 L696.5 295.4 L696.0 294.7 L695.5 293.7 L695.0 293.7 L694.5 293.7 L694.0 293.7 L693.5 293.7 L693.0 294.3 L692.5 294.5 L692.0 295.7 L691.5 295.2 L691.0 296.5 L690.5 296.3 L690.0 296.2 L689.5 296.6 L689.0 298.3 L688.5 296.9 L688.0 299.1 L687.5 300.8 L687.0 301.3 L686.5 297.6 L686.0 298.5 L685.5 301.6 L685.0 302.1 L684.5 298.0 L684.0 302.3 L683.5 302.7 L683.0 302.3 L682.5 301.4 L682.0 301.8 L681.5 301.9 L681.0 301.6 L680.5 299.3 L680.0 301.3 L679.5 300.4 L679.0 300.2 L678.5 297.2 L678.0 296.7 L677.5 296.9 L677.0 298.5 L676.5 298.3 L676.0 298.1 L675.5 297.2 L675.0 296.6 L674.5 295.6 L674.0 295.2 L673.5 293.9 L673.0 294.2 L672.5 294.6 L672.0 295.4 L671.5 295.7 L671.0 297.3 L670.5 296.3 L670.0 298.7 L669.5 300.0 L669.0 300.3 L668.5 300.4 L668.0 301.5 L667.5 301.0 L667.0 303.3 L666.5 303.6 L666.0 306.0 L665.5 305.8 L665.0 307.9 L664.5 306.5 L664.0 312.2 L663.5 312.3 L663.0 313.2 L662.5 313.4 L662.0 317.3 L661.5 317.2 L661.0 316.8 L660.5 309.3 L660.0 311.3 L659.5 311.7 L659.0 308.9 L658.5 310.3 L658.0 306.6 L657.5 303.2 L657.0 304.1 L656.5 303.1 L656.0 297.3 L655.5 296.3 L655.0 295.7 L654.5 293.9 L654.0 292.8 L653.5 292.8 L653.0 292.8 L652.5 292.8 L652.0 292.9 L651.5 293.1 L651.0 293.4 L650.5 293.6 L650.0 294.0 L649.5 293.7 L649.0 294.6 L648.5 294.7 L648.0 293.0 L647.5 294.6 L647.0 294.6 L646.5 294.1 L646.0 293.4 L645.5 294.6 L645.0 294.8 L644.5 296.3 L644.0 297.2 L643.5 298.1 L643.0 297.2 L642.5 299.2 L642.0 300.7 L641.5 297.4 L641.0 300.8 L640.5 300.3 L640.0 298.6 L639.5 299.2 L639.0 300.0 L638.5 299.1 L638.0 301.6 L637.5 301.1 L637.0 301.2 L636.5 297.4 L636.0 301.9 L635.5 300.6 L635.0 302.3 L634.5 300.7 L634.0 302.0 L633.5 301.9 L633.0 302.9 L632.5 302.8 L632.0 301.0 L631.5 301.7 L631.0 300.6 L630.5 302.6 L630.0 302.3 L629.5 301.7 L629.0 301.1 L628.5 300.3 L628.0 298.9 L627.5 300.1 L627.0 299.2 L626.5 300.3 L626.0 298.6 L625.5 298.5 L625.0 300.3 L624.5 297.0 L624.0 297.3 L623.5 300.0 L623.0 302.6 L622.5 302.3 L622.0 298.5 L621.5 303.8 L621.0 306.3 L620.5 306.7 L620.0 309.8 L619.5 311.4 L619.0 311.7 L618.5 306.3 L618.0 304.3 L617.5 304.3 L617.0 302.6 L616.5 297.5 L616.0 298.3 L615.5 298.4 L615.0 298.5 L614.5 296.8 L614.0 295.5 L613.5 294.4 L613.0 293.7 L612.5 293.7 L612.0 293.7 L611.5 293.7 L611.0 293.7 L610.5 293.7 L610.0 294.3 L609.5 293.8 L609.0 294.7 L608.5 295.2 L608.0 295.4 L607.5 295.9 L607.0 296.4 L606.5 295.5 L606.0 295.5 L605.5 296.3 L605.0 296.5 L604.5 296.1 L604.0 296.0 L603.5 296.6 L603.0 296.9 L602.5 297.4 L602.0 296.6 L601.5 297.9 L601.0 296.8 L600.5 296.7 L600.0 298.6 L599.5 298.3 L599.0 298.3 L598.5 298.3 L598.0 299.0 L597.5 299.3 L597.0 299.3 L596.5 298.4 L596.0 298.6 L595.5 300.3 L595.0 298.4 L594.5 298.3 L594.0 298.0 L593.5 296.3 L593.0 294.9 L592.5 299.5 L592.0 300.3 L591.5 300.4 L591.0 307.9 L590.5 304.6 L590.0 300.5 L589.5 300.3 L589.0 297.2 L588.5 294.6 L588.0 294.0 L587.5 294.8 L587.0 294.4 L586.5 294.7 L586.0 295.4 L585.5 295.3 L585.0 295.8 L584.5 297.0 L584.0 297.3 L583.5 297.7 L583.0 297.6 L582.5 299.3 L582.0 297.6 L581.5 299.6 L581.0 298.1 L580.5 297.6 L580.0 298.8 L579.5 298.9 L579.0 297.8 L578.5 298.7 L578.0 298.3 L577.5 298.0 L577.0 298.4 L576.5 298.4 L576.0 299.0 L575.5 298.6 L575.0 298.3 L574.5 299.5 L574.0 299.6 L573.5 299.3 L573.0 298.7 L572.5 299.0 L572.0 296.8 L571.5 300.7 L571.0 301.0 L570.5 302.0 L570.0 301.0 L569.5 301.5 L569.0 302.3 L568.5 302.3 L568.0 302.2 L567.5 300.7 L567.0 301.1 L566.5 301.8 L566.0 299.9 L565.5 301.5 L565.0 300.9 L564.5 300.8 L564.0 301.3 L563.5 298.9 L563.0 300.2 L562.5 299.8 L562.0 297.6 L561.5 301.3 L561.0 301.8 L560.5 301.6 L560.0 301.9 L559.5 300.9 L559.0 302.3 L558.5 302.1 L558.0 302.6 L557.5 303.4 L557.0 303.3 L556.5 302.8 L556.0 302.5 L555.5 303.9 L555.0 306.0 L554.5 303.6 L554.0 304.6 L553.5 304.3 L553.0 301.7 L552.5 301.2 L552.0 302.4 L551.5 302.3 L551.0 301.9 L550.5 301.9 L550.0 303.3 L549.5 303.3 L549.0 303.7 L548.5 302.7 L548.0 305.0 L547.5 305.7 L547.0 302.9 L546.5 299.1 L546.0 298.3 L545.5 297.5 L545.0 296.9 L544.5 294.9 L544.0 292.8 L543.5 292.8 L543.0 292.8 L542.5 293.6 L542.0 294.9 L541.5 296.1 L541.0 296.3 L540.5 296.5 L540.0 297.9 L539.5 299.4 L539.0 301.3 L538.5 301.3 L538.0 301.2 L537.5 301.6 L537.0 300.9 L536.5 301.8 L536.0 301.8 L535.5 298.8 L535.0 302.8 L534.5 301.1 L534.0 301.9 L533.5 302.3 L533.0 300.2 L532.5 301.9 L532.0 302.0 L531.5 300.9 L531.0 302.3 L530.5 300.5 L530.0 302.4 L529.5 299.0 L529.0 304.0 L528.5 301.4 L528.0 304.1 L527.5 299.1 L527.0 302.1 L526.5 300.7 L526.0 299.7 L525.5 299.3 L525.0 297.9 L524.5 297.0 L524.0 295.6 L523.5 295.3 L523.0 295.3 L522.5 294.6 L522.0 293.9 L521.5 295.2 L521.0 296.3 L520.5 296.4 L520.0 296.8 L519.5 297.3 L519.0 297.8 L518.5 298.3 L518.0 296.8 L517.5 298.6 L517.0 297.3 L516.5 299.3 L516.0 300.0 L515.5 299.4 L515.0 298.2 L514.5 300.5 L514.0 300.3 L513.5 298.6 L513.0 299.1 L512.5 300.1 L512.0 298.5 L511.5 300.3 L511.0 300.3 L510.5 299.4 L510.0 299.4 L509.5 301.8 L509.0 301.3 L508.5 301.6 L508.0 301.1 L507.5 300.9 L507.0 300.3 L506.5 300.8 L506.0 300.4 L505.5 297.5 L505.0 300.7 L504.5 300.3 L504.0 299.4 L503.5 300.4 L503.0 299.9 L502.5 299.8 L502.0 299.7 L501.5 300.1 L501.0 297.2 L500.5 299.0 L500.0 299.0 L499.5 298.9 L499.0 298.8 L498.5 299.3 L498.0 299.3 L497.5 298.1 L497.0 297.8 L496.5 299.7 L496.0 299.3 L495.5 299.3 L495.0 298.7 L494.5 297.3 L494.0 297.0 L493.5 298.3 L493.0 296.7 L492.5 297.7 L492.0 298.1 L491.5 297.9 L491.0 296.6 L490.5 296.8 L490.0 295.6 L489.5 295.0 L489.0 296.1 L488.5 296.3 L488.0 296.3 L487.5 296.4 L487.0 295.1 L486.5 296.1 L486.0 297.4 L485.5 298.3 L485.0 299.3 L484.5 298.6 L484.0 299.4 L483.5 300.5 L483.0 300.3 L482.5 300.2 L482.0 299.6 L481.5 298.2 L481.0 298.1 L480.5 297.7 L480.0 296.6 L479.5 296.3 L479.0 296.3 L478.5 296.3 L478.0 296.7 L477.5 297.6 L477.0 298.9 L476.5 299.3 L476.0 297.6 L475.5 302.6 L475.0 303.9 L474.5 304.1 L474.0 303.4 L473.5 306.4 L473.0 307.3 L472.5 300.9 L472.0 306.4 L471.5 307.6 L471.0 311.3 L470.5 312.3 L470.0 305.3 L469.5 311.5 L469.0 312.3 L468.5 308.2 L468.0 306.4 L467.5 312.2 L467.0 309.3 L466.5 312.3 L466.0 309.2 L465.5 313.4 L465.0 313.3 L464.5 310.4 L464.0 305.6 L463.5 313.3 L463.0 314.1 L462.5 302.5 L462.0 305.1 L461.5 304.3 L461.0 301.5 L460.5 298.5 L460.0 294.5 L459.5 294.6 L459.0 294.6 L458.5 294.7 L458.0 297.0 L457.5 297.4 L457.0 298.3 L456.5 297.6 L456.0 296.9 L455.5 299.6 L455.0 302.3 L454.5 302.6 L454.0 302.6 L453.5 301.8 L453.0 300.6 L452.5 302.3 L452.0 301.1 L451.5 302.6 L451.0 301.5 L450.5 301.4 L450.0 301.3 L449.5 301.1 L449.0 301.5 L448.5 299.7 L448.0 299.6 L447.5 300.3 L447.0 300.7 L446.5 299.8 L446.0 299.1 L445.5 299.1 L445.0 298.0 L444.5 298.3 L444.0 298.2 L443.5 297.7 L443.0 297.4 L442.5 298.8 L442.0 298.9 L441.5 297.6 L441.0 299.2 L440.5 299.3 L440.0 299.3 L439.5 299.5 L439.0 297.9 L438.5 299.3 L438.0 298.4 L437.5 298.4 L437.0 299.9 L436.5 298.1 L436.0 296.9 L435.5 299.8 L435.0 300.6 L434.5 300.3 L434.0 300.3 L433.5 299.3 L433.0 300.8 L432.5 301.5 L432.0 301.3 L431.5 301.4 L431.0 302.1 L430.5 301.7 L430.0 302.3 L429.5 302.9 L429.0 302.9 L428.5 302.4 L428.0 302.3 L427.5 301.7 L427.0 300.1 L426.5 301.5 L426.0 301.4 L425.5 301.3 L425.0 301.7 L424.5 300.6 L424.0 298.5 L423.5 298.4 L423.0 299.3 L422.5 298.1 L422.0 297.7 L421.5 296.3 L421.0 296.3 L420.5 295.4 L420.0 294.2 L419.5 292.4 L419.0 291.8 L418.5 291.8 L418.0 291.8 L417.5 291.8 L417.0 291.8 L416.5 291.8 L416.0 291.8 L415.5 291.8 L415.0 291.8 L414.5 291.8 L414.0 291.8 L413.5 291.8 L413.0 291.8 L412.5 291.8 L412.0 291.8 L411.5 291.8 L411.0 291.8 L410.5 291.8 L410.0 291.8 L409.5 291.8 L409.0 291.8 L408.5 291.7 L408.0 291.7 L407.5 291.7 L407.0 291.7 L406.5 291.7 L406.0 291.7 L405.5 291.7 L405.0 291.7 L404.5 291.7 L404.0 291.7 L403.5 291.7 L403.0 291.7 L402.5 291.7 L402.0 291.7 L401.5 291.7 L401.0 291.7 L400.5 291.7 L400.0 291.7 L399.5 291.7 L399.0 291.7 L398.5 291.7 L398.0 291.7 L397.5 291.7 L397.0 291.7 L396.5 291.7 L396.0 291.7 L395.5 291.7 L395.0 291.7 L394.5 291.7 L394.0 291.7 L393.5 291.7 L393.0 291.7 L392.5 291.7 L392.0 291.7 L391.5 291.7 L391.0 291.7 L390.5 291.7 L390.0 291.8 L389.5 291.8 L389.0 291.8 L388.5 291.8 L388.0 291.8 L387.5 291.8 L387.0 291.8 L386.5 291.8 L386.0 291.8 L385.5 291.8 L385.0 291.8 L384.5 291.8 L384.0 291.8 L383.5 291.8 L383.0 291.8 L382.5 291.8 L382.0 291.8 L381.5 291.8 L381.0 291.8 L380.5 292.2 L380.0 292.3 L379.5 292.8 L379.0 292.8 L378.5 292.3 L378.0 292.3 L377.5 292.1 L377.0 291.8 L376.5 291.8 L376.0 291.8 L375.5 292.1 L375.0 293.1 L374.5 294.1 L374.0 294.0 L373.5 294.6 L373.0 293.9 L372.5 295.0 L372.0 295.3 L371.5 295.9 L371.0 296.1 L370.5 296.3 L370.0 295.8 L369.5 297.0 L369.0 295.0 L368.5 297.6 L368.0 298.3 L367.5 295.4 L367.0 299.0 L366.5 299.0 L366.0 297.7 L365.5 300.3 L365.0 300.2 L364.5 302.3 L364.0 303.0 L363.5 303.2 L363.0 301.1 L362.5 302.4 L362.0 299.5 L361.5 300.5 L361.0 299.9 L360.5 300.3 L360.0 300.2 L359.5 298.4 L359.0 297.2 L358.5 295.8 L358.0 295.8 L357.5 296.3 L357.0 295.0 L356.5 296.2 L356.0 295.9 L355.5 294.7 L355.0 294.7 L354.5 295.1 L354.0 294.8 L353.5 294.2 L353.0 294.5 L352.5 294.6 L352.0 294.5 L351.5 295.2 L351.0 295.6 L350.5 296.3 L350.0 296.3 L349.5 295.7 L349.0 296.6 L348.5 296.6 L348.0 297.5 L347.5 298.3 L347.0 299.3 L346.5 299.5 L346.0 299.0 L345.5 300.3 L345.0 300.5 L344.5 300.3 L344.0 297.7 L343.5 299.0 L343.0 299.6 L342.5 301.3 L342.0 300.8 L341.5 299.1 L341.0 299.3 L340.5 298.9 L340.0 296.1 L339.5 296.3 L339.0 295.5 L338.5 295.8 L338.0 294.2 L337.5 293.0 L337.0 293.7 L336.5 293.7 L336.0 292.9 L335.5 294.6 L335.0 295.3 L334.5 294.7 L334.0 295.2 L333.5 296.9 L333.0 298.3 L332.5 297.5 L332.0 300.5 L331.5 301.3 L331.0 301.5 L330.5 302.3 L330.0 304.1 L329.5 302.7 L329.0 296.5 L328.5 297.3 L328.0 295.6 L327.5 293.6 L327.0 292.8 L326.5 292.8 L326.0 292.8 L325.5 292.8 L325.0 292.8 L324.5 292.8 L324.0 292.8 L323.5 292.8 L323.0 292.8 L322.5 292.8 L322.0 293.1 L321.5 293.7 L321.0 294.3 L320.5 294.4 L320.0 294.9 L319.5 295.6 L319.0 295.3 L318.5 296.3 L318.0 295.8 L317.5 295.5 L317.0 296.9 L316.5 296.0 L316.0 297.1 L315.5 296.5 L315.0 296.8 L314.5 298.4 L314.0 298.3 L313.5 297.3 L313.0 297.4 L312.5 297.8 L312.0 298.9 L311.5 298.4 L311.0 296.9 L310.5 298.6 L310.0 300.0 L309.5 300.5 L309.0 300.3 L308.5 299.9 L308.0 299.9 L307.5 300.7 L307.0 301.0 L306.5 299.1 L306.0 301.4 L305.5 299.5 L305.0 300.1 L304.5 301.3 L304.0 297.8 L303.5 300.8 L303.0 299.0 L302.5 300.4 L302.0 298.5 L301.5 300.3 L301.0 300.5 L300.5 298.7 L300.0 299.3 L299.5 298.1 L299.0 298.3 L298.5 298.0 L298.0 298.7 L297.5 298.3 L297.0 299.6 L296.5 300.6 L296.0 300.3 L295.5 299.6 L295.0 301.5 L294.5 302.3 L294.0 303.3 L293.5 302.7 L293.0 304.0 L292.5 310.1 L292.0 309.8 L291.5 310.6 L291.0 313.4 L290.5 313.3 L290.0 312.9 L289.5 314.9 L289.0 317.3 L288.5 316.3 L288.0 316.5 L287.5 313.9 L287.0 315.3 L286.5 313.0 L286.0 313.3 L285.5 311.9 L285.0 312.3 L284.5 305.7 L284.0 305.3 L283.5 307.9 L283.0 302.3 L282.5 302.3 L282.0 301.7 L281.5 299.0 L281.0 298.3 L280.5 297.6 L280.0 298.6 L279.5 296.7 L279.0 297.6 L278.5 297.3 L278.0 296.6 L277.5 296.6 L277.0 295.1 L276.5 296.3 L276.0 296.3 L275.5 295.5 L275.0 296.7 L274.5 297.1 L274.0 297.6 L273.5 297.7 L273.0 298.1 L272.5 298.3 L272.0 297.2 L271.5 297.9 L271.0 298.7 L270.5 299.3 L270.0 298.9 L269.5 298.6 L269.0 299.4 L268.5 300.8 L268.0 300.4 L267.5 300.3 L267.0 299.8 L266.5 299.7 L266.0 296.8 L265.5 299.3 L265.0 299.7 L264.5 298.3 L264.0 298.5 L263.5 299.6 L263.0 299.3 L262.5 298.4 L262.0 299.4 L261.5 298.2 L261.0 297.5 L260.5 298.7 L260.0 296.8 L259.5 297.0 L259.0 298.3 L258.5 297.2 L258.0 296.8 L257.5 298.2 L257.0 298.2 L256.5 297.5 L256.0 297.3 L255.5 298.3 L255.0 298.1 L254.5 297.8 L254.0 295.0 L253.5 296.5 L253.0 294.9 L252.5 293.7 L252.0 295.3 L251.5 294.9 L251.0 294.5 L250.5 293.8 L250.0 293.3 L249.5 293.3 L249.0 293.5 L248.5 295.0 L248.0 296.1 L247.5 296.3 L247.0 296.5 L246.5 297.4 L246.0 300.3 L245.5 299.8 L245.0 298.3 L244.5 299.9 L244.0 297.0 L243.5 299.0 L243.0 299.2 L242.5 299.0 L242.0 299.3 L241.5 299.2 L241.0 299.2 L240.5 298.1 L240.0 298.4 L239.5 297.0 L239.0 298.6 L238.5 298.3 L238.0 298.0 L237.5 295.5 L237.0 296.5 L236.5 297.2 L236.0 296.3 L235.5 296.4 L235.0 296.3 L234.5 296.5 L234.0 295.9 L233.5 295.3 L233.0 294.0 L232.5 294.0 L232.0 294.3 L231.5 293.9 L231.0 293.6 L230.5 292.8 L230.0 292.8 L229.5 292.8 L229.0 292.4 L228.5 291.9 L228.0 291.8 L227.5 291.8 L227.0 291.8 L226.5 291.8 L226.0 291.8 L225.5 291.8 L225.0 291.8 L224.5 291.9 L224.0 291.9 L223.5 291.9 L223.0 291.9 L222.5 291.9 L222.0 291.9 L221.5 291.9 L221.0 291.9 L220.5 292.0 L220.0 292.3 L219.5 292.6 L219.0 292.9 L218.5 293.2 L218.0 293.3 L217.5 293.3 L217.0 293.3 L216.5 293.3 L216.0 293.6 L215.5 294.4 L215.0 293.7 L214.5 294.9 L214.0 295.3 L213.5 295.3 L213.0 295.1 L212.5 295.8 L212.0 296.3 L211.5 297.3 L211.0 297.3 L210.5 297.3 L210.0 296.7 L209.5 297.3 L209.0 297.4 L208.5 297.0 L208.0 298.1 L207.5 298.3 L207.0 295.3 L206.5 298.2 L206.0 297.4 L205.5 298.3 L205.0 298.2 L204.5 298.1 L204.0 295.3 L203.5 298.3 L203.0 297.2 L202.5 300.0 L202.0 300.3 L201.5 300.7 L201.0 302.1 L200.5 304.3 L200.0 307.7 L199.5 313.2 L199.0 315.3 L198.5 317.1 L198.0 325.5 L197.5 328.3 L197.0 327.3 L196.5 332.0 L196.0 335.0 L195.5 336.3 L195.0 335.3 L194.5 341.5 L194.0 344.3 L193.5 346.0 L193.0 344.2 L192.5 338.5 L192.0 338.3 L191.5 339.8 L191.0 330.7 L190.5 331.3 L190.0 323.4 L189.5 324.3 L189.0 318.1 L188.5 323.3 L188.0 320.8 L187.5 312.3 L187.0 314.3 L186.5 310.3 L186.0 308.5 L185.5 304.4 L185.0 304.3 L184.5 303.4 L184.0 296.5 L183.5 295.4 L183.0 295.3 L182.5 295.4 L182.0 296.7 L181.5 298.2 L181.0 298.3 L180.5 298.4 L180.0 298.6 L179.5 301.2 L179.0 301.3 L178.5 301.7 L178.0 301.8 L177.5 302.2 L177.0 302.0 L176.5 302.7 L176.0 302.3 L175.5 300.2 L175.0 301.2 L174.5 303.0 L174.0 302.5 L173.5 304.3 L173.0 302.0 L172.5 304.9 L172.0 303.4 L171.5 300.9 L171.0 303.5 L170.5 303.3 L170.0 302.8 L169.5 299.1 L169.0 304.2 L168.5 302.5 L168.0 305.3 L167.5 304.8 L167.0 304.8 L166.5 306.8 L166.0 306.3 L165.5 306.5 L165.0 303.7 L164.5 302.4 L164.0 304.3 L163.5 301.9 L163.0 303.5 L162.5 305.0 L162.0 305.3 L161.5 304.7 L161.0 304.4 L160.5 306.3 L160.0 306.9 L159.5 300.4 L159.0 299.3 L158.5 299.2 L158.0 297.7 L157.5 295.5 L157.0 295.3 L156.5 295.3 L156.0 296.8 L155.5 298.6 L155.0 298.3 L154.5 298.3 L154.0 300.3 L153.5 303.7 L153.0 304.3 L152.5 305.2 L152.0 304.9 L151.5 309.3 L151.0 308.7 L150.5 311.4 L150.0 314.3 L149.5 307.3 L149.0 312.8 L148.5 315.4 L148.0 314.3 L147.5 314.8 L147.0 312.6 L146.5 313.0 L146.0 312.3 L145.5 313.2 L145.0 311.3 L144.5 307.8 L144.0 309.3 L143.5 309.3 L143.0 307.2 L142.5 305.8 L142.0 306.3 L141.5 307.0 L141.0 305.4 L140.5 303.4 L140.0 297.8 L139.5 301.4 L139.0 301.3 L138.5 297.0 L138.0 299.5 L137.5 297.7 L137.0 296.9 L136.5 298.3 L136.0 301.9 L135.5 307.1 L135.0 308.3 L134.5 310.8 L134.0 314.0 L133.5 318.3 L133.0 318.2 L132.5 313.3 L132.0 315.3 L131.5 316.4 L131.0 313.2 L130.5 307.6 L130.0 312.3 L129.5 313.2 L129.0 316.6 L128.5 316.3 L128.0 317.3 L127.5 319.8 L127.0 320.3 L126.5 321.4 L126.0 316.5 L125.5 309.9 L125.0 303.6 L124.5 304.3 L124.0 299.8 L123.5 295.7 L123.0 295.3 L122.5 295.7 L122.0 297.5 L121.5 299.3 L121.0 298.0 L120.5 297.5 L120.0 303.0 L119.5 303.3 L119.0 306.3 L118.5 330.3 L118.0 329.5 L117.5 348.4 L117.0 363.3 L116.5 356.7 L116.0 341.0 L115.5 340.3 L115.0 331.2 L114.5 319.6 L114.0 314.3 L113.5 314.3 L113.0 311.0 L112.5 305.3 L112.0 302.0 L111.5 304.3 L111.0 304.5 L110.5 301.3 L110.0 298.3 L109.5 299.8 L109.0 298.8 L108.5 297.5 L108.0 293.7 L107.5 292.3 L107.0 292.3 L106.5 292.3 L106.0 292.2 L105.5 292.0 L105.0 291.8 L104.5 291.7 L104.0 291.7 L103.5 291.7 L103.0 291.7 L102.5 291.7 L102.0 291.7 L101.5 291.7 L101.0 291.7 L100.5 291.7 L100.0 291.7 L99.5 291.7 L99.0 291.7 L98.5 291.7 L98.0 291.7 L97.5 291.7 L97.0 291.7 L96.5 291.7 L96.0 291.7 L95.5 291.7 L95.0 291.7 L94.5 291.7 L94.0 291.7 L93.5 291.7 L93.0 291.7 L92.5 291.7 L92.0 291.7 L91.5 291.7 L91.0 291.7 L90.5 291.7 L90.0 291.7 L89.5 291.7 L89.0 291.7 L88.5 291.7 L88.0 291.7 L87.5 291.7 L87.0 291.7 L86.5 291.7 L86.0 291.7 L85.5 291.7 L85.0 291.7 L84.5 291.7 L84.0 291.7 L83.5 291.6 L83.0 291.6 L82.5 291.6 L82.0 291.6 L81.5 291.6 L81.0 291.6 L80.5 291.6 L80.0 291.6 L79.5 291.6 L79.0 291.6 L78.5 291.6 L78.0 291.6 L77.5 291.6 L77.0 291.6 L76.5 291.6 L76.0 291.6 L75.5 291.6 L75.0 291.6 L74.5 291.6 L74.0 291.6 L73.5 291.6 L73.0 291.6 L72.5 291.6 L72.0 291.6 L71.5 291.6 L71.0 291.6 L70.5 291.6 L70.0 291.6 L69.5 291.6 L69.0 291.6 L68.5 291.6 L68.0 291.6 L67.5 291.6 L67.0 291.6 L66.5 291.6 L66.0 291.6 L65.5 291.6 L65.0 291.6 L64.5 291.6 L64.0 291.6 L63.5 291.6 L63.0 291.6 L62.5 291.6 L62.0 291.6 L61.5 291.6 L61.0 291.6 L60.5 291.6 L60.0 291.6 L59.5 291.6 L59.0 291.6 L58.5 291.6 L58.0 291.6 L57.5 291.6 L57.0 291.6 L56.5 291.6 L56.0 291.6 L55.5 291.6 L55.0 291.6 L54.5 291.6 L54.0 291.6 L53.5 291.6 L53.0 291.6 L52.5 291.6 L52.0 291.6 L51.5 291.6 L51.0 291.6 L50.5 291.6 L50.0 291.6 L49.5 291.7 L49.0 291.7 L48.5 291.7 L48.0 291.7 L47.5 291.7 L47.0 291.7 L46.5 291.7 L46.0 291.7 L45.5 291.7 L45.0 291.7 L44.5 291.7 L44.0 291.7 L43.5 291.7 L43.0 291.7 L42.5 291.7 L42.0 291.7 L41.5 291.7 L41.0 291.7 L40.5 291.7 L40.0 291.8 L39.5 291.8 L39.0 291.8 L38.5 291.8 L38.0 291.8 L37.5 291.8 L37.0 291.8 L36.5 291.8 L36.0 291.8 L35.5 291.8 L35.0 291.8 L34.5 291.8 L34.0 291.8 L33.5 291.8 L33.0 291.8 L32.5 291.8 L32.0 291.8 L31.5 291.8 L31.0 291.8 L30.5 291.8 L30.0 291.8 L29.5 291.8 L29.0 291.8 L28.5 291.8 L28.0 291.8 L27.5 291.8 L27.0 291.8 L26.5 291.8 L26.0 291.8 L25.5 291.8 L25.0 291.8 L24.5 291.9 L24.0 292.1 L23.5 292.3 L23.0 292.5 L22.5 292.7 L22.0 292.8 L21.5 292.8 L21.0 292.8 L20.5 292.8 L20.0 292.8 L19.5 292.8 L19.0 292.8 L18.5 292.8 L18.0 292.8 L17.5 292.8 L17.0 292.8 L16.5 292.8 L16.0 292.8 L15.5 292.8 L15.0 292.8 L14.5 292.8 L14.0 292.9 L13.5 293.0 L13.0 293.1 L12.5 293.1 L12.0 293.2 L11.5 293.3 L11.0 293.3 L10.5 293.3 L10.0 293.3 L9.5 293.3 L9.0 293.3 L8.5 293.4 L8.0 293.8 L7.5 294.0 L7.0 294.3 L6.5 293.1 L6.0 294.7 L5.5 293.9 L5.0 294.8 L4.5 294.9 L4.0 294.7 L3.5 294.7 L3.0 293.3 L2.5 294.1 L2.0 294.3 L1.5 294.1 L1.0 293.7 L0.5 293.8 L0.0 294.3Z" fill="#74dba6"/><rect x="0" y="0" width="2.600" height="580" fill="#4a212d"/></svg>
<svg style="left:432px;top:128px;" width="10" height="11" viewBox="0 0 10 11"><path d="M0 0h9.500v6.500L4.750 11 0 6.500z" fill="#4f95dc"/></svg>
<svg style="left:445px;top:140px;" width="11" height="11" viewBox="0 0 11 11"><rect width="11" height="10" fill="#4a4a4a"/><path d="M1.500 9.500l8-8v8z" fill="#9a9a9a"/></svg>
<svg style="left:1365px;top:140px;" width="11" height="11" viewBox="0 0 11 11"><rect width="11" height="10" fill="#4a4a4a"/><path d="M1.500 1.500l8 8h-8z" fill="#9a9a9a"/></svg>
<div style="left:864px;top:150.6px;width:97px;height:20px;background:#2c2c2c;"></div>
<div style="left:864px;top:150.6px;width:7px;height:20px;background:#5e5e5e;"></div>
<svg style="left:872px;top:153.6px;" width="14" height="12" viewBox="0 0 14 12"><path d="M0 12c6-1 11-4 13-12v12z" fill="#8e8e8e"/></svg>
<svg style="left:889px;top:153.6px;" width="15" height="15" viewBox="0 0 15 15"><circle cx="7.500" cy="7.500" r="7" fill="#9c9c9c"/><circle cx="7.500" cy="7.500" r="1.400" fill="#111"/><path d="M7.500 7.500V1.500" stroke="#111" stroke-width="1.400"/></svg>
<span style="left:908px;top:154.1px;font-size:9px;line-height:13px;color:#7395cc;font-weight:bold;letter-spacing:-0.152px;">+0 dB</span>
<div style="left:947px;top:152.6px;width:1px;height:16px;background:#4a3030;"></div>
<svg style="left:951px;top:156.5px;" width="8" height="8" viewBox="0 0 8 8"><path d="M5 0l3 3-1.600.4-1.600 1.600-.2 2L1.600 4.400 3.600 4 5.200 2.400z" fill="#8fc0f0"/><path d="M2.800 5.200L0 8" stroke="#8fc0f0" stroke-width="1.200"/></svg>
<div style="left:1386px;top:139px;width:57px;height:579px;background:#252525;"></div>
<div style="left:1442px;top:139px;width:1px;height:579px;background:#2e2e2e;"></div>
<div style="left:1386px;top:139px;width:57px;height:1px;background:#1c1c1c;"></div>
<span style="left:1392px;top:163.3px;font-size:9.7px;line-height:14px;color:#b4b4b4;-webkit-text-stroke:.3px #b4b4b4;">-1</span>
<span style="left:1392px;top:680.3px;font-size:9.7px;line-height:14px;color:#b4b4b4;-webkit-text-stroke:.3px #b4b4b4;">-1</span>
<span style="left:1392px;top:191.4px;font-size:9.7px;line-height:14px;color:#b4b4b4;-webkit-text-stroke:.3px #b4b4b4;">-2</span>
<span style="left:1392px;top:652.2px;font-size:9.7px;line-height:14px;color:#b4b4b4;-webkit-text-stroke:.3px #b4b4b4;">-2</span>
<span style="left:1392px;top:216.5px;font-size:9.7px;line-height:14px;color:#b4b4b4;-webkit-text-stroke:.3px #b4b4b4;">-3</span>
<span style="left:1392px;top:627.1px;font-size:9.7px;line-height:14px;color:#b4b4b4;-webkit-text-stroke:.3px #b4b4b4;">-3</span>
<span style="left:1392px;top:238.8px;font-size:9.7px;line-height:14px;color:#b4b4b4;-webkit-text-stroke:.3px #b4b4b4;">-4</span>
<span style="left:1392px;top:604.8px;font-size:9.7px;line-height:14px;color:#b4b4b4;-webkit-text-stroke:.3px #b4b4b4;">-4</span>
<span style="left:1392px;top:258.7px;font-size:9.7px;line-height:14px;color:#b4b4b4;-webkit-text-stroke:.3px #b4b4b4;">-5</span>
<span style="left:1392px;top:584.9px;font-size:9.7px;line-height:14px;color:#b4b4b4;-webkit-text-stroke:.3px #b4b4b4;">-5</span>
<span style="left:1392px;top:292.3px;font-size:9.7px;line-height:14px;color:#b4b4b4;-webkit-text-stroke:.3px #b4b4b4;">-7</span>
<span style="left:1392px;top:551.3px;font-size:9.7px;line-height:14px;color:#b4b4b4;-webkit-text-stroke:.3px #b4b4b4;">-7</span>
<span style="left:1392px;top:318.9px;font-size:9.7px;line-height:14px;color:#b4b4b4;-webkit-text-stroke:.3px #b4b4b4;">-9</span>
<span style="left:1392px;top:524.7px;font-size:9.7px;line-height:14px;color:#b4b4b4;-webkit-text-stroke:.3px #b4b4b4;">-9</span>
<span style="left:1392px;top:349.0px;font-size:9.7px;line-height:14px;color:#b4b4b4;-webkit-text-stroke:.3px #b4b4b4;">-12</span>
<span style="left:1392px;top:494.6px;font-size:9.7px;line-height:14px;color:#b4b4b4;-webkit-text-stroke:.3px #b4b4b4;">-12</span>
<span style="left:1392px;top:370.2px;font-size:9.7px;line-height:14px;color:#b4b4b4;-webkit-text-stroke:.3px #b4b4b4;">-15</span>
<span style="left:1392px;top:473.4px;font-size:9.7px;line-height:14px;color:#b4b4b4;-webkit-text-stroke:.3px #b4b4b4;">-15</span>
<span style="left:1392px;top:385.3px;font-size:9.7px;line-height:14px;color:#b4b4b4;-webkit-text-stroke:.3px #b4b4b4;">-18</span>
<span style="left:1392px;top:458.3px;font-size:9.7px;line-height:14px;color:#b4b4b4;-webkit-text-stroke:.3px #b4b4b4;">-18</span>
<span style="left:1392px;top:396.0px;font-size:9.7px;line-height:14px;color:#b4b4b4;-webkit-text-stroke:.3px #b4b4b4;">-21</span>
<span style="left:1392px;top:447.6px;font-size:9.7px;line-height:14px;color:#b4b4b4;-webkit-text-stroke:.3px #b4b4b4;">-21</span>
<span style="left:1392px;top:408.8px;font-size:9.7px;line-height:14px;color:#b4b4b4;-webkit-text-stroke:.3px #b4b4b4;">-27</span>
<span style="left:1392px;top:434.8px;font-size:9.7px;line-height:14px;color:#b4b4b4;-webkit-text-stroke:.3px #b4b4b4;">-27</span>
<svg style="left:1386px;top:138px;" width="6" height="580" viewBox="0 0 6 580"><rect x="0" y="7.9" width="1.800" height="1.200" fill="#6e6e6e"/><rect x="0" y="571.5" width="1.800" height="1.200" fill="#6e6e6e"/><rect x="0" y="15.9" width="1.800" height="1.200" fill="#6e6e6e"/><rect x="0" y="563.5" width="1.800" height="1.200" fill="#6e6e6e"/><rect x="0" y="23.7" width="1.800" height="1.200" fill="#6e6e6e"/><rect x="0" y="555.7" width="1.800" height="1.200" fill="#6e6e6e"/><rect x="0" y="31.2" width="1.800" height="1.200" fill="#6e6e6e"/><rect x="0" y="548.2" width="1.800" height="1.200" fill="#6e6e6e"/><rect x="0" y="38.6" width="1.800" height="1.200" fill="#6e6e6e"/><rect x="0" y="540.8" width="1.800" height="1.200" fill="#6e6e6e"/><rect x="0" y="45.7" width="1.800" height="1.200" fill="#6e6e6e"/><rect x="0" y="533.7" width="1.800" height="1.200" fill="#6e6e6e"/><rect x="0" y="52.6" width="1.800" height="1.200" fill="#6e6e6e"/><rect x="0" y="526.8" width="1.800" height="1.200" fill="#6e6e6e"/><rect x="0" y="59.3" width="1.800" height="1.200" fill="#6e6e6e"/><rect x="0" y="520.1" width="1.800" height="1.200" fill="#6e6e6e"/><rect x="0" y="65.9" width="1.800" height="1.200" fill="#6e6e6e"/><rect x="0" y="513.5" width="1.800" height="1.200" fill="#6e6e6e"/><rect x="0" y="72.2" width="1.800" height="1.200" fill="#6e6e6e"/><rect x="0" y="507.2" width="1.800" height="1.200" fill="#6e6e6e"/><rect x="0" y="78.4" width="1.800" height="1.200" fill="#6e6e6e"/><rect x="0" y="501.0" width="1.800" height="1.200" fill="#6e6e6e"/><rect x="0" y="84.4" width="1.800" height="1.200" fill="#6e6e6e"/><rect x="0" y="495.0" width="1.800" height="1.200" fill="#6e6e6e"/><rect x="0" y="90.2" width="1.800" height="1.200" fill="#6e6e6e"/><rect x="0" y="489.2" width="1.800" height="1.200" fill="#6e6e6e"/><rect x="0" y="95.9" width="1.800" height="1.200" fill="#6e6e6e"/><rect x="0" y="483.5" width="1.800" height="1.200" fill="#6e6e6e"/><rect x="0" y="101.4" width="1.800" height="1.200" fill="#6e6e6e"/><rect x="0" y="478.0" width="1.800" height="1.200" fill="#6e6e6e"/><rect x="0" y="106.7" width="1.800" height="1.200" fill="#6e6e6e"/><rect x="0" y="472.7" width="1.800" height="1.200" fill="#6e6e6e"/><rect x="0" y="111.9" width="1.800" height="1.200" fill="#6e6e6e"/><rect x="0" y="467.5" width="1.800" height="1.200" fill="#6e6e6e"/><rect x="0" y="117.0" width="1.800" height="1.200" fill="#6e6e6e"/><rect x="0" y="462.4" width="1.800" height="1.200" fill="#6e6e6e"/><rect x="0" y="121.9" width="1.800" height="1.200" fill="#6e6e6e"/><rect x="0" y="457.5" width="1.800" height="1.200" fill="#6e6e6e"/><rect x="0" y="126.6" width="1.800" height="1.200" fill="#6e6e6e"/><rect x="0" y="452.8" width="1.800" height="1.200" fill="#6e6e6e"/><rect x="0" y="131.2" width="1.800" height="1.200" fill="#6e6e6e"/><rect x="0" y="448.2" width="1.800" height="1.200" fill="#6e6e6e"/><rect x="0" y="135.7" width="1.800" height="1.200" fill="#6e6e6e"/><rect x="0" y="443.7" width="1.800" height="1.200" fill="#6e6e6e"/><rect x="0" y="140.1" width="1.800" height="1.200" fill="#6e6e6e"/><rect x="0" y="439.3" width="1.800" height="1.200" fill="#6e6e6e"/><rect x="0" y="144.4" width="1.800" height="1.200" fill="#6e6e6e"/><rect x="0" y="435.0" width="1.800" height="1.200" fill="#6e6e6e"/><rect x="0" y="152.5" width="1.800" height="1.200" fill="#6e6e6e"/><rect x="0" y="426.9" width="1.800" height="1.200" fill="#6e6e6e"/><rect x="0" y="160.2" width="1.800" height="1.200" fill="#6e6e6e"/><rect x="0" y="419.2" width="1.800" height="1.200" fill="#6e6e6e"/><rect x="0" y="167.4" width="1.800" height="1.200" fill="#6e6e6e"/><rect x="0" y="412.0" width="1.800" height="1.200" fill="#6e6e6e"/><rect x="0" y="174.2" width="1.800" height="1.200" fill="#6e6e6e"/><rect x="0" y="405.2" width="1.800" height="1.200" fill="#6e6e6e"/><rect x="0" y="180.7" width="1.800" height="1.200" fill="#6e6e6e"/><rect x="0" y="398.7" width="1.800" height="1.200" fill="#6e6e6e"/><rect x="0" y="186.8" width="1.800" height="1.200" fill="#6e6e6e"/><rect x="0" y="392.6" width="1.800" height="1.200" fill="#6e6e6e"/><rect x="0" y="192.6" width="1.800" height="1.200" fill="#6e6e6e"/><rect x="0" y="386.8" width="1.800" height="1.200" fill="#6e6e6e"/><rect x="0" y="198.0" width="1.800" height="1.200" fill="#6e6e6e"/><rect x="0" y="381.4" width="1.800" height="1.200" fill="#6e6e6e"/><rect x="0" y="203.1" width="1.800" height="1.200" fill="#6e6e6e"/><rect x="0" y="376.3" width="1.800" height="1.200" fill="#6e6e6e"/><rect x="0" y="208.0" width="1.800" height="1.200" fill="#6e6e6e"/><rect x="0" y="371.4" width="1.800" height="1.200" fill="#6e6e6e"/><rect x="0" y="212.5" width="1.800" height="1.200" fill="#6e6e6e"/><rect x="0" y="366.9" width="1.800" height="1.200" fill="#6e6e6e"/><rect x="0" y="216.9" width="1.800" height="1.200" fill="#6e6e6e"/><rect x="0" y="362.5" width="1.800" height="1.200" fill="#6e6e6e"/><rect x="0" y="224.8" width="1.800" height="1.200" fill="#6e6e6e"/><rect x="0" y="354.6" width="1.800" height="1.200" fill="#6e6e6e"/><rect x="0" y="231.8" width="1.800" height="1.200" fill="#6e6e6e"/><rect x="0" y="347.6" width="1.800" height="1.200" fill="#6e6e6e"/><rect x="0" y="238.1" width="1.800" height="1.200" fill="#6e6e6e"/><rect x="0" y="341.3" width="1.800" height="1.200" fill="#6e6e6e"/><rect x="0" y="243.7" width="1.800" height="1.200" fill="#6e6e6e"/><rect x="0" y="335.7" width="1.800" height="1.200" fill="#6e6e6e"/><rect x="0" y="248.7" width="1.800" height="1.200" fill="#6e6e6e"/><rect x="0" y="330.7" width="1.800" height="1.200" fill="#6e6e6e"/><rect x="0" y="253.2" width="1.800" height="1.200" fill="#6e6e6e"/><rect x="0" y="326.2" width="1.800" height="1.200" fill="#6e6e6e"/><rect x="0" y="257.2" width="1.800" height="1.200" fill="#6e6e6e"/><rect x="0" y="322.2" width="1.800" height="1.200" fill="#6e6e6e"/><rect x="0" y="260.7" width="1.800" height="1.200" fill="#6e6e6e"/><rect x="0" y="318.7" width="1.800" height="1.200" fill="#6e6e6e"/><rect x="0" y="263.9" width="1.800" height="1.200" fill="#6e6e6e"/><rect x="0" y="315.5" width="1.800" height="1.200" fill="#6e6e6e"/><rect x="0" y="266.7" width="1.800" height="1.200" fill="#6e6e6e"/><rect x="0" y="312.7" width="1.800" height="1.200" fill="#6e6e6e"/><rect x="0" y="269.2" width="1.800" height="1.200" fill="#6e6e6e"/><rect x="0" y="310.2" width="1.800" height="1.200" fill="#6e6e6e"/><rect x="0" y="271.4" width="1.800" height="1.200" fill="#6e6e6e"/><rect x="0" y="308.0" width="1.800" height="1.200" fill="#6e6e6e"/><rect x="0" y="273.4" width="1.800" height="1.200" fill="#6e6e6e"/><rect x="0" y="306.0" width="1.800" height="1.200" fill="#6e6e6e"/><rect x="0" y="275.2" width="1.800" height="1.200" fill="#6e6e6e"/><rect x="0" y="304.2" width="1.800" height="1.200" fill="#6e6e6e"/><rect x="0" y="276.7" width="1.800" height="1.200" fill="#6e6e6e"/><rect x="0" y="302.7" width="1.800" height="1.200" fill="#6e6e6e"/><rect x="0" y="280.5" width="1.800" height="1.200" fill="#6e6e6e"/><rect x="0" y="298.9" width="1.800" height="1.200" fill="#6e6e6e"/><rect x="0" y="283.2" width="1.800" height="1.200" fill="#6e6e6e"/><rect x="0" y="296.2" width="1.800" height="1.200" fill="#6e6e6e"/><rect x="0" y="285.1" width="1.800" height="1.200" fill="#6e6e6e"/><rect x="0" y="294.3" width="1.800" height="1.200" fill="#6e6e6e"/><rect x="0" y="286.8" width="1.800" height="1.200" fill="#6e6e6e"/><rect x="0" y="292.6" width="1.800" height="1.200" fill="#6e6e6e"/><rect x="0" y="288.2" width="1.800" height="1.200" fill="#6e6e6e"/><rect x="0" y="291.2" width="1.800" height="1.200" fill="#6e6e6e"/><rect x="0" y="289.1" width="1.800" height="1.200" fill="#6e6e6e"/><rect x="0" y="290.3" width="1.800" height="1.200" fill="#6e6e6e"/><rect x="0" y="31.1" width="3.500" height="1.400" fill="#b0b0b0"/><rect x="0" y="548.1" width="3.500" height="1.400" fill="#b0b0b0"/><rect x="0" y="59.2" width="3.500" height="1.400" fill="#b0b0b0"/><rect x="0" y="520.0" width="3.500" height="1.400" fill="#b0b0b0"/><rect x="0" y="84.3" width="3.500" height="1.400" fill="#b0b0b0"/><rect x="0" y="494.9" width="3.500" height="1.400" fill="#b0b0b0"/><rect x="0" y="106.6" width="3.500" height="1.400" fill="#b0b0b0"/><rect x="0" y="472.6" width="3.500" height="1.400" fill="#b0b0b0"/><rect x="0" y="126.5" width="3.500" height="1.400" fill="#b0b0b0"/><rect x="0" y="452.7" width="3.500" height="1.400" fill="#b0b0b0"/><rect x="0" y="160.1" width="3.500" height="1.400" fill="#b0b0b0"/><rect x="0" y="419.1" width="3.500" height="1.400" fill="#b0b0b0"/><rect x="0" y="186.7" width="3.500" height="1.400" fill="#b0b0b0"/><rect x="0" y="392.5" width="3.500" height="1.400" fill="#b0b0b0"/><rect x="0" y="216.8" width="3.500" height="1.400" fill="#b0b0b0"/><rect x="0" y="362.4" width="3.500" height="1.400" fill="#b0b0b0"/><rect x="0" y="238.0" width="3.500" height="1.400" fill="#b0b0b0"/><rect x="0" y="341.2" width="3.500" height="1.400" fill="#b0b0b0"/><rect x="0" y="253.1" width="3.500" height="1.400" fill="#b0b0b0"/><rect x="0" y="326.1" width="3.500" height="1.400" fill="#b0b0b0"/><rect x="0" y="263.8" width="3.500" height="1.400" fill="#b0b0b0"/><rect x="0" y="315.4" width="3.500" height="1.400" fill="#b0b0b0"/><rect x="0" y="276.6" width="3.500" height="1.400" fill="#b0b0b0"/><rect x="0" y="302.6" width="3.500" height="1.400" fill="#b0b0b0"/><rect x="0" y="289.6" width="3.500" height="1.400" fill="#b0b0b0"/></svg>
<span style="left:1392px;top:422.3px;font-size:9.5px;line-height:13px;color:#b4b4b4;-webkit-text-stroke:.3px #b4b4b4;">-∞</span>
<span style="left:1391.5px;top:139.0px;font-size:9.5px;line-height:13px;color:#b4b4b4;letter-spacing:-0.560px;-webkit-text-stroke:.3px #b4b4b4;">dB</span>
<div style="left:436px;top:718px;width:950px;height:8px;background:#1b1b1b;"></div>
<div style="left:930px;top:721px;width:18px;height:3px;background:#484848;border-radius:1px;"></div>
<div style="left:1386px;top:718px;width:57px;height:8px;background:#202020;"></div>
<div style="left:1386px;top:717px;width:3px;height:2px;background:#a0a0a0;"></div>
<div style="left:1425px;top:721px;width:5px;height:2px;background:#bdbdbd;"></div>
<div style="left:431px;top:726px;width:1016px;height:1px;background:#1a1a1a;"></div>
<span style="left:439px;top:732.5px;font-size:13.5px;line-height:19px;color:#3f86cf;letter-spacing:0.807px;">0:00.000</span>
<svg style="left:771.3px;top:737px;" width="8" height="8" viewBox="0 0 8 8"><rect width="7.500" height="7.500" fill="#5c5c5c"/></svg>
<svg style="left:794.8px;top:736px;" width="9" height="10" viewBox="0 0 9 10"><path d="M.5 .700l8 4.300-8 4.300z" fill="#dedede"/></svg>
<svg style="left:819.0px;top:737px;" width="7" height="8" viewBox="0 0 7 8"><rect width="2.500" height="8" fill="#5c5c5c"/><rect x="4.500" width="2.500" height="8" fill="#5c5c5c"/></svg>
<svg style="left:841px;top:736.5px;" width="10" height="9" viewBox="0 0 10 9"><rect y=".5" width="2" height="8" fill="#dedede"/><path d="M9.500 .5v8L2.500 4.500z" fill="#dedede"/></svg>
<svg style="left:864.0px;top:737px;" width="13" height="8" viewBox="0 0 13 8"><path d="M6.500 .5v7L0 4zM13 .5v7L6.500 4z" fill="#dedede"/></svg>
<svg style="left:886.3px;top:737px;" width="13" height="8" viewBox="0 0 13 8"><path d="M0 .5v7l6.500-3.500zM6.500 .5v7L13 4z" fill="#dedede"/></svg>
<svg style="left:912px;top:736.5px;" width="10" height="9" viewBox="0 0 10 9"><rect x="8" y=".5" width="2" height="8" fill="#dedede"/><path d="M.5 .5v8l7-4z" fill="#dedede"/></svg>
<svg style="left:935.5px;top:736.5px;" width="9" height="9" viewBox="0 0 9 9"><circle cx="4.500" cy="4.500" r="3.700" fill="#c2363e"/></svg>
<svg style="left:957.3px;top:736px;" width="13" height="10" viewBox="0 0 13 10"><path d="M1 4v5h11V4" fill="none" stroke="#9fd03c" stroke-width="1.700"/><path d="M3.500 3.300h4V.8l4 3.200-4 3.200V4.900h-4z" fill="#9fd03c"/></svg>
<svg style="left:981px;top:737px;" width="14" height="8" viewBox="0 0 14 8"><path d="M0 4l4-3.500v2.500h2v2H4v2.500zM14 4l-4-3.500v2.500H8v2h2v2.500z" fill="#dedede"/><circle cx="7" cy="4" r="1.200" fill="none" stroke="#dedede" stroke-width=".9"/></svg>
<svg style="left:1233px;top:735px;" width="16" height="14" viewBox="0 0 16 14"><path d="M2 1v11" stroke="#c4c4c4" stroke-width="1.500"/><path d="M.5 2.500L2 .5l1.500 2zM.5 10.500L2 12.500l1.500-2z" fill="#c4c4c4"/><circle cx="8.5" cy="6" r="3.2" fill="none" stroke="#c4c4c4" stroke-width="1.4"/><path d="M10.7 8.2l3.300 3.300" stroke="#c4c4c4" stroke-width="1.9"/><path d="M7.0 6h3" stroke="#c4c4c4" stroke-width="1"/></svg>
<svg style="left:1257px;top:735px;" width="16" height="14" viewBox="0 0 16 14"><path d="M2 1v11" stroke="#c4c4c4" stroke-width="1.500"/><path d="M.5 .700L2 2.700 3.500.7zM.5 12.300L2 10.300l1.500 2z" fill="#c4c4c4"/><circle cx="8.5" cy="6" r="3.2" fill="none" stroke="#c4c4c4" stroke-width="1.4"/><path d="M10.7 8.2l3.300 3.300" stroke="#c4c4c4" stroke-width="1.9"/><path d="M7.0 6h3" stroke="#c4c4c4" stroke-width="1"/></svg>
<svg style="left:1280px;top:734px;" width="16" height="15" viewBox="0 0 16 15"><path d="M1 1.500h13" stroke="#c4c4c4" stroke-width="1.500"/><circle cx="7" cy="7.5" r="3.2" fill="none" stroke="#c4c4c4" stroke-width="1.4"/><path d="M9.2 9.7l3.300 3.300" stroke="#c4c4c4" stroke-width="1.9"/><path d="M5.5 7.5h3" stroke="#c4c4c4" stroke-width="1"/></svg>
<svg style="left:1304px;top:734px;" width="16" height="15" viewBox="0 0 16 15"><path d="M1 1.500h13" stroke="#555" stroke-width="1.500"/><circle cx="7" cy="7.5" r="3.2" fill="none" stroke="#555" stroke-width="1.4"/><path d="M9.2 9.7l3.300 3.300" stroke="#555" stroke-width="1.9"/><path d="M5.5 7.5h3" stroke="#555" stroke-width="1"/></svg>
<svg style="left:1327px;top:734px;" width="16" height="16" viewBox="0 0 16 16"><path d="M8 0v3M8 13v3M0 8h3M13 8h3" stroke="#555" stroke-width="1.300"/><circle cx="7.5" cy="7.5" r="3.2" fill="none" stroke="#555" stroke-width="1.4"/><path d="M9.7 9.7l3.300 3.300" stroke="#555" stroke-width="1.9"/><path d="M6.0 7.5h3" stroke="#555" stroke-width="1"/></svg>
<svg style="left:1351px;top:735px;" width="18" height="14" viewBox="0 0 18 14"><path d="M3.500 1c-2 2 -2 3 0 5c-2 2-2 3 0 5" fill="none" stroke="#c4c4c4" stroke-width="1.400"/><circle cx="10.5" cy="6" r="3.2" fill="none" stroke="#c4c4c4" stroke-width="1.4"/><path d="M12.7 8.2l3.300 3.300" stroke="#c4c4c4" stroke-width="1.9"/><path d="M9.0 6h3" stroke="#c4c4c4" stroke-width="1"/></svg>
<svg style="left:1374px;top:735px;" width="18" height="14" viewBox="0 0 18 14"><path d="M2 1c2 2 2 3 0 5c2 2 2 3 0 5" fill="none" stroke="#c4c4c4" stroke-width="1.400"/><circle cx="10.5" cy="6" r="3.2" fill="none" stroke="#c4c4c4" stroke-width="1.4"/><path d="M12.7 8.2l3.300 3.300" stroke="#c4c4c4" stroke-width="1.9"/><path d="M9.0 6h3" stroke="#c4c4c4" stroke-width="1"/></svg>
<svg style="left:1396px;top:735px;" width="20" height="14" viewBox="0 0 20 14"><path d="M2 1v10M5.500 1v10" fill="none" stroke="#c4c4c4" stroke-width="1.400"/><path d="M0 6h7.500" stroke="#c4c4c4" stroke-width="1"/><circle cx="12.5" cy="6" r="3.2" fill="none" stroke="#c4c4c4" stroke-width="1.4"/><path d="M14.7 8.2l3.300 3.300" stroke="#c4c4c4" stroke-width="1.9"/><path d="M11.0 6h3" stroke="#c4c4c4" stroke-width="1"/></svg>
<svg style="left:1421px;top:735px;" width="16" height="14" viewBox="0 0 16 14"><path d="M2 1v11" stroke="#555" stroke-width="1.500"/><circle cx="8.5" cy="6" r="3.2" fill="none" stroke="#555" stroke-width="1.4"/><path d="M10.7 8.2l3.300 3.300" stroke="#555" stroke-width="1.9"/><path d="M7.0 6h3" stroke="#555" stroke-width="1"/></svg>
<span style="left:440px;top:764.0px;font-size:9px;line-height:13px;color:#e6e6e6;font-weight:bold;letter-spacing:-0.211px;">Time</span>
<svg style="left:468px;top:767.0px;" width="6" height="8" viewBox="0 0 6 8"><path d="M0 1h6M0 3.700h6M0 6.400h6" stroke="#707070" stroke-width="1.200"/></svg>
<span style="left:481px;top:769.0px;font-size:45px;line-height:63px;color:#a4a4a4;letter-spacing:0.479px;">0:00.000</span>
<span style="left:725px;top:764.0px;font-size:9px;line-height:13px;color:#e6e6e6;font-weight:bold;letter-spacing:-0.168px;">Transport</span>
<svg style="left:773px;top:767.0px;" width="6" height="8" viewBox="0 0 6 8"><path d="M0 1h6M0 3.700h6M0 6.400h6" stroke="#707070" stroke-width="1.200"/></svg>
<svg style="left:725px;top:788.4px;" width="8" height="8" viewBox="0 0 8 8"><rect width="7.500" height="7.500" fill="#5c5c5c"/></svg>
<svg style="left:748.5px;top:787.4px;" width="9" height="10" viewBox="0 0 9 10"><path d="M.5 .700l8 4.300-8 4.300z" fill="#dedede"/></svg>
<svg style="left:773px;top:788.4px;" width="7" height="8" viewBox="0 0 7 8"><rect width="2.500" height="8" fill="#5c5c5c"/><rect x="4.500" width="2.500" height="8" fill="#5c5c5c"/></svg>
<svg style="left:795px;top:787.9px;" width="10" height="9" viewBox="0 0 10 9"><rect y=".5" width="2" height="8" fill="#dedede"/><path d="M9.500 .5v8L2.500 4.500z" fill="#dedede"/></svg>
<svg style="left:817px;top:788.4px;" width="13" height="8" viewBox="0 0 13 8"><path d="M6.500 .5v7L0 4zM13 .5v7L6.500 4z" fill="#dedede"/></svg>
<svg style="left:722px;top:809.4px;" width="13" height="8" viewBox="0 0 13 8"><path d="M0 .5v7l6.500-3.500zM6.500 .5v7L13 4z" fill="#dedede"/></svg>
<svg style="left:748px;top:808.9px;" width="10" height="9" viewBox="0 0 10 9"><rect x="8" y=".5" width="2" height="8" fill="#dedede"/><path d="M.5 .5v8l7-4z" fill="#dedede"/></svg>
<svg style="left:771.5px;top:808.9px;" width="9" height="9" viewBox="0 0 9 9"><circle cx="4.500" cy="4.500" r="3.700" fill="#c2363e"/></svg>
<svg style="left:793.5px;top:807.9px;" width="13" height="10" viewBox="0 0 13 10"><path d="M1 4v5h11V4" fill="none" stroke="#9fd03c" stroke-width="1.700"/><path d="M3.500 3.300h4V.8l4 3.200-4 3.200V4.900h-4z" fill="#9fd03c"/></svg>
<svg style="left:816.5px;top:809.4px;" width="14" height="8" viewBox="0 0 14 8"><path d="M0 4l4-3.500v2.500h2v2H4v2.500zM14 4l-4-3.500v2.500H8v2h2v2.500z" fill="#dedede"/><circle cx="7" cy="4" r="1.200" fill="none" stroke="#dedede" stroke-width=".9"/></svg>
<span style="left:850px;top:764.0px;font-size:9px;line-height:13px;color:#e6e6e6;font-weight:bold;letter-spacing:-0.124px;">Zoom</span>
<svg style="left:882px;top:767.0px;" width="6" height="8" viewBox="0 0 6 8"><path d="M0 1h6M0 3.700h6M0 6.400h6" stroke="#707070" stroke-width="1.200"/></svg>
<svg style="left:849px;top:786px;" width="16" height="14" viewBox="0 0 16 14"><path d="M2 1v11" stroke="#c4c4c4" stroke-width="1.500"/><path d="M.5 2.500L2 .5l1.500 2zM.5 10.500L2 12.500l1.500-2z" fill="#c4c4c4"/><circle cx="8.5" cy="6" r="3.2" fill="none" stroke="#c4c4c4" stroke-width="1.4"/><path d="M10.7 8.2l3.300 3.300" stroke="#c4c4c4" stroke-width="1.9"/><path d="M7.0 6h3" stroke="#c4c4c4" stroke-width="1"/></svg>
<svg style="left:873px;top:786px;" width="16" height="14" viewBox="0 0 16 14"><path d="M2 1v11" stroke="#c4c4c4" stroke-width="1.500"/><path d="M.5 .700L2 2.700 3.500.7zM.5 12.300L2 10.300l1.500 2z" fill="#c4c4c4"/><circle cx="8.5" cy="6" r="3.2" fill="none" stroke="#c4c4c4" stroke-width="1.4"/><path d="M10.7 8.2l3.300 3.300" stroke="#c4c4c4" stroke-width="1.9"/><path d="M7.0 6h3" stroke="#c4c4c4" stroke-width="1"/></svg>
<svg style="left:897px;top:785px;" width="16" height="15" viewBox="0 0 16 15"><path d="M1 1.500h13" stroke="#c4c4c4" stroke-width="1.500"/><circle cx="7" cy="7.5" r="3.2" fill="none" stroke="#c4c4c4" stroke-width="1.4"/><path d="M9.2 9.7l3.300 3.300" stroke="#c4c4c4" stroke-width="1.9"/><path d="M5.5 7.5h3" stroke="#c4c4c4" stroke-width="1"/></svg>
<svg style="left:920px;top:785px;" width="16" height="15" viewBox="0 0 16 15"><path d="M1 1.500h13" stroke="#555" stroke-width="1.500"/><circle cx="7" cy="7.5" r="3.2" fill="none" stroke="#555" stroke-width="1.4"/><path d="M9.2 9.7l3.300 3.300" stroke="#555" stroke-width="1.9"/><path d="M5.5 7.5h3" stroke="#555" stroke-width="1"/></svg>
<div style="left:842px;top:800px;width:103px;height:28px;overflow:hidden">
<svg style="left:-2px;top:7px;" width="16" height="16" viewBox="0 0 16 16"><path d="M8 0v3M8 13v3M0 8h3M13 8h3" stroke="#555" stroke-width="1.300"/><circle cx="7.5" cy="7.5" r="3.2" fill="none" stroke="#555" stroke-width="1.4"/><path d="M9.7 9.7l3.300 3.300" stroke="#555" stroke-width="1.9"/><path d="M6.0 7.5h3" stroke="#555" stroke-width="1"/></svg>
<svg style="left:20px;top:8px;" width="18" height="14" viewBox="0 0 18 14"><path d="M3.500 1c-2 2 -2 3 0 5c-2 2-2 3 0 5" fill="none" stroke="#c4c4c4" stroke-width="1.400"/><circle cx="10.5" cy="6" r="3.2" fill="none" stroke="#c4c4c4" stroke-width="1.4"/><path d="M12.7 8.2l3.300 3.300" stroke="#c4c4c4" stroke-width="1.9"/><path d="M9.0 6h3" stroke="#c4c4c4" stroke-width="1"/></svg>
<svg style="left:43px;top:8px;" width="18" height="14" viewBox="0 0 18 14"><path d="M2 1c2 2 2 3 0 5c2 2 2 3 0 5" fill="none" stroke="#c4c4c4" stroke-width="1.400"/><circle cx="10.5" cy="6" r="3.2" fill="none" stroke="#c4c4c4" stroke-width="1.4"/><path d="M12.7 8.2l3.300 3.300" stroke="#c4c4c4" stroke-width="1.9"/><path d="M9.0 6h3" stroke="#c4c4c4" stroke-width="1"/></svg>
<svg style="left:66px;top:8px;" width="20" height="14" viewBox="0 0 20 14"><path d="M2 1v10M5.500 1v10" fill="none" stroke="#c4c4c4" stroke-width="1.400"/><path d="M0 6h7.500" stroke="#c4c4c4" stroke-width="1"/><circle cx="12.5" cy="6" r="3.2" fill="none" stroke="#c4c4c4" stroke-width="1.4"/><path d="M14.7 8.2l3.300 3.300" stroke="#c4c4c4" stroke-width="1.9"/><path d="M11.0 6h3" stroke="#c4c4c4" stroke-width="1"/></svg>
<svg style="left:92px;top:8px;" width="16" height="14" viewBox="0 0 16 14"><path d="M2 1v11" stroke="#555" stroke-width="1.500"/><circle cx="8.5" cy="6" r="3.2" fill="none" stroke="#555" stroke-width="1.4"/><path d="M10.7 8.2l3.300 3.300" stroke="#555" stroke-width="1.9"/><path d="M7.0 6h3" stroke="#555" stroke-width="1"/></svg>
</div>
<span style="left:956px;top:764.5px;font-size:9px;line-height:13px;color:#e6e6e6;font-weight:bold;letter-spacing:-0.062px;">Selection/View</span>
<svg style="left:1026px;top:767.0px;" width="6" height="8" viewBox="0 0 6 8"><path d="M0 1h6M0 3.700h6M0 6.400h6" stroke="#707070" stroke-width="1.200"/></svg>
<span style="left:998px;top:781.5px;font-size:9px;line-height:13px;color:#a0a0a0;letter-spacing:-0.002px;">Start</span>
<span style="left:1062px;top:781.5px;font-size:9px;line-height:13px;color:#a0a0a0;letter-spacing:-0.672px;">End</span>
<span style="left:1124px;top:781.5px;font-size:9px;line-height:13px;color:#a0a0a0;letter-spacing:0.372px;">Duration</span>
<span style="left:956px;top:794.8px;font-size:9px;line-height:13px;color:#b4b4b4;letter-spacing:-0.114px;">Selection</span>
<span style="left:956px;top:811.5px;font-size:9px;line-height:13px;color:#b4b4b4;letter-spacing:-0.087px;">View</span>
<span style="left:999px;top:793.5px;font-size:9.5px;line-height:13px;color:#4585c8;letter-spacing:0.253px;">0:00.000</span>
<span style="left:999px;top:810.2px;font-size:9.5px;line-height:13px;color:#4585c8;letter-spacing:0.253px;">0:00.000</span>
<span style="left:1062px;top:793.5px;font-size:9.5px;line-height:13px;color:#4585c8;letter-spacing:0.253px;">0:00.000</span>
<span style="left:1062px;top:810.2px;font-size:9.5px;line-height:13px;color:#4585c8;letter-spacing:0.253px;">0:12.593</span>
<span style="left:1125px;top:793.5px;font-size:9.5px;line-height:13px;color:#4585c8;letter-spacing:0.253px;">0:00.000</span>
<span style="left:1125px;top:810.2px;font-size:9.5px;line-height:13px;color:#4585c8;letter-spacing:0.253px;">0:12.593</span>
<span style="left:1115px;top:831.5px;font-size:9px;line-height:13px;color:#a8a8a8;letter-spacing:0.426px;">48000 Hz • 32-bit (float) • Mono</span>
<span style="left:1270px;top:831.5px;font-size:9px;line-height:13px;color:#a8a8a8;letter-spacing:0.069px;">2.31 MB</span>
<span style="left:1335px;top:831.5px;font-size:9px;line-height:13px;color:#a8a8a8;letter-spacing:0.371px;">0:12.593</span>
<span style="left:1391px;top:831.5px;font-size:9px;line-height:13px;color:#a8a8a8;letter-spacing:0.140px;">240.17 GB free</span>
<div style="left:1491px;top:55px;width:9px;height:22px;background:#1c1c1c;"></div>
<span style="left:1461.5px;top:59.5px;font-size:9px;line-height:13px;color:#e6e6e6;font-weight:bold;letter-spacing:-0.337px;">Levels</span>
<div style="left:1456.5px;top:82px;width:27.5px;height:744px;background:#000;"></div>
<div style="left:1456px;top:822.5px;width:31.5px;height:1.5px;background:#a89c6c;"></div>
<svg style="left:1485px;top:80px;" width="4" height="748" viewBox="0 0 4 748"><rect x="0" y="10.0" width="3" height="1.400" fill="#8e8e8e"/><rect x=".3" y="22.4" width="1.500" height="1" fill="#5a5a5a"/><rect x=".3" y="34.6" width="1.500" height="1" fill="#5a5a5a"/><rect x="0" y="46.7" width="3" height="1.400" fill="#8e8e8e"/><rect x=".3" y="59.1" width="1.500" height="1" fill="#5a5a5a"/><rect x=".3" y="71.3" width="1.500" height="1" fill="#5a5a5a"/><rect x="0" y="83.3" width="3" height="1.400" fill="#8e8e8e"/><rect x=".3" y="95.7" width="1.500" height="1" fill="#5a5a5a"/><rect x=".3" y="108.0" width="1.500" height="1" fill="#5a5a5a"/><rect x="0" y="120.0" width="3" height="1.400" fill="#8e8e8e"/><rect x=".3" y="132.4" width="1.500" height="1" fill="#5a5a5a"/><rect x=".3" y="144.6" width="1.500" height="1" fill="#5a5a5a"/><rect x="0" y="156.6" width="3" height="1.400" fill="#8e8e8e"/><rect x=".3" y="169.1" width="1.500" height="1" fill="#5a5a5a"/><rect x=".3" y="181.3" width="1.500" height="1" fill="#5a5a5a"/><rect x="0" y="193.3" width="3" height="1.400" fill="#8e8e8e"/><rect x=".3" y="205.7" width="1.500" height="1" fill="#5a5a5a"/><rect x=".3" y="217.9" width="1.500" height="1" fill="#5a5a5a"/><rect x="0" y="230.0" width="3" height="1.400" fill="#8e8e8e"/><rect x=".3" y="242.4" width="1.500" height="1" fill="#5a5a5a"/><rect x=".3" y="254.6" width="1.500" height="1" fill="#5a5a5a"/><rect x="0" y="266.6" width="3" height="1.400" fill="#8e8e8e"/><rect x=".3" y="279.0" width="1.500" height="1" fill="#5a5a5a"/><rect x=".3" y="291.3" width="1.500" height="1" fill="#5a5a5a"/><rect x="0" y="303.3" width="3" height="1.400" fill="#8e8e8e"/><rect x=".3" y="315.7" width="1.500" height="1" fill="#5a5a5a"/><rect x=".3" y="327.9" width="1.500" height="1" fill="#5a5a5a"/><rect x="0" y="339.9" width="3" height="1.400" fill="#8e8e8e"/><rect x=".3" y="352.4" width="1.500" height="1" fill="#5a5a5a"/><rect x=".3" y="364.6" width="1.500" height="1" fill="#5a5a5a"/><rect x="0" y="376.6" width="3" height="1.400" fill="#8e8e8e"/><rect x=".3" y="389.0" width="1.500" height="1" fill="#5a5a5a"/><rect x=".3" y="401.2" width="1.500" height="1" fill="#5a5a5a"/><rect x="0" y="413.3" width="3" height="1.400" fill="#8e8e8e"/><rect x=".3" y="425.7" width="1.500" height="1" fill="#5a5a5a"/><rect x=".3" y="437.9" width="1.500" height="1" fill="#5a5a5a"/><rect x="0" y="449.9" width="3" height="1.400" fill="#8e8e8e"/><rect x=".3" y="462.3" width="1.500" height="1" fill="#5a5a5a"/><rect x=".3" y="474.6" width="1.500" height="1" fill="#5a5a5a"/><rect x="0" y="486.6" width="3" height="1.400" fill="#8e8e8e"/><rect x=".3" y="499.0" width="1.500" height="1" fill="#5a5a5a"/><rect x=".3" y="511.2" width="1.500" height="1" fill="#5a5a5a"/><rect x="0" y="523.2" width="3" height="1.400" fill="#8e8e8e"/><rect x=".3" y="535.7" width="1.500" height="1" fill="#5a5a5a"/><rect x=".3" y="547.9" width="1.500" height="1" fill="#5a5a5a"/><rect x="0" y="559.9" width="3" height="1.400" fill="#8e8e8e"/><rect x=".3" y="572.3" width="1.500" height="1" fill="#5a5a5a"/><rect x=".3" y="584.5" width="1.500" height="1" fill="#5a5a5a"/><rect x="0" y="596.6" width="3" height="1.400" fill="#8e8e8e"/><rect x=".3" y="609.0" width="1.500" height="1" fill="#5a5a5a"/><rect x=".3" y="621.2" width="1.500" height="1" fill="#5a5a5a"/><rect x="0" y="633.2" width="3" height="1.400" fill="#8e8e8e"/><rect x=".3" y="645.6" width="1.500" height="1" fill="#5a5a5a"/><rect x=".3" y="657.9" width="1.500" height="1" fill="#5a5a5a"/><rect x="0" y="669.9" width="3" height="1.400" fill="#8e8e8e"/><rect x=".3" y="682.3" width="1.500" height="1" fill="#5a5a5a"/><rect x=".3" y="694.5" width="1.500" height="1" fill="#5a5a5a"/><rect x="0" y="706.5" width="3" height="1.400" fill="#8e8e8e"/><rect x=".3" y="719.0" width="1.500" height="1" fill="#5a5a5a"/><rect x=".3" y="731.2" width="1.500" height="1" fill="#5a5a5a"/><rect x="0" y="743.2" width="3" height="1.400" fill="#8e8e8e"/></svg>
<div style="left:1488px;top:78px;width:12px;height:740px;overflow:hidden">
<span style="left:2px;top:6.7px;font-size:9px;line-height:12px;color:#a4a4a4;-webkit-text-stroke:.25px #a4a4a4">0</span>
<span style="left:2px;top:43.4px;font-size:9px;line-height:12px;color:#a4a4a4;-webkit-text-stroke:.25px #a4a4a4">-3</span>
<span style="left:2px;top:80.0px;font-size:9px;line-height:12px;color:#a4a4a4;-webkit-text-stroke:.25px #a4a4a4">-6</span>
<span style="left:2px;top:116.7px;font-size:9px;line-height:12px;color:#a4a4a4;-webkit-text-stroke:.25px #a4a4a4">-9</span>
<span style="left:2px;top:153.3px;font-size:9px;line-height:12px;color:#a4a4a4;-webkit-text-stroke:.25px #a4a4a4">-12</span>
<span style="left:2px;top:190.0px;font-size:9px;line-height:12px;color:#a4a4a4;-webkit-text-stroke:.25px #a4a4a4">-15</span>
<span style="left:2px;top:226.7px;font-size:9px;line-height:12px;color:#a4a4a4;-webkit-text-stroke:.25px #a4a4a4">-18</span>
<span style="left:2px;top:263.3px;font-size:9px;line-height:12px;color:#a4a4a4;-webkit-text-stroke:.25px #a4a4a4">-21</span>
<span style="left:2px;top:300.0px;font-size:9px;line-height:12px;color:#a4a4a4;-webkit-text-stroke:.25px #a4a4a4">-24</span>
<span style="left:2px;top:336.6px;font-size:9px;line-height:12px;color:#a4a4a4;-webkit-text-stroke:.25px #a4a4a4">-27</span>
<span style="left:2px;top:373.3px;font-size:9px;line-height:12px;color:#a4a4a4;-webkit-text-stroke:.25px #a4a4a4">-30</span>
<span style="left:2px;top:410.0px;font-size:9px;line-height:12px;color:#a4a4a4;-webkit-text-stroke:.25px #a4a4a4">-33</span>
<span style="left:2px;top:446.6px;font-size:9px;line-height:12px;color:#a4a4a4;-webkit-text-stroke:.25px #a4a4a4">-36</span>
<span style="left:2px;top:483.3px;font-size:9px;line-height:12px;color:#a4a4a4;-webkit-text-stroke:.25px #a4a4a4">-39</span>
<span style="left:2px;top:519.9px;font-size:9px;line-height:12px;color:#a4a4a4;-webkit-text-stroke:.25px #a4a4a4">-42</span>
<span style="left:2px;top:556.6px;font-size:9px;line-height:12px;color:#a4a4a4;-webkit-text-stroke:.25px #a4a4a4">-45</span>
<span style="left:2px;top:593.3px;font-size:9px;line-height:12px;color:#a4a4a4;-webkit-text-stroke:.25px #a4a4a4">-48</span>
<span style="left:2px;top:629.9px;font-size:9px;line-height:12px;color:#a4a4a4;-webkit-text-stroke:.25px #a4a4a4">-51</span>
<span style="left:2px;top:666.6px;font-size:9px;line-height:12px;color:#a4a4a4;-webkit-text-stroke:.25px #a4a4a4">-54</span>
<span style="left:2px;top:703.2px;font-size:9px;line-height:12px;color:#a4a4a4;-webkit-text-stroke:.25px #a4a4a4">-57</span>
</div>
<span style="left:1490px;top:816.0px;font-size:8px;line-height:11px;color:#9a9a9a;letter-spacing:-0.393px;">dB</span></div></body></html>
